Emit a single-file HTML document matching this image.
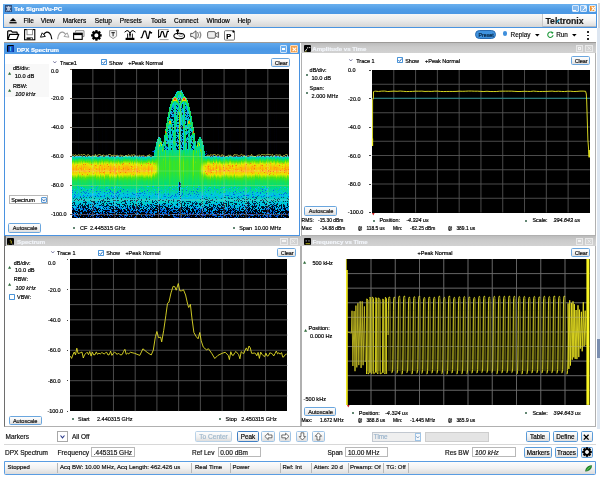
<!DOCTYPE html>
<html><head><meta charset="utf-8"><title>Tek SignalVu-PC</title>
<style>
html,body{margin:0;padding:0;background:#fff;}
body{width:600px;height:480px;position:relative;overflow:hidden;font-family:"Liberation Sans", sans-serif;}
.t{position:absolute;white-space:pre;-webkit-text-stroke:0.18px currentColor;}
.r{position:absolute;box-sizing:border-box;}
svg{position:absolute;overflow:visible;}
.dpx i{position:absolute;top:0;width:1.05px;height:100%;}
.btn{position:absolute;box-sizing:border-box;border:0.9px solid #6aa6de;border-radius:1.6px;background:linear-gradient(#fdfdfd,#f2f2f2 55%,#dedede);}
</style></head><body>
<div class="r" style="left:3.40px;top:3.70px;width:593.20px;height:471.00px;background:#fff;"></div>
<div class="r" style="left:3.40px;top:3.70px;width:593.20px;height:10.20px;background:linear-gradient(#6ab0ee,#4f9ce6 55%,#4a97e4);"></div>
<div class="r" style="left:4.60px;top:4.90px;width:7.20px;height:6.80px;background:#2f4f80;"></div>
<svg style="left:4.6px;top:4.9px" width="7.2" height="6.8" viewBox="0 0 7.2 6.8"><path d="M1 2.2H6.2M2.6 2.2V5.2Q2.4 6 1.2 5.8M4.6 2.2V5.2Q4.8 6 6 5.8M3.6 1V6" stroke="#dfe8f5" stroke-width="0.8" fill="none"/></svg>
<span class="t" style="left:14.20px;top:6px;font-size:6.1px;line-height:6.1px;color:#fff;font-weight:bold;">Tek SignalVu-PC</span>
<div class="r" style="left:571.80px;top:4.60px;width:7.00px;height:7.60px;background:#86bbf0;border-radius:1px;border:0.5px solid #d8e8fa;"></div>
<div class="r" style="left:580.30px;top:4.60px;width:7.00px;height:7.60px;background:#86bbf0;border-radius:1px;border:0.5px solid #d8e8fa;"></div>
<div class="r" style="left:589.40px;top:4.60px;width:7.00px;height:7.60px;background:#f5952e;border-radius:1px;border:0.5px solid #d8e8fa;"></div>
<div class="r" style="left:573.40px;top:10.00px;width:3.00px;height:1.00px;background:#fff;"></div>
<svg style="left:581.6px;top:5.8px" width="4.6" height="5" viewBox="0 0 4.6 5"><path d="M0.6 4.4L4 0.8M2 0.8H4V2.8" stroke="#fff" stroke-width="1" fill="none"/></svg>
<svg style="left:590.6px;top:5.8px" width="4.8" height="5.2" viewBox="0 0 4.8 5.2"><path d="M0.6 0.6L4.2 4.6M4.2 0.6L0.6 4.6" stroke="#fff" stroke-width="1.2" fill="none"/></svg>
<div class="r" style="left:3.40px;top:13.90px;width:593.20px;height:13.80px;background:linear-gradient(#f6f6f6,#ececec 45%,#d6d6d6);border-left:1.2px solid #4a94e0;border-right:1.2px solid #4a94e0;border-bottom:1.2px solid #4a94e0;"></div>
<svg style="left:9px;top:17.5px" width="8" height="6" viewBox="0 0 8 6"><path d="M4 0L7.4 3.2H0.6Z" fill="#000"/><rect x="0.4" y="4.1" width="7.2" height="1.3" fill="#000"/></svg>
<span class="t" style="left:23.40px;top:18px;font-size:6.5px;line-height:6.5px;color:#000;">File</span>
<span class="t" style="left:40.80px;top:18px;font-size:6.5px;line-height:6.5px;color:#000;">View</span>
<span class="t" style="left:62.80px;top:18px;font-size:6.5px;line-height:6.5px;color:#000;">Markers</span>
<span class="t" style="left:94.80px;top:18px;font-size:6.5px;line-height:6.5px;color:#000;">Setup</span>
<span class="t" style="left:119.80px;top:18px;font-size:6.5px;line-height:6.5px;color:#000;">Presets</span>
<span class="t" style="left:151.00px;top:18px;font-size:6.5px;line-height:6.5px;color:#000;">Tools</span>
<span class="t" style="left:174.00px;top:18px;font-size:6.5px;line-height:6.5px;color:#000;">Connect</span>
<span class="t" style="left:206.60px;top:18px;font-size:6.5px;line-height:6.5px;color:#000;">Window</span>
<span class="t" style="left:237.40px;top:18px;font-size:6.5px;line-height:6.5px;color:#000;">Help</span>
<div class="r" style="left:541.50px;top:14.20px;width:54.20px;height:12.40px;background:linear-gradient(#fff,#f4f4f4 55%,#dedede);border-left:0.6px solid #c8c8c8;border-bottom:0.6px solid #b0b8c4;"></div>
<span class="t" style="left:545.50px;top:17px;font-size:8.7px;line-height:8.7px;color:#1a1a1a;font-weight:bold;letter-spacing:-0.05px;">Tektronix</span>
<svg style="left:555.6px;top:19.0px" width="4.4" height="5.2" viewBox="0 0 4.4 5.2"><path d="M0.8 3.4L3.4 0.6" stroke="#18a8d8" stroke-width="1.3"/></svg>
<div class="r" style="left:4.40px;top:27.70px;width:591.20px;height:15.00px;background:#fff;"></div>
<div class="r" style="left:4.40px;top:42.00px;width:591.20px;height:1.40px;background:#9c9a98;"></div>
<svg style="left:6.6px;top:29.6px" width="12.4" height="10.4" viewBox="0 0 12.4 10.4"><path d="M0.7 9.4V1.6Q0.7 0.9 1.4 0.9H4.2L5.4 2.2H9.6Q10.2 2.2 10.2 2.9V4.2" fill="none" stroke="#000" stroke-width="1.2"/><path d="M0.8 9.5L2.8 4.3H11.8L9.8 9.5Z" fill="#fff" stroke="#000" stroke-width="1.2" stroke-linejoin="round"/></svg>
<svg style="left:23.8px;top:29.4px" width="11.6" height="11.4" viewBox="0 0 11.6 11.4"><rect x="0.6" y="0.6" width="10.2" height="10.2" fill="#fff" stroke="#000" stroke-width="1.1"/><rect x="3" y="0.6" width="5.4" height="5.2" fill="#fff" stroke="#777" stroke-width="0.8"/><rect x="2.6" y="8.4" width="6.2" height="2.2" fill="#222"/><rect x="6.6" y="8.9" width="1.3" height="1.3" fill="#ddd"/></svg>
<svg style="left:40.4px;top:30.6px" width="12.4" height="9" viewBox="0 0 12.4 9"><path d="M3.4 3.8Q6.6 -0.6 9.6 2.2Q11.4 4.2 11.8 8.2" fill="none" stroke="#000" stroke-width="1.2"/><path d="M0.5 6.2L2.2 1.8L5.4 5.4Z" fill="#fff" stroke="#000" stroke-width="0.9" stroke-linejoin="round"/></svg>
<svg style="left:57.0px;top:30.6px" width="12.4" height="9" viewBox="0 0 12.4 9"><path d="M9 3.8Q5.8 -0.6 2.8 2.2Q1 4.2 0.6 8.2" fill="none" stroke="#9a9a9a" stroke-width="1.2"/><path d="M11.9 6.2L10.2 1.8L7 5.4Z" fill="#fff" stroke="#9a9a9a" stroke-width="0.9" stroke-linejoin="round"/></svg>
<svg style="left:73.4px;top:29.6px" width="12" height="10.2" viewBox="0 0 12 10.2"><path d="M2.6 2.4V0.7H11V6.6H9.6" fill="none" stroke="#8a8a8a" stroke-width="1"/><rect x="0.6" y="3.2" width="8.6" height="6.2" fill="#fff" stroke="#000" stroke-width="1.1"/><rect x="0.6" y="3.2" width="8.6" height="1.9" fill="#000"/></svg>
<svg style="left:91.2px;top:29.6px" width="10.8" height="10.8" viewBox="0 0 10.8 10.8"><g transform="translate(5.4 5.4)"><rect x="-1.15" y="-5.3" width="2.3" height="3" transform="rotate(0)" fill="#000"/><rect x="-1.15" y="-5.3" width="2.3" height="3" transform="rotate(45)" fill="#000"/><rect x="-1.15" y="-5.3" width="2.3" height="3" transform="rotate(90)" fill="#000"/><rect x="-1.15" y="-5.3" width="2.3" height="3" transform="rotate(135)" fill="#000"/><rect x="-1.15" y="-5.3" width="2.3" height="3" transform="rotate(180)" fill="#000"/><rect x="-1.15" y="-5.3" width="2.3" height="3" transform="rotate(225)" fill="#000"/><rect x="-1.15" y="-5.3" width="2.3" height="3" transform="rotate(270)" fill="#000"/><rect x="-1.15" y="-5.3" width="2.3" height="3" transform="rotate(315)" fill="#000"/><circle r="3.1" fill="none" stroke="#000" stroke-width="2.0"/></g></svg>
<svg style="left:109.2px;top:29.8px" width="8.4" height="9.4" viewBox="0 0 8.4 9.4"><path d="M0.6 0.6H7.6V6.2L4.1 8.6L0.6 6.2Z" fill="#f4f4f4" stroke="#8c8c8c" stroke-width="0.9"/><path d="M2.4 2.6H5.8M4.1 2.6V6.2" stroke="#333" stroke-width="1.1" fill="none"/></svg>
<svg style="left:124.4px;top:28.8px" width="12" height="11.6" viewBox="0 0 12 11.6"><path d="M0.6 3.2Q3.2 0.2 5.0 2.4Q6 4 6 6.5M11.4 3.2Q8.8 0.2 7.0 2.4Q6 4 6 6.5" fill="none" stroke="#000" stroke-width="1"/><path d="M3.6 9V4.6M8.4 9V4.6M6 8.6V5" stroke="#000" stroke-width="0.9" fill="none"/><rect x="1.6" y="8.8" width="8.8" height="2.2" fill="#000"/></svg>
<svg style="left:140.0px;top:29.6px" width="12.6" height="10.2" viewBox="0 0 12.6 10.2"><path d="M0.6 7.6H1.8L4 1.2H5.6L7.4 8.4H8.4L9.8 1.4L11 3.2L12 2.4" fill="none" stroke="#000" stroke-width="1.2" stroke-linejoin="round"/></svg>
<svg style="left:156.8px;top:29.2px" width="12.6" height="11.2" viewBox="0 0 12.6 11.2"><path d="M1 0.6H11.6M2.6 10.6H11.6" stroke="#777" stroke-width="0.7"/><path d="M1.6 1V9" stroke="#000" stroke-width="1"/><path d="M1.6 7.6H3.2L4.6 2.6H6L7.6 8H9L10.4 2.4H12" fill="none" stroke="#000" stroke-width="1.2" stroke-linejoin="round"/></svg>
<svg style="left:173.4px;top:29.4px" width="12.4" height="10.4" viewBox="0 0 12.4 10.4"><ellipse cx="6.2" cy="7" rx="5.4" ry="2.8" fill="#fff" stroke="#000" stroke-width="1.1"/><ellipse cx="8" cy="6.6" rx="2" ry="1" fill="none" stroke="#555" stroke-width="0.6"/><path d="M4.6 5.6V2.6" stroke="#000" stroke-width="1.2"/><rect x="3.2" y="0.4" width="2.8" height="2.4" rx="0.8" fill="#000"/></svg>
<svg style="left:190.0px;top:29.8px" width="12.2" height="10" viewBox="0 0 12.2 10"><path d="M0.7 3.4H2.8L6 0.8V9.2L2.8 6.6H0.7Z" fill="#f2f2f2" stroke="#444" stroke-width="0.9" stroke-linejoin="round"/><path d="M7.6 2Q9.4 5 7.6 8" fill="none" stroke="#666" stroke-width="0.9"/><path d="M9.6 1.6Q12 5 9.6 8.4" fill="none" stroke="#888" stroke-width="1.2"/></svg>
<svg style="left:206.8px;top:31px" width="12.6" height="8.2" viewBox="0 0 12.6 8.2"><rect x="0.6" y="0.6" width="7.8" height="6.6" rx="1.4" fill="#eee" stroke="#555" stroke-width="0.9"/><path d="M8.6 3L11.6 1.2V6.6L8.6 4.8Z" fill="#ddd" stroke="#555" stroke-width="0.9" stroke-linejoin="round"/></svg>
<svg style="left:223.8px;top:29.8px" width="11.6" height="10.6" viewBox="0 0 11.6 10.6"><rect x="0.5" y="0.7" width="10" height="9.4" rx="1" fill="#fff" stroke="#555" stroke-width="0.8"/><circle cx="9.4" cy="1.6" r="1.1" fill="#000"/></svg>
<span class="t" style="left:226.20px;top:33px;font-size:7.6px;line-height:7.6px;color:#000;font-weight:bold;">P</span>
<div class="r" style="left:475.2px;top:30.4px;width:20.6px;height:9px;border-radius:4.5px;background:#3f92de;border:0.8px solid #2a6bb0;"></div>
<span class="t" style="left:478.60px;top:33px;font-size:5.2px;line-height:5.2px;color:#06233f;">Preset</span>
<div class="r" style="left:502.9px;top:31.4px;width:4.2px;height:4.2px;border-radius:50%;background:#3f8fdc;"></div>
<span class="t" style="left:510.60px;top:32px;font-size:6.4px;line-height:6.4px;color:#111;">Replay</span>
<svg style="left:534.6px;top:33.6px" width="4.6" height="2.8" viewBox="0 0 4.6 2.8"><path d="M0 0H4.6L2.3 2.6Z" fill="#000"/></svg>
<svg style="left:547.0px;top:30.6px" width="6.8" height="6.8" viewBox="0 0 6.8 6.8"><path d="M5.6 2.1A2.7 2.7 0 1 0 6.1 4.2" fill="none" stroke="#1f9a3c" stroke-width="1.1"/><path d="M4.2 0.4L6.6 1.2L5 3.2Z" fill="#1f9a3c"/></svg>
<span class="t" style="left:556.20px;top:32px;font-size:6.4px;line-height:6.4px;color:#111;">Run</span>
<svg style="left:571.6px;top:33.6px" width="4.6" height="2.8" viewBox="0 0 4.6 2.8"><path d="M0 0H4.6L2.3 2.6Z" fill="#000"/></svg>
<div class="r" style="left:587.30px;top:31.00px;width:1.60px;height:1.60px;background:#000;border-radius:50%;"></div>
<div class="r" style="left:587.30px;top:34.60px;width:1.60px;height:1.60px;background:#000;border-radius:50%;"></div>
<div class="r" style="left:587.30px;top:38.20px;width:1.60px;height:1.60px;background:#000;border-radius:50%;"></div>
<div class="r" style="left:3.70px;top:43.40px;width:296.40px;height:192.50px;background:#fff;border:1.7px solid #4a92e0;"></div>
<div class="r" style="left:3.70px;top:43.40px;width:296.40px;height:10.80px;background:linear-gradient(#60a8ec,#4a97e5 55%,#4f9be6);"></div>
<div class="r" style="left:6.70px;top:45.00px;width:7.40px;height:7.40px;background:#050505;border-radius:1px;"></div>
<div class="r" style="left:7.50px;top:45.80px;width:6.00px;height:6.60px;background:linear-gradient(90deg,#0a2a9a,#1e6ae0 50%,#0a2a9a);"></div>
<div class="r" style="left:9.70px;top:47.00px;width:1.40px;height:4.40px;background:#35c8e8;"></div>
<span class="t" style="left:16.70px;top:47px;font-size:6.1px;line-height:6.1px;color:#fff;font-weight:bold;">DPX Spectrum</span>
<div class="r" style="left:280.10px;top:45.30px;width:7.40px;height:7.40px;background:#6aaef0;border:0.6px solid #cfe3f8;border-radius:1px;"></div>
<div class="r" style="left:281.90px;top:47.50px;width:3.60px;height:2.60px;background:#fff;"></div>
<div class="r" style="left:290.20px;top:45.30px;width:7.90px;height:7.50px;background:#f5a04a;border:0.6px solid #fbd9b8;border-radius:1px;"></div>
<svg style="left:291.90000000000003px;top:46.6px" width="4.8" height="4.8" viewBox="0 0 4.8 4.8"><path d="M0.6 0.6L4.2 4.2M4.2 0.6L0.6 4.2" stroke="#fff" stroke-width="1.1"/></svg>
<div class="r" style="left:5.20px;top:64.40px;width:43.50px;height:33.00px;background:#f8f8f8;"></div>
<svg style="left:52.8px;top:60.6px" width="3.6" height="2.6" viewBox="0 0 3.6 2.6"><path d="M0.3 0.3L1.8 2L3.3 0.3" stroke="#5a5a8a" stroke-width="0.8" fill="none"/></svg>
<span class="t" style="left:60.00px;top:61px;font-size:5.5px;line-height:5.5px;color:#000;">Trace1</span>
<div class="r" style="left:100.60px;top:59.30px;width:6.00px;height:6.00px;background:#fff;border:0.8px solid #4a94d8;border-radius:0.8px;"></div>
<svg style="left:100.6px;top:59.3px" width="6.0" height="6.0" viewBox="0 0 6.0 6.0"><path d="M1.4 3.2L2.6 4.4L4.8 1.6" stroke="#2a6db8" stroke-width="1" fill="none"/></svg>
<span class="t" style="left:109.00px;top:61px;font-size:5.5px;line-height:5.5px;color:#000;">Show</span>
<span class="t" style="left:128.20px;top:61px;font-size:5.5px;line-height:5.5px;color:#000;">+Peak Normal</span>
<div class="btn" style="left:271.1px;top:57.5px;width:18.6px;height:9.2px;"></div>
<span class="t" style="left:274.70px;top:61px;font-size:5.6px;line-height:5.6px;color:#111;letter-spacing:-0.12px;">Clear</span>
<svg style="left:7.800000000000001px;top:71.8px" width="3.2" height="2.8" viewBox="0 0 3.2 2.8"><path d="M1.6 0L3.2 2.8H0Z" fill="#2f6a3a"/></svg>
<span class="t" style="left:13.00px;top:66px;font-size:5.5px;line-height:5.5px;color:#000;">dB/div:</span>
<span class="t" style="left:14.70px;top:74px;font-size:5.7px;line-height:5.7px;color:#000;">10.0 dB</span>
<svg style="left:7.800000000000001px;top:88.8px" width="3.2" height="2.8" viewBox="0 0 3.2 2.8"><path d="M1.6 0L3.2 2.8H0Z" fill="#2f6a3a"/></svg>
<span class="t" style="left:13.00px;top:84px;font-size:5.5px;line-height:5.5px;color:#000;">RBW:</span>
<span class="t" style="left:15.30px;top:92px;font-size:5.5px;line-height:5.5px;color:#000;font-style:italic;">100 kHz</span>
<span class="t" style="left:51.00px;top:69px;font-size:5.5px;line-height:5.5px;color:#000;">0.0</span>
<div class="r" style="left:70.20px;top:69.20px;width:1.40px;height:0.60px;background:#6a5a4a;"></div>
<span class="t" style="left:51.00px;top:96px;font-size:5.5px;line-height:5.5px;color:#000;">-20.0</span>
<div class="r" style="left:70.20px;top:98.20px;width:1.40px;height:0.60px;background:#6a5a4a;"></div>
<span class="t" style="left:51.00px;top:125px;font-size:5.5px;line-height:5.5px;color:#000;">-40.0</span>
<div class="r" style="left:70.20px;top:127.20px;width:1.40px;height:0.60px;background:#6a5a4a;"></div>
<span class="t" style="left:51.00px;top:154px;font-size:5.5px;line-height:5.5px;color:#000;">-60.0</span>
<div class="r" style="left:70.20px;top:156.20px;width:1.40px;height:0.60px;background:#6a5a4a;"></div>
<span class="t" style="left:51.00px;top:183px;font-size:5.5px;line-height:5.5px;color:#000;">-80.0</span>
<div class="r" style="left:70.20px;top:185.20px;width:1.40px;height:0.60px;background:#6a5a4a;"></div>
<span class="t" style="left:51.00px;top:212px;font-size:5.5px;line-height:5.5px;color:#000;">-100.0</span>
<div class="r" style="left:70.20px;top:214.20px;width:1.40px;height:0.60px;background:#6a5a4a;"></div>
<div class="r dpx" style="left:72.2px;top:69.0px;width:216.8px;height:148.9px;background:#000;overflow:hidden;"><i style="left:0px;background:linear-gradient(#000 0.5px,#000 86.5px,#002040 87.5px,#00cfc5 88.5px,#00d69f 89.5px,#06de70 90.5px,#43e418 92.5px,#d3eb02 95.5px,#eae002 96.5px,#fdbc09 100.5px,#d8eb01 105.5px,#46e414 108.5px,#1ae053 111.5px,#00db8a 118.5px,#00c6eb 125.5px,#00b3e8 127.5px,#005877 128.5px,#002d4f 132.5px,#000714 140.5px,#000001 148.5px)"></i><i style="left:1px;background:linear-gradient(#000 0.5px,#000 86.5px,#00385a 87.5px,#00d3b1 88.5px,#00db8a 89.5px,#67e610 92.5px,#d3eb02 94.5px,#ffb80a 97.5px,#ffa20a 100.5px,#ecde03 105.5px,#46e414 109.5px,#27e140 111.5px,#01de76 118.5px,#00c8ea 126.5px,#00b4e8 128.5px,#005979 129.5px,#002c4e 133.5px,#000817 140.5px,#000001 148.5px)"></i><i style="left:2px;background:linear-gradient(#000 0.5px,#000 87.5px,#00cdd2 88.5px,#00dc82 90.5px,#3ae325 92.5px,#e8e402 96.5px,#ffb60a 100.5px,#e9e302 105.5px,#43e418 109.5px,#19e055 112.5px,#00db8a 119.5px,#00c5eb 126.5px,#00b1e8 128.5px,#005575 129.5px,#002b4d 133.5px,#000817 140.5px,#000002 148.5px)"></i><i style="left:3px;background:linear-gradient(#000 0.5px,#000 86.5px,#005071 87.5px,#00d2b7 88.5px,#00d991 89.5px,#58e512 92.5px,#e6e801 95.5px,#ffb40a 99.5px,#fdbd09 102.5px,#e5ea00 105.5px,#53e512 108.5px,#1fe14c 111.5px,#00dc81 118.5px,#00c1ea 126.5px,#00b7e9 127.5px,#005d7c 128.5px,#002749 133.5px,#000715 140.5px,#000001 148.5px)"></i><i style="left:4px;background:linear-gradient(#000 0.5px,#000 86.5px,#000c20 87.5px,#00d2b9 88.5px,#00d992 89.5px,#0edf65 90.5px,#5be511 92.5px,#e9e302 95.5px,#ffb20a 98.5px,#ffa20a 100.5px,#eddb03 105.5px,#d8eb02 106.5px,#4be413 109.5px,#21e14a 112.5px,#02de75 118.5px,#00c0ea 127.5px,#00b6e9 128.5px,#005b7a 129.5px,#002d4f 133.5px,#000613 141.5px,#000002 148.5px)"></i><i style="left:5px;background:linear-gradient(#000 0.5px,#000 86.5px,#001431 87.5px,#00cfc8 88.5px,#00d6a3 89.5px,#03de74 90.5px,#41e41b 92.5px,#e9e302 96.5px,#fcbe09 100.5px,#d7eb02 105.5px,#46e414 108.5px,#1ae053 111.5px,#00da8b 118.5px,#00c6eb 125.5px,#00b3e8 127.5px,#005777 128.5px,#002d4f 132.5px,#000714 140.5px,#000001 148.5px)"></i><i style="left:6px;background:linear-gradient(#000 0.5px,#000209 86.5px,#00ccd4 87.5px,#00dc83 89.5px,#5be511 92.5px,#e4ec00 95.5px,#fac208 99.5px,#d5eb02 104.5px,#45e415 107.5px,#1ae053 110.5px,#00da8d 117.5px,#00c5eb 124.5px,#00b2e8 126.5px,#005676 127.5px,#002d4f 131.5px,#000715 139.5px,#000001 148.5px)"></i><i style="left:7px;background:linear-gradient(#000 0.5px,#000 86.5px,#00bce9 87.5px,#00da8a 89.5px,#63e510 92.5px,#cdeb03 94.5px,#e9e202 95.5px,#ffb60a 98.5px,#ffb80a 102.5px,#e7e701 105.5px,#59e512 108.5px,#21e149 111.5px,#00dd7d 118.5px,#00c3ea 126.5px,#00b9e9 127.5px,#00607e 128.5px,#00284a 133.5px,#000715 140.5px,#000001 148.5px)"></i><i style="left:8px;background:linear-gradient(#000 0.5px,#000 86.5px,#00ccd8 87.5px,#00da8b 89.5px,#5ce511 92.5px,#e6e801 95.5px,#ffb90a 99.5px,#e9e202 104.5px,#d3eb02 105.5px,#44e416 108.5px,#19e055 111.5px,#00db89 118.5px,#00c5eb 125.5px,#00b2e8 127.5px,#005676 128.5px,#002c4e 132.5px,#000613 140.5px,#000001 148.5px)"></i><i style="left:9px;background:linear-gradient(#000 0.5px,#000 86.5px,#00d1be 87.5px,#00d896 88.5px,#09df6c 89.5px,#55e512 91.5px,#eae102 94.5px,#ffb60a 96.5px,#ff9a0a 100.5px,#eae102 105.5px,#44e416 109.5px,#28e13f 111.5px,#02de75 118.5px,#00c8eb 126.5px,#00b4e8 128.5px,#005878 129.5px,#002a4c 133.5px,#000715 140.5px,#000001 148.5px)"></i><i style="left:10px;background:linear-gradient(#000 0.5px,#000 86.5px,#002343 87.5px,#00d0c2 88.5px,#00d79c 89.5px,#46e414 92.5px,#daeb01 95.5px,#ffb90a 100.5px,#dfec01 105.5px,#4ce413 108.5px,#1ce050 111.5px,#00db86 118.5px,#00c8eb 125.5px,#00b5e8 127.5px,#005a79 128.5px,#002f51 132.5px,#000715 140.5px,#000001 148.5px)"></i><i style="left:11px;background:linear-gradient(#000 0.5px,#000 86.5px,#00cfc8 87.5px,#01de77 89.5px,#43e418 91.5px,#e5eb00 94.5px,#ffb50a 97.5px,#ffa40a 100.5px,#e7e701 105.5px,#5be511 108.5px,#23e146 111.5px,#00dd7b 118.5px,#00c4eb 126.5px,#00bae9 127.5px,#00617f 128.5px,#00284a 133.5px,#000715 140.5px,#000001 148.5px)"></i><i style="left:12px;background:linear-gradient(#000 0.5px,#000 86.5px,#00c9e6 87.5px,#00db86 89.5px,#39e326 91.5px,#6ae60f 92.5px,#d5eb02 94.5px,#ffb20a 98.5px,#ffb40a 102.5px,#e8e401 105.5px,#5de511 108.5px,#22e147 111.5px,#00de7b 118.5px,#00c5eb 126.5px,#00b1e8 128.5px,#005475 129.5px,#00294b 133.5px,#000715 140.5px,#000001 148.5px)"></i><i style="left:13px;background:linear-gradient(#000 0.5px,#000001 87.5px,#00cec9 88.5px,#00de77 90.5px,#42e419 92.5px,#ddec01 95.5px,#ffb40a 99.5px,#febb0a 103.5px,#ecdd03 105.5px,#d9eb01 106.5px,#4ae414 109.5px,#1ee14e 112.5px,#00dc84 119.5px,#00c8ea 126.5px,#00b5e8 128.5px,#005a79 129.5px,#002d4f 133.5px,#000613 141.5px,#000002 148.5px)"></i><i style="left:14px;background:linear-gradient(#000 0.5px,#000 86.5px,#00cae3 87.5px,#00db8a 89.5px,#63e510 92.5px,#cdeb03 94.5px,#e9e202 95.5px,#ffb80a 98.5px,#ffba0a 102.5px,#e6e901 105.5px,#55e512 108.5px,#1fe14b 111.5px,#00dd7f 118.5px,#00c2ea 126.5px,#00b8e9 127.5px,#005e7d 128.5px,#002749 133.5px,#000715 140.5px,#000001 148.5px)"></i><i style="left:15px;background:linear-gradient(#000 0.5px,#000 86.5px,#001e3e 87.5px,#00d0c2 88.5px,#00d79d 89.5px,#46e414 92.5px,#d9eb01 95.5px,#ffb80a 100.5px,#e0ec01 105.5px,#4de413 108.5px,#1de04f 111.5px,#00db86 118.5px,#00c8eb 125.5px,#00b5e8 127.5px,#005a7a 128.5px,#002f51 132.5px,#000715 140.5px,#000001 148.5px)"></i><i style="left:16px;background:linear-gradient(#000 0.5px,#000 86.5px,#00cade 87.5px,#00d990 89.5px,#57e512 92.5px,#e5e901 95.5px,#ffb90a 99.5px,#fac208 102.5px,#daec01 105.5px,#47e414 108.5px,#1ae053 111.5px,#00db86 118.5px,#00c7eb 125.5px,#00b4e8 127.5px,#005878 128.5px,#002d4f 132.5px,#000614 140.5px,#000001 148.5px)"></i><i style="left:17px;background:linear-gradient(#000 0.5px,#000 86.5px,#004163 87.5px,#00d0c4 88.5px,#00d79f 89.5px,#43e418 92.5px,#d0eb03 95.5px,#e9e202 96.5px,#fbc108 100.5px,#e7e601 104.5px,#42e41a 108.5px,#16e059 111.5px,#00da8e 118.5px,#00c3ea 125.5px,#00b9e9 126.5px,#00607f 127.5px,#002b4d 132.5px,#000613 140.5px,#000001 148.5px)"></i><i style="left:18px;background:linear-gradient(#000 0.5px,#000 86.5px,#00ccd6 87.5px,#00db88 89.5px,#60e511 92.5px,#e7e601 95.5px,#ffb60a 99.5px,#eae002 104.5px,#d6eb02 105.5px,#45e415 108.5px,#1ae053 111.5px,#00db87 118.5px,#00c6eb 125.5px,#00b3e8 127.5px,#005777 128.5px,#002c4e 132.5px,#000613 140.5px,#000001 148.5px)"></i><i style="left:19px;background:linear-gradient(#000 0.5px,#000 87.5px,#00cbdb 88.5px,#00da8e 90.5px,#4fe413 93.5px,#d9eb01 96.5px,#f8c608 100.5px,#d7eb02 105.5px,#4ae413 108.5px,#0fdf62 112.5px,#00d898 119.5px,#00c5eb 125.5px,#00b2e8 127.5px,#005777 128.5px,#002e50 132.5px,#000715 140.5px,#000002 148.5px)"></i><i style="left:20px;background:linear-gradient(#000 0.5px,#000 86.5px,#001533 87.5px,#00cfc6 88.5px,#00d6a1 89.5px,#04de72 90.5px,#42e419 92.5px,#d2eb02 95.5px,#eae102 96.5px,#febc09 100.5px,#dbec01 105.5px,#49e414 108.5px,#1be051 111.5px,#00db89 118.5px,#00c7eb 125.5px,#00b4e8 127.5px,#005978 128.5px,#002e50 132.5px,#000714 140.5px,#000001 148.5px)"></i><i style="left:21px;background:linear-gradient(#000 0.5px,#000 86.5px,#004c6d 87.5px,#00d0bf 88.5px,#00d89a 89.5px,#48e414 92.5px,#daeb01 95.5px,#fdbc09 100.5px,#d5eb02 105.5px,#45e416 108.5px,#19e055 111.5px,#00db8a 118.5px,#00c5eb 125.5px,#00b2e8 127.5px,#005676 128.5px,#002d4e 132.5px,#000614 140.5px,#000001 148.5px)"></i><i style="left:22px;background:linear-gradient(#000 0.5px,#000 86.5px,#00cdcf 87.5px,#00dd7f 89.5px,#3de321 91.5px,#6de60f 92.5px,#d4eb02 94.5px,#ffb80a 98.5px,#fdbd09 102.5px,#ecdd03 104.5px,#daec01 105.5px,#49e414 108.5px,#1de04f 111.5px,#00dc84 118.5px,#00c8eb 125.5px,#00b5e8 127.5px,#005979 128.5px,#002d4f 132.5px,#000613 140.5px,#000001 148.5px)"></i><i style="left:23px;background:linear-gradient(#000 0.5px,#000003 86.5px,#00ccd5 87.5px,#00db85 89.5px,#5ae511 92.5px,#e4ec00 95.5px,#fbc108 99.5px,#dcec01 104.5px,#4de413 107.5px,#12e05f 111.5px,#00da8b 117.5px,#00c7eb 124.5px,#00b4e8 126.5px,#005979 127.5px,#002748 132.5px,#000511 140.5px,#000001 148.5px)"></i><i style="left:24px;background:linear-gradient(#000 0.5px,#000 86.5px,#00486a 87.5px,#00d4ac 88.5px,#00dc85 89.5px,#3ae325 91.5px,#70e60f 92.5px,#dcec01 94.5px,#ffb30a 97.5px,#ff9d0a 100.5px,#eddb03 105.5px,#4be413 109.5px,#29e23d 111.5px,#03de73 118.5px,#00c0ea 127.5px,#00b6e9 128.5px,#005b7a 129.5px,#002d4f 133.5px,#000817 140.5px,#000001 148.5px)"></i><i style="left:25px;background:linear-gradient(#000 0.5px,#000208 87.5px,#00cece 88.5px,#00dd7c 90.5px,#3de320 92.5px,#e8e501 96.5px,#feba0a 100.5px,#e4ec00 105.5px,#52e512 108.5px,#15e05a 112.5px,#00db86 118.5px,#00c0ea 126.5px,#00b6e9 127.5px,#005c7b 128.5px,#003052 132.5px,#000716 140.5px,#000001 148.5px)"></i><i style="left:26px;background:linear-gradient(#000 0.5px,#000 86.5px,#000511 87.5px,#00cecc 88.5px,#00de79 90.5px,#3fe31e 92.5px,#e8e402 96.5px,#febb0a 100.5px,#e0ec00 105.5px,#4ee413 108.5px,#1de14e 111.5px,#00db88 118.5px,#00c8eb 125.5px,#00b5e8 127.5px,#005a7a 128.5px,#002f51 132.5px,#000715 140.5px,#000001 148.5px)"></i><i style="left:27px;background:linear-gradient(#000 0.5px,#000 86.5px,#00091b 87.5px,#00d2b6 88.5px,#00da8e 89.5px,#10df61 90.5px,#63e510 92.5px,#d0eb03 94.5px,#ffb40a 97.5px,#ff9a0a 100.5px,#ffaf0a 103.5px,#e4ec00 106.5px,#56e512 109.5px,#24e144 112.5px,#05de70 118.5px,#00c3ea 127.5px,#00b9e9 128.5px,#005f7e 129.5px,#002f52 133.5px,#000613 141.5px,#000002 148.5px)"></i><i style="left:28px;background:linear-gradient(#000 0.5px,#000 86.5px,#00c9e6 87.5px,#0adf6a 90.5px,#44e417 92.5px,#e9e302 96.5px,#f8c707 100.5px,#e1ec00 104.5px,#58e512 107.5px,#11df60 111.5px,#00d994 118.5px,#00c8eb 124.5px,#00b5e8 126.5px,#005a7a 127.5px,#00284a 132.5px,#000612 140.5px,#000001 148.5px)"></i><i style="left:29px;background:linear-gradient(#000 0.5px,#000 86.5px,#005e7d 87.5px,#00d3b0 88.5px,#00db89 89.5px,#67e610 92.5px,#d3eb02 94.5px,#ffb20a 98.5px,#ffb30a 102.5px,#e9e202 105.5px,#61e511 108.5px,#24e144 111.5px,#00de79 118.5px,#00c6eb 126.5px,#00b2e8 128.5px,#005676 129.5px,#002a4c 133.5px,#000716 140.5px,#000001 148.5px)"></i><i style="left:30px;background:linear-gradient(#000 0.5px,#000105 86.5px,#00d0c2 87.5px,#00d79b 88.5px,#06df6f 89.5px,#4ce413 91.5px,#e6e901 94.5px,#ffb60a 97.5px,#ffaa0a 100.5px,#eeda04 104.5px,#ddec01 105.5px,#4ee413 108.5px,#20e14a 111.5px,#02de76 117.5px,#00c1ea 126.5px,#00b7e9 127.5px,#005c7b 128.5px,#002e50 132.5px,#000613 140.5px,#000001 148.5px)"></i><i style="left:31px;background:linear-gradient(#000 0.5px,#000 86.5px,#000a1b 87.5px,#00ceca 88.5px,#01de77 90.5px,#40e31d 92.5px,#e9e302 96.5px,#fdbc09 100.5px,#ddec01 105.5px,#4be413 108.5px,#1ce050 111.5px,#00db89 118.5px,#00c7eb 125.5px,#00b4e8 127.5px,#005979 128.5px,#002f51 132.5px,#000715 140.5px,#000001 148.5px)"></i><i style="left:32px;background:linear-gradient(#000 0.5px,#000 86.5px,#00040e 87.5px,#00d3b0 88.5px,#00db88 89.5px,#36e32b 91.5px,#70e60f 92.5px,#dfec01 94.5px,#ffa90a 97.5px,#ff8d0a 100.5px,#ffa00a 103.5px,#eae002 106.5px,#46e414 110.5px,#2be23a 112.5px,#00dc84 120.5px,#00c0ea 128.5px,#00b5e8 129.5px,#005a79 130.5px,#002a4c 134.5px,#000715 141.5px,#000002 148.5px)"></i><i style="left:33px;background:linear-gradient(#000 0.5px,#000104 86.5px,#00cece 87.5px,#00dd7c 89.5px,#3ee31f 91.5px,#e9e302 95.5px,#ffb70a 99.5px,#e6e801 104.5px,#5ae511 107.5px,#17e057 111.5px,#00dc83 117.5px,#00c2ea 125.5px,#00b8e9 126.5px,#005f7d 127.5px,#00294b 132.5px,#000612 140.5px,#000001 148.5px)"></i><i style="left:34px;background:linear-gradient(#000 0.5px,#000104 86.5px,#00cecc 87.5px,#00de7a 89.5px,#3fe31d 91.5px,#d1eb02 94.5px,#f5cd06 96.5px,#ffb40a 99.5px,#e7e601 104.5px,#5ee511 107.5px,#18e055 111.5px,#00dc81 117.5px,#00c3ea 125.5px,#00bae9 126.5px,#00607f 127.5px,#002a4c 132.5px,#000612 140.5px,#000001 148.5px)"></i><i style="left:35px;background:linear-gradient(#000 0.5px,#000002 86.5px,#00cecd 87.5px,#00dd7c 89.5px,#3fe31f 91.5px,#d1eb02 94.5px,#f5cd06 96.5px,#ffb40a 99.5px,#e8e401 104.5px,#42e41a 108.5px,#19e055 111.5px,#00dc80 117.5px,#00c4ea 125.5px,#00b1e8 127.5px,#005575 128.5px,#002a4c 132.5px,#000612 140.5px,#000001 148.5px)"></i><i style="left:36px;background:linear-gradient(#000 0.5px,#000001 86.5px,#00ccd7 87.5px,#00db87 89.5px,#59e512 92.5px,#e4ec00 95.5px,#fbc009 99.5px,#e1ec00 104.5px,#52e513 107.5px,#13e05d 111.5px,#00d994 118.5px,#00c8eb 124.5px,#00b5e8 126.5px,#005a7a 127.5px,#002749 132.5px,#000511 140.5px,#000001 148.5px)"></i><i style="left:37px;background:linear-gradient(#000 0.5px,#000 87.5px,#00cdd0 88.5px,#00dc80 90.5px,#3de321 92.5px,#6de60f 93.5px,#d5eb02 95.5px,#ffb60a 99.5px,#febb0a 103.5px,#e0ec01 106.5px,#4ee413 109.5px,#1ee14d 112.5px,#00dc82 119.5px,#00c0ea 127.5px,#00b6e9 128.5px,#005b7b 129.5px,#002e50 133.5px,#000614 141.5px,#000002 148.5px)"></i><i style="left:38px;background:linear-gradient(#000 0.5px,#000 86.5px,#000817 87.5px,#00d3b3 88.5px,#00da8c 89.5px,#34e22e 91.5px,#68e610 92.5px,#d6eb02 94.5px,#ffb00a 97.5px,#ff960a 100.5px,#ffaa0a 103.5px,#e6e801 106.5px,#5ce511 109.5px,#27e141 112.5px,#08df6d 118.5px,#00c6eb 127.5px,#00b1e8 129.5px,#005575 130.5px,#003153 133.5px,#000714 141.5px,#000002 148.5px)"></i><i style="left:39px;background:linear-gradient(#000 0.5px,#000 86.5px,#00cdd0 87.5px,#00dc81 89.5px,#3de321 91.5px,#6ee60f 92.5px,#d7eb02 94.5px,#ffb50a 98.5px,#ffb90a 102.5px,#e4ec00 105.5px,#51e513 108.5px,#1fe14c 111.5px,#00dc80 118.5px,#00c1ea 126.5px,#00b7e9 127.5px,#005d7c 128.5px,#002648 133.5px,#000714 140.5px,#000001 148.5px)"></i><i style="left:40px;background:linear-gradient(#000 0.5px,#000 87.5px,#00cecc 88.5px,#00dd7b 90.5px,#40e31d 92.5px,#dcec01 95.5px,#ffb20a 99.5px,#ffb80a 103.5px,#e4ec00 106.5px,#51e513 109.5px,#20e14b 112.5px,#00dc80 119.5px,#00c1ea 127.5px,#00b7e9 128.5px,#005d7c 129.5px,#002f51 133.5px,#000714 141.5px,#000002 148.5px)"></i><i style="left:41px;background:linear-gradient(#000 0.5px,#000 86.5px,#004768 87.5px,#00d3b2 88.5px,#00da8b 89.5px,#65e610 92.5px,#d0eb03 94.5px,#eae002 95.5px,#ffb30a 98.5px,#ffb20a 102.5px,#eae102 105.5px,#63e510 108.5px,#25e143 111.5px,#00de79 118.5px,#00c6eb 126.5px,#00b2e8 128.5px,#005776 129.5px,#002a4c 133.5px,#000716 140.5px,#000001 148.5px)"></i><i style="left:42px;background:linear-gradient(#000 0.5px,#000001 87.5px,#00cfc5 88.5px,#00d79e 89.5px,#04de73 90.5px,#47e414 92.5px,#e5ea00 95.5px,#ffb60a 98.5px,#ffa50a 100.5px,#ffb50a 103.5px,#e4ec00 106.5px,#52e512 109.5px,#21e149 112.5px,#00dd7f 119.5px,#00c2ea 127.5px,#00b8e9 128.5px,#005d7c 129.5px,#002f51 133.5px,#000614 141.5px,#000002 148.5px)"></i><i style="left:43px;background:linear-gradient(#000 0.5px,#000 87.5px,#00cfc5 88.5px,#00d79e 89.5px,#03de74 90.5px,#46e414 92.5px,#e6e801 95.5px,#ffb20a 98.5px,#ffa00a 100.5px,#ffaf0a 103.5px,#e7e501 106.5px,#5de511 109.5px,#24e144 112.5px,#00de79 119.5px,#00c5eb 127.5px,#00b1e8 129.5px,#005575 130.5px,#003254 133.5px,#000715 141.5px,#000002 148.5px)"></i><i style="left:44px;background:linear-gradient(#000 0.5px,#000 86.5px,#000e25 87.5px,#00d1b9 88.5px,#00d992 89.5px,#0edf65 90.5px,#5ae511 92.5px,#e8e402 95.5px,#ffb40a 98.5px,#ffa30a 100.5px,#ecdd03 105.5px,#d4eb02 106.5px,#49e414 109.5px,#20e14b 112.5px,#01de76 118.5px,#00bfea 127.5px,#00b5e8 128.5px,#005a79 129.5px,#002d4e 133.5px,#000817 140.5px,#000002 148.5px)"></i><i style="left:45px;background:linear-gradient(#000 0.5px,#000 86.5px,#00cae0 87.5px,#00d994 89.5px,#46e414 92.5px,#d1eb02 95.5px,#f6c907 99.5px,#e9e302 103.5px,#ade907 105.5px,#49e414 107.5px,#0edf64 111.5px,#00d89a 118.5px,#00c4ea 124.5px,#00b1e8 126.5px,#005676 127.5px,#002e50 131.5px,#000715 139.5px,#000001 148.5px)"></i><i style="left:46px;background:linear-gradient(#000 0.5px,#000 86.5px,#00cfc8 87.5px,#01de76 89.5px,#44e417 91.5px,#e4eb00 94.5px,#ffb60a 97.5px,#ffa40a 99.5px,#ffb30a 102.5px,#e6e901 105.5px,#57e512 108.5px,#22e147 111.5px,#00dd7d 118.5px,#00c3ea 126.5px,#00b9e9 127.5px,#005f7e 128.5px,#002749 133.5px,#000714 140.5px,#000001 148.5px)"></i><i style="left:47px;background:linear-gradient(#000 0.5px,#000 87.5px,#00cecd 88.5px,#00dd7d 90.5px,#3fe31d 92.5px,#deec01 95.5px,#ffb00a 99.5px,#ffb50a 103.5px,#e6e901 106.5px,#57e512 109.5px,#21e149 112.5px,#00dd7d 119.5px,#00c3ea 127.5px,#00b9e9 128.5px,#005f7e 129.5px,#003153 133.5px,#000714 141.5px,#000002 148.5px)"></i><i style="left:48px;background:linear-gradient(#000 0.5px,#000001 87.5px,#00cdd3 88.5px,#00dc83 90.5px,#39e326 92.5px,#61e511 93.5px,#e7e701 96.5px,#febb0a 100.5px,#e6e901 105.5px,#5be511 108.5px,#16e059 112.5px,#00dc85 118.5px,#00c2ea 126.5px,#00b8e9 127.5px,#005e7d 128.5px,#00294b 133.5px,#000816 140.5px,#000002 148.5px)"></i><i style="left:49px;background:linear-gradient(#000 0.5px,#000 86.5px,#003e60 87.5px,#00d2b8 88.5px,#00d991 89.5px,#58e512 92.5px,#e7e701 95.5px,#ffb30a 99.5px,#febb0a 102.5px,#e6e801 105.5px,#57e512 108.5px,#21e149 111.5px,#00dd7f 118.5px,#00c3ea 126.5px,#00b9e9 127.5px,#005f7e 128.5px,#00284a 133.5px,#000715 140.5px,#000001 148.5px)"></i><i style="left:50px;background:linear-gradient(#000 0.5px,#000 87.5px,#00cdd1 88.5px,#00dc81 90.5px,#3ce323 92.5px,#d1eb02 95.5px,#f5cd06 97.5px,#ffb10a 100.5px,#ebdf03 105.5px,#d8eb02 106.5px,#47e414 109.5px,#1ce051 112.5px,#00db86 119.5px,#00c8eb 126.5px,#00b4e8 128.5px,#005978 129.5px,#002d4f 133.5px,#000613 141.5px,#000002 148.5px)"></i><i style="left:51px;background:linear-gradient(#000 0.5px,#000 86.5px,#005c7b 87.5px,#00d4aa 88.5px,#00dc82 89.5px,#3ce322 91.5px,#74e60e 92.5px,#e0ec00 94.5px,#ffb20a 97.5px,#ff9c0a 100.5px,#edda03 105.5px,#4be413 109.5px,#29e23d 111.5px,#04de73 118.5px,#00c0ea 127.5px,#00b6e9 128.5px,#005b7b 129.5px,#002d4f 133.5px,#000817 140.5px,#000001 148.5px)"></i><i style="left:52px;background:linear-gradient(#000 0.5px,#000 86.5px,#00cece 87.5px,#00dd7e 89.5px,#3ee31f 91.5px,#d8eb02 94.5px,#ffb50a 98.5px,#febb0a 102.5px,#e0ec01 105.5px,#4ee413 108.5px,#1ee14d 111.5px,#00dc82 118.5px,#00c0ea 126.5px,#00b6e9 127.5px,#005b7b 128.5px,#002e50 132.5px,#000614 140.5px,#000001 148.5px)"></i><i style="left:53px;background:linear-gradient(#000 0.5px,#000 86.5px,#00cfc6 87.5px,#00d79f 88.5px,#03de74 89.5px,#46e415 91.5px,#e5eb00 94.5px,#ffb70a 97.5px,#ffa50a 99.5px,#ffb50a 102.5px,#e4ec00 105.5px,#53e512 108.5px,#21e149 111.5px,#00dd7f 118.5px,#00c2ea 126.5px,#00b8e9 127.5px,#005e7d 128.5px,#002748 133.5px,#000614 140.5px,#000001 148.5px)"></i><i style="left:54px;background:linear-gradient(#000 0.5px,#000 86.5px,#00bfea 87.5px,#00db86 89.5px,#39e326 91.5px,#6be60f 92.5px,#d7eb02 94.5px,#ffb00a 98.5px,#ffb20a 102.5px,#e9e202 105.5px,#61e511 108.5px,#24e144 111.5px,#00de79 118.5px,#00c6eb 126.5px,#00b2e8 128.5px,#005676 129.5px,#002a4c 133.5px,#000716 140.5px,#000001 148.5px)"></i><i style="left:55px;background:linear-gradient(#000 0.5px,#000 86.5px,#004b6c 87.5px,#00d4ad 88.5px,#00db85 89.5px,#39e326 91.5px,#6ee60f 92.5px,#dbec01 94.5px,#ffb40a 97.5px,#ff9f0a 100.5px,#eddc03 105.5px,#49e414 109.5px,#29e13e 111.5px,#03de74 118.5px,#00c0ea 127.5px,#00b5e8 128.5px,#005a7a 129.5px,#002c4e 133.5px,#000817 140.5px,#000001 148.5px)"></i><i style="left:56px;background:linear-gradient(#000 0.5px,#000 86.5px,#00cdd0 87.5px,#00dc81 89.5px,#3ce322 91.5px,#6de60f 92.5px,#d6eb02 94.5px,#ffb50a 98.5px,#ffb90a 102.5px,#e4eb00 105.5px,#52e512 108.5px,#1fe14c 111.5px,#00dc80 118.5px,#00c1ea 126.5px,#00b7e9 127.5px,#005d7c 128.5px,#002748 133.5px,#000714 140.5px,#000001 148.5px)"></i><i style="left:57px;background:linear-gradient(#000 0.5px,#000 86.5px,#00607e 87.5px,#00d2b5 88.5px,#00da8e 89.5px,#5de511 92.5px,#e8e501 95.5px,#ffb10a 99.5px,#febb0a 102.5px,#e6e901 105.5px,#55e512 108.5px,#20e14b 111.5px,#00dd7f 118.5px,#00c2ea 126.5px,#00b8e9 127.5px,#005e7d 128.5px,#002849 133.5px,#000715 140.5px,#000001 148.5px)"></i><i style="left:58px;background:linear-gradient(#000 0.5px,#000104 86.5px,#00cfc8 87.5px,#02de75 89.5px,#43e418 91.5px,#dcec01 94.5px,#ffb70a 98.5px,#fcbe09 102.5px,#eae102 104.5px,#45e416 108.5px,#1be051 111.5px,#00dd7c 117.5px,#00c6eb 125.5px,#00b3e8 127.5px,#005777 128.5px,#002c4d 132.5px,#000612 140.5px,#000001 148.5px)"></i><i style="left:59px;background:linear-gradient(#000 0.5px,#000001 87.5px,#00cfc7 88.5px,#02de74 90.5px,#45e416 92.5px,#e3ec00 95.5px,#ffb10a 99.5px,#ffb80a 103.5px,#deec01 106.5px,#4ee413 109.5px,#1fe14b 112.5px,#01de77 118.5px,#00c0ea 127.5px,#00b6e9 128.5px,#005c7b 129.5px,#002e50 133.5px,#000613 141.5px,#000002 148.5px)"></i><i style="left:60px;background:linear-gradient(#000 0.5px,#000 86.5px,#00cfc7 87.5px,#02de75 89.5px,#45e416 91.5px,#e5eb00 94.5px,#ffb60a 97.5px,#ffa40a 99.5px,#ffb40a 102.5px,#e5ea00 105.5px,#56e512 108.5px,#22e148 111.5px,#00dd7d 118.5px,#00c3ea 126.5px,#00b9e9 127.5px,#005f7e 128.5px,#002748 133.5px,#000714 140.5px,#000001 148.5px)"></i><i style="left:61px;background:linear-gradient(#000 0.5px,#000 87.5px,#00ccd7 88.5px,#00db89 90.5px,#59e512 93.5px,#e5eb00 96.5px,#fcbe09 100.5px,#e5ea00 105.5px,#5ae511 108.5px,#15e05b 112.5px,#00d990 119.5px,#00c1ea 126.5px,#00b7e9 127.5px,#005d7c 128.5px,#00294a 133.5px,#000816 140.5px,#000002 148.5px)"></i><i style="left:62px;background:linear-gradient(#000 0.5px,#000 86.5px,#00cdcf 87.5px,#00dc80 89.5px,#3ee320 91.5px,#74e60e 92.5px,#dfec01 94.5px,#ffb60a 97.5px,#ffa30a 100.5px,#e9e202 105.5px,#60e511 108.5px,#24e145 111.5px,#00de78 118.5px,#00c6eb 126.5px,#00b2e8 128.5px,#005676 129.5px,#002a4b 133.5px,#000715 140.5px,#000001 148.5px)"></i><i style="left:63px;background:linear-gradient(#000 0.5px,#000 86.5px,#00ccd4 87.5px,#00dc85 89.5px,#5fe511 92.5px,#e6e801 95.5px,#febb0a 99.5px,#e6e801 104.5px,#5ce511 107.5px,#16e059 111.5px,#00dc84 117.5px,#00c2ea 125.5px,#00b8e9 126.5px,#005e7d 127.5px,#00294b 132.5px,#000612 140.5px,#000001 148.5px)"></i><i style="left:64px;background:linear-gradient(#000 0.5px,#000 86.5px,#000612 87.5px,#00d0bf 88.5px,#00d899 89.5px,#09df6c 90.5px,#50e513 92.5px,#e6e901 95.5px,#ffb90a 98.5px,#ffa70a 100.5px,#ebde03 105.5px,#d2eb02 106.5px,#46e414 109.5px,#1ee14d 112.5px,#00de79 118.5px,#00c8eb 126.5px,#00b4e8 128.5px,#005978 129.5px,#002c4e 133.5px,#000817 140.5px,#000002 148.5px)"></i><i style="left:65px;background:linear-gradient(#000 0.5px,#000 86.5px,#00cdd3 87.5px,#00dc84 89.5px,#3be324 91.5px,#6ee60f 92.5px,#d9eb01 94.5px,#ffb10a 98.5px,#ffb40a 102.5px,#e8e401 105.5px,#5de511 108.5px,#22e147 111.5px,#00de7a 118.5px,#00c5eb 126.5px,#00b1e8 128.5px,#005475 129.5px,#00294a 133.5px,#000715 140.5px,#000001 148.5px)"></i><i style="left:66px;background:linear-gradient(#000 0.5px,#000 86.5px,#00030b 87.5px,#00cfc9 88.5px,#01de76 90.5px,#42e419 92.5px,#d5eb02 95.5px,#ffb40a 100.5px,#e7e701 105.5px,#5ae512 108.5px,#18e056 112.5px,#00dc82 118.5px,#00c3ea 126.5px,#00b9e9 127.5px,#005f7e 128.5px,#00294b 133.5px,#000816 140.5px,#000001 148.5px)"></i><i style="left:67px;background:linear-gradient(#000 0.5px,#000 86.5px,#00b2e8 87.5px,#00d896 89.5px,#4de413 92.5px,#dfec01 95.5px,#febb0a 100.5px,#d6eb02 105.5px,#45e415 108.5px,#19e054 111.5px,#00db89 118.5px,#00c6eb 125.5px,#00b2e8 127.5px,#005777 128.5px,#002d4f 132.5px,#000614 140.5px,#000001 148.5px)"></i><i style="left:68px;background:linear-gradient(#000 0.5px,#000 87.5px,#00ccd7 88.5px,#00db89 90.5px,#59e512 93.5px,#e4eb00 96.5px,#fcbf09 100.5px,#e4ec00 105.5px,#56e512 108.5px,#14e05c 112.5px,#00db88 118.5px,#00c0ea 126.5px,#00b6e9 127.5px,#005c7b 128.5px,#003153 132.5px,#000816 140.5px,#000002 148.5px)"></i><i style="left:69px;background:linear-gradient(#000 0.5px,#000 86.5px,#00ccd6 87.5px,#00db88 89.5px,#5fe511 92.5px,#e7e701 95.5px,#ffb80a 99.5px,#e9e302 104.5px,#d0eb03 105.5px,#44e418 108.5px,#19e055 111.5px,#00db8a 118.5px,#00c5eb 125.5px,#00b2e8 127.5px,#005676 128.5px,#002b4d 132.5px,#000613 140.5px,#000001 148.5px)"></i><i style="left:70px;background:linear-gradient(#000 0.5px,#000001 87.5px,#00cbda 88.5px,#00da8b 90.5px,#51e513 93.5px,#dbec01 96.5px,#f8c608 100.5px,#e9e202 104.5px,#d5eb02 105.5px,#47e414 108.5px,#0fdf63 112.5px,#00da8f 118.5px,#00c5eb 125.5px,#00b2e8 127.5px,#005676 128.5px,#002e50 132.5px,#000715 140.5px,#000001 148.5px)"></i><i style="left:71px;background:linear-gradient(#000 0.5px,#000001 87.5px,#00cecc 88.5px,#00dd7b 90.5px,#3fe31d 92.5px,#d5eb02 95.5px,#f6cb07 97.5px,#ffb10a 100.5px,#e9e202 105.5px,#44e417 109.5px,#1ae052 112.5px,#00dd7e 118.5px,#00c6eb 126.5px,#00b2e8 128.5px,#005676 129.5px,#002b4d 133.5px,#000817 140.5px,#000002 148.5px)"></i><i style="left:72px;background:linear-gradient(#000 0.5px,#000 87.5px,#00cece 88.5px,#00dd7d 90.5px,#3ee31f 92.5px,#d4eb02 95.5px,#f5cb06 97.5px,#ffb10a 100.5px,#eae002 105.5px,#d3eb02 106.5px,#45e415 109.5px,#1be051 112.5px,#00db87 119.5px,#00c7eb 126.5px,#00b3e8 128.5px,#005877 129.5px,#002c4e 133.5px,#000613 141.5px,#000002 148.5px)"></i><i style="left:73px;background:linear-gradient(#000 0.5px,#000001 87.5px,#00cecc 88.5px,#00de7a 90.5px,#40e31d 92.5px,#d5eb02 95.5px,#ffb10a 100.5px,#eae102 105.5px,#44e417 109.5px,#1be052 112.5px,#00dd7d 118.5px,#00c6eb 126.5px,#00b2e8 128.5px,#005777 129.5px,#002c4d 133.5px,#000817 140.5px,#000002 148.5px)"></i><i style="left:74px;background:linear-gradient(#000 0.5px,#000001 87.5px,#00ccd5 88.5px,#00db86 90.5px,#5ce511 93.5px,#e5ea00 96.5px,#fcbe09 100.5px,#e4ec00 105.5px,#56e512 108.5px,#14e05c 112.5px,#00db87 118.5px,#00c0ea 126.5px,#00b6e9 127.5px,#005c7b 128.5px,#003153 132.5px,#000716 140.5px,#000002 148.5px)"></i><i style="left:75px;background:linear-gradient(#000 0.5px,#000 86.5px,#005b7a 87.5px,#00d1be 88.5px,#00d898 89.5px,#4ae414 92.5px,#dbec01 95.5px,#fdbc09 100.5px,#e9e202 104.5px,#d4eb02 105.5px,#44e417 108.5px,#18e055 111.5px,#00db8a 118.5px,#00c5eb 125.5px,#00b2e8 127.5px,#005676 128.5px,#002c4e 132.5px,#000613 140.5px,#000001 148.5px)"></i><i style="left:76px;background:linear-gradient(#000 0.5px,#000 86.5px,#002c4e 87.5px,#00d4ae 88.5px,#00db86 89.5px,#38e328 91.5px,#6ee60f 92.5px,#dbec01 94.5px,#ffb20a 97.5px,#ff9b0a 100.5px,#efd804 105.5px,#dbec01 106.5px,#50e513 109.5px,#2be23a 111.5px,#00dd7f 119.5px,#00c2ea 127.5px,#00b8e9 128.5px,#005d7c 129.5px,#002e50 133.5px,#000613 141.5px,#000001 148.5px)"></i><i style="left:77px;background:linear-gradient(#000 0.5px,#000 86.5px,#00cdcf 87.5px,#00dd80 89.5px,#3de321 91.5px,#6de60f 92.5px,#d5eb02 94.5px,#ffb70a 98.5px,#febc0a 102.5px,#dfec01 105.5px,#4de413 108.5px,#1ee14e 111.5px,#00dc83 118.5px,#00c0ea 126.5px,#00b6e9 127.5px,#005b7a 128.5px,#002e50 132.5px,#000614 140.5px,#000001 148.5px)"></i><i style="left:78px;background:linear-gradient(#000 0.5px,#000 87.5px,#00ccd8 88.5px,#00da8b 90.5px,#5ae511 93.5px,#e5e901 96.5px,#febb0a 100.5px,#e8e501 105.5px,#42e41a 109.5px,#17e057 112.5px,#00da8c 119.5px,#00c4ea 126.5px,#00bae9 127.5px,#00617f 128.5px,#002b4d 133.5px,#000818 140.5px,#000002 148.5px)"></i><i style="left:79px;background:linear-gradient(#000 0.5px,#000 87.5px,#00cfc5 88.5px,#02de75 90.5px,#44e416 92.5px,#e5ea00 95.5px,#ffb50a 98.5px,#ffa40a 101.5px,#e7e601 106.5px,#5de511 109.5px,#25e144 112.5px,#00de78 119.5px,#00c6eb 127.5px,#00b2e8 129.5px,#005676 130.5px,#003255 133.5px,#000715 141.5px,#000002 148.5px)"></i><i style="left:80px;background:linear-gradient(#000 0.5px,#000 85.5px,#00040d 86.5px,#00d1bb 87.5px,#00d896 88.5px,#46e414 91.5px,#d9eb01 94.5px,#ffb40a 99.5px,#e8e501 104.5px,#45e416 108.5px,#1ee14d 111.5px,#00de78 117.5px,#00c1ea 126.5px,#00b7e9 127.5px,#005c7b 128.5px,#002e50 132.5px,#000613 140.5px,#000001 148.5px)"></i><i style="left:81px;background:linear-gradient(#000 0.5px,#000106 86.5px,#00cfc8 87.5px,#00dc83 89.5px,#45e415 92.5px,#deec01 96.5px,#eddb03 99.5px,#d6eb02 103.5px,#42e41a 107.5px,#10df61 111.5px,#00da8b 117.5px,#00c1ea 125.5px,#00b8e9 126.5px,#005e7d 127.5px,#00284a 132.5px,#000511 140.5px,#000001 148.5px)"></i><i style="left:82px;background:linear-gradient(#000 0.5px,#000 80.5px,#000107 82.5px,#00b2e8 83.5px,#00de78 84.5px,#00d895 88.5px,#0bdf68 90.5px,#3fe31d 92.5px,#d0eb03 96.5px,#f1d405 100.5px,#e2ec00 104.5px,#50e413 108.5px,#1be051 112.5px,#00de79 118.5px,#00c3ea 127.5px,#00b8e9 128.5px,#005d7c 129.5px,#002d4f 133.5px,#000817 140.5px,#000001 148.5px)"></i><i style="left:83px;background:linear-gradient(#000 0.5px,#000 76.5px,#00395b 77.5px,#00da8f 78.5px,#06df6f 79.5px,#00d895 80.5px,#00db86 88.5px,#49e414 92.5px,#bfea05 96.5px,#ddec01 99.5px,#c7eb04 102.5px,#54e512 106.5px,#1de04f 110.5px,#00dd7f 117.5px,#00c3ea 126.5px,#00b9e9 127.5px,#005e7d 128.5px,#002446 133.5px,#000612 140.5px,#000001 148.5px)"></i><i style="left:84px;background:linear-gradient(#000 0.5px,#000 72.5px,#00c8eb 73.5px,#07df6f 74.5px,#00d895 76.5px,#00d895 86.5px,#05de71 88.5px,#53e512 92.5px,#b7ea06 96.5px,#d0eb03 99.5px,#bbea05 102.5px,#57e512 106.5px,#24e145 110.5px,#03de73 117.5px,#00c3ea 127.5px,#00b8e9 128.5px,#005c7b 129.5px,#002a4b 133.5px,#000613 140.5px,#000001 148.5px)"></i><i style="left:85px;background:linear-gradient(#000 0.5px,#000 69.5px,#00c8e8 70.5px,#07df6e 71.5px,#00d993 72.5px,#00d895 80.5px,#11df60 81.5px,#28e13f 90.5px,#4fe413 92.5px,#8fe80b 99.5px,#7ee70d 102.5px,#46e414 105.5px,#14e05c 111.5px,#00dd7d 117.5px,#00bfea 127.5px,#00b4e8 128.5px,#005777 129.5px,#002748 133.5px,#000612 140.5px,#000001 148.5px)"></i><i style="left:86px;background:linear-gradient(#000 0.5px,#000 67.5px,#004163 68.5px,#00db89 69.5px,#04de72 70.5px,#00d895 71.5px,#00da8d 80.5px,#32e231 81.5px,#62e510 82.5px,#51e513 83.5px,#1ee14d 84.5px,#1be051 85.5px,#26e142 89.5px,#4be413 92.5px,#8ae70b 97.5px,#94e80a 100.5px,#7de70d 103.5px,#41e41c 107.5px,#26e141 111.5px,#09df6b 118.5px,#00c8ea 128.5px,#00bce9 129.5px,#00607e 130.5px,#00294a 134.5px,#000716 140.5px,#000001 148.5px)"></i><i style="left:87px;background:linear-gradient(#000 0.5px,#000 67.5px,#00bfea 68.5px,#04de72 69.5px,#00d895 71.5px,#00d895 74.5px,#5be511 75.5px,#d1eb02 76.5px,#81e70c 77.5px,#00dc85 78.5px,#00d895 86.5px,#2de238 92.5px,#42e41a 100.5px,#01de77 115.5px,#00c1ea 127.5px,#00b5e8 128.5px,#005777 129.5px,#002748 133.5px,#000511 140.5px,#000001 148.5px)"></i><i style="left:88px;background:linear-gradient(#000 0.5px,#000 68.5px,#00617f 69.5px,#00de78 70.5px,#00d895 72.5px,#61e511 73.5px,#a3e908 74.5px,#00d895 75.5px,#00d895 80.5px,#10df61 81.5px,#3be324 100.5px,#00dd7b 117.5px,#00c7eb 127.5px,#00bbe9 128.5px,#005f7d 129.5px,#00294b 133.5px,#000612 140.5px,#000001 148.5px)"></i><i style="left:89px;background:linear-gradient(#000 0.5px,#000001 71.5px,#00d895 72.5px,#33e22f 74.5px,#cbeb03 75.5px,#a2e908 76.5px,#07df6f 77.5px,#00d895 78.5px,#00d895 82.5px,#31e232 92.5px,#36e32b 100.5px,#01de76 117.5px,#00c0ea 128.5px,#00b3e8 129.5px,#005373 130.5px,#002c4d 133.5px,#000612 140.5px,#000001 148.5px)"></i><i style="left:90px;background:linear-gradient(#000 0.5px,#000 74.5px,#002f51 75.5px,#00d895 76.5px,#09df6c 77.5px,#00d895 78.5px,#1ae053 79.5px,#5ae512 80.5px,#70e60f 81.5px,#34e22d 82.5px,#00dd7f 83.5px,#32e231 92.5px,#34e22e 100.5px,#02de74 117.5px,#00c1ea 128.5px,#00b4e8 129.5px,#005475 130.5px,#002c4e 133.5px,#000612 140.5px,#000001 148.5px)"></i><i style="left:91px;background:linear-gradient(#000 0.5px,#000 72.5px,#00cbdd 73.5px,#00cbdd 74.5px,#10df61 77.5px,#23e146 79.5px,#08df6d 83.5px,#2ce23a 88.5px,#5ce511 90.5px,#40e31d 92.5px,#42e419 100.5px,#0fdf63 117.5px,#00bfea 129.5px,#00b2e8 130.5px,#005172 131.5px,#00294b 134.5px,#000715 140.5px,#000001 148.5px)"></i><i style="left:92px;background:linear-gradient(#000 0.5px,#000 65.5px,#00d79b 66.5px,#00d4ac 67.5px,#12e05e 69.5px,#23e146 71.5px,#0cdf67 73.5px,#00c1ea 76.5px,#003e60 77.5px,#000e25 79.5px,#000e25 80.5px,#00d5a7 81.5px,#26e141 92.5px,#29e13e 100.5px,#00dd7d 116.5px,#00c3ea 127.5px,#00b8e9 128.5px,#005a79 129.5px,#002748 133.5px,#000510 140.5px,#000001 148.5px)"></i><i style="left:93px;background:linear-gradient(#000 0.5px,#000 59.5px,#00d79f 60.5px,#3ae325 61.5px,#f8610a 62.5px,#f75c0a 63.5px,#41e41b 64.5px,#17e057 65.5px,#01de76 67.5px,#00cbdd 69.5px,#00cbdb 70.5px,#08df6d 72.5px,#23e146 74.5px,#09df6b 76.5px,#00ccd7 78.5px,#004f70 79.5px,#001f40 80.5px,#34e22e 81.5px,#59e512 91.5px,#3ee320 105.5px,#00dd7d 114.5px,#00c9e8 125.5px,#00b6e9 127.5px,#005a79 128.5px,#035 131.5px,#000613 139.5px,#000001 148.5px)"></i><i style="left:94px;background:linear-gradient(#000 0.5px,#000 53.5px,#00dc84 54.5px,#12e05e 55.5px,#22e148 57.5px,#12e05e 60.5px,#00d79f 62.5px,#2ee236 63.5px,#3de320 64.5px,#20e14a 65.5px,#0fdf63 67.5px,#00cadf 69.5px,#003d5f 70.5px,#00122e 71.5px,#000e25 72.5px,#000e25 80.5px,#00d79e 81.5px,#2de237 92.5px,#30e234 100.5px,#00de7a 117.5px,#00bdea 128.5px,#00b1e8 129.5px,#005171 130.5px,#002a4c 133.5px,#000611 140.5px,#000001 148.5px)"></i><i style="left:95px;background:linear-gradient(#000 0.5px,#000 47.5px,#00cbdd 48.5px,#10df62 49.5px,#22e148 51.5px,#16e058 54.5px,#00d6a1 57.5px,#11df60 58.5px,#23e146 59.5px,#19e055 60.5px,#00db8a 61.5px,#00cae0 62.5px,#003052 63.5px,#002242 64.5px,#00c0ea 65.5px,#14e05b 67.5px,#23e146 68.5px,#14e05b 69.5px,#00c0ea 71.5px,#002242 72.5px,#000e25 73.5px,#000e25 80.5px,#00d6a2 81.5px,#2ae23c 92.5px,#2de238 100.5px,#01de77 116.5px,#00c7eb 127.5px,#00bbe9 128.5px,#005e7d 129.5px,#00294a 133.5px,#000511 140.5px,#000001 148.5px)"></i><i style="left:96px;background:linear-gradient(#000 0.5px,#000 42.5px,#00da8d 43.5px,#12e05e 44.5px,#22e148 45.5px,#17e057 48.5px,#0bdf68 49.5px,#00cdd3 51.5px,#004d6e 52.5px,#00d5a9 53.5px,#1ce050 54.5px,#2fe235 55.5px,#12e05e 56.5px,#00d0c3 57.5px,#002f51 58.5px,#000e25 59.5px,#000e25 69.5px,#001d3d 70.5px,#005474 71.5px,#00ceca 72.5px,#14e05c 74.5px,#1fe14c 76.5px,#0adf69 77.5px,#00c9e5 79.5px,#003a5d 80.5px,#00d6a4 81.5px,#29e13e 92.5px,#2be23a 100.5px,#00de79 116.5px,#00c5eb 127.5px,#00bae9 128.5px,#005c7b 129.5px,#002849 133.5px,#000511 140.5px,#000001 148.5px)"></i><i style="left:97px;background:linear-gradient(#000 0.5px,#000 37.5px,#00d0c1 38.5px,#1be051 40.5px,#23e146 41.5px,#0adf69 44.5px,#00cbdd 46.5px,#003f61 47.5px,#00132e 48.5px,#000e25 49.5px,#003456 50.5px,#21e149 51.5px,#f6cb07 52.5px,#ffa00a 53.5px,#a8e908 54.5px,#00d1bc 55.5px,#00cfc4 80.5px,#01de76 81.5px,#32e230 87.5px,#5ae511 93.5px,#57e512 101.5px,#19e054 117.5px,#00de78 121.5px,#00bbe9 130.5px,#005c7c 131.5px,#003c5e 133.5px,#000817 140.5px,#000001 148.5px)"></i><i style="left:98px;background:linear-gradient(#000 0.5px,#000 34.5px,#00d898 35.5px,#14e05c 36.5px,#24e145 37.5px,#13e05d 40.5px,#00cfc4 42.5px,#005374 43.5px,#001938 44.5px,#000e25 49.5px,#003456 50.5px,#21e149 51.5px,#f6cb07 52.5px,#ffa00a 53.5px,#a8e908 54.5px,#00d1bc 55.5px,#00cfc4 80.5px,#00db8a 81.5px,#24e145 87.5px,#3fe31d 93.5px,#3fe31d 100.5px,#0cdf67 117.5px,#00bdea 129.5px,#00607e 130.5px,#035 133.5px,#000714 140.5px,#000001 148.5px)"></i><i style="left:99px;background:linear-gradient(#000 0.5px,#000 31.5px,#00d6a3 32.5px,#18e056 33.5px,#2de238 34.5px,#05de70 37.5px,#00b6e9 39.5px,#002041 40.5px,#000e25 41.5px,#000e25 51.5px,#046 52.5px,#00d5a9 53.5px,#1ce050 54.5px,#2fe235 55.5px,#12e05e 56.5px,#00d0c3 57.5px,#002f51 58.5px,#000e25 59.5px,#000e25 80.5px,#00d898 81.5px,#32e231 92.5px,#34e22d 100.5px,#03de74 117.5px,#00c1ea 128.5px,#00b4e8 129.5px,#005575 130.5px,#002d4e 133.5px,#000612 140.5px,#000001 148.5px)"></i><i style="left:100px;background:linear-gradient(#000 0.5px,#000 28.5px,#00cbdd 29.5px,#04de72 30.5px,#42e41a 31.5px,#65e610 32.5px,#0adf6a 34.5px,#00b8e9 36.5px,#001f3f 37.5px,#000e25 38.5px,#000e25 54.5px,#002040 55.5px,#00bbe9 56.5px,#11df60 58.5px,#23e146 59.5px,#19e055 60.5px,#00db8a 61.5px,#00cae0 62.5px,#003052 63.5px,#000e25 64.5px,#000e25 72.5px,#003759 74.5px,#00b6e9 75.5px,#02de75 78.5px,#23e146 81.5px,#00dd7c 84.5px,#2be23b 92.5px,#2be23a 101.5px,#01de77 116.5px,#00c7eb 127.5px,#00bbe9 128.5px,#005e7d 129.5px,#00294a 133.5px,#000511 140.5px,#000001 148.5px)"></i><i style="left:101px;background:linear-gradient(#000 0.5px,#000 27.5px,#00da8b 28.5px,#96e80a 29.5px,#f8c508 30.5px,#f0d405 31.5px,#4ae414 32.5px,#00db86 33.5px,#00cbdb 34.5px,#003052 35.5px,#000e25 36.5px,#00112c 60.5px,#003a5c 61.5px,#00cae3 62.5px,#0ddf65 64.5px,#21e149 66.5px,#00d898 68.5px,#00d896 69.5px,#19e054 71.5px,#21e148 73.5px,#04de72 75.5px,#00b2e8 78.5px,#003153 79.5px,#001431 80.5px,#00d991 81.5px,#37e329 92.5px,#3ae326 100.5px,#07df6e 117.5px,#00c6eb 128.5px,#00b8e9 129.5px,#005a79 130.5px,#002546 134.5px,#000613 140.5px,#000001 148.5px)"></i><i style="left:102px;background:linear-gradient(#000 0.5px,#000 26.5px,#00cbdc 27.5px,#ade907 28.5px,#f6580a 29.5px,#f2440a 30.5px,#e9e302 31.5px,#00d79e 32.5px,#00d79e 61.5px,#11df5f 63.5px,#23e146 65.5px,#00d896 68.5px,#00d79e 71.5px,#08df6d 72.5px,#23e146 74.5px,#09df6b 76.5px,#00d79b 77.5px,#00d79e 80.5px,#37e329 92.5px,#3ae326 100.5px,#07df6d 117.5px,#00c6eb 128.5px,#00b8e9 129.5px,#005a7a 130.5px,#002546 134.5px,#000613 140.5px,#000001 148.5px)"></i><i style="left:103px;background:linear-gradient(#000 0.5px,#000 24.5px,#00cbdd 25.5px,#00cbdd 26.5px,#00db85 27.5px,#ade907 28.5px,#f6580a 29.5px,#f2440a 30.5px,#e9e302 31.5px,#00d79e 32.5px,#00d79e 36.5px,#16e059 38.5px,#14e05c 39.5px,#00d79e 41.5px,#00d79e 54.5px,#23e146 58.5px,#07df6e 60.5px,#00d79d 61.5px,#00d79e 81.5px,#2ce239 92.5px,#2ee236 100.5px,#02de75 116.5px,#00bce9 128.5px,#00607e 129.5px,#003457 132.5px,#000511 140.5px,#000001 148.5px)"></i><i style="left:104px;background:linear-gradient(#000 0.5px,#000 22.5px,#00cbdd 23.5px,#00cdd2 24.5px,#05de71 25.5px,#17e058 26.5px,#00da8b 27.5px,#00da8b 28.5px,#96e80a 29.5px,#f8c508 30.5px,#f0d405 31.5px,#4ae414 32.5px,#00dd7d 33.5px,#00cfc7 34.5px,#00486a 35.5px,#00122d 36.5px,#000e25 37.5px,#000e25 45.5px,#001e3e 46.5px,#005071 47.5px,#00cdd3 48.5px,#0ddf66 50.5px,#22e147 52.5px,#17e057 53.5px,#00beea 56.5px,#003153 57.5px,#00112a 58.5px,#000e25 59.5px,#000e25 80.5px,#00d898 81.5px,#32e230 92.5px,#35e32d 100.5px,#03de73 117.5px,#00c2ea 128.5px,#00b5e8 129.5px,#005575 130.5px,#002d4f 133.5px,#000612 140.5px,#000001 148.5px)"></i><i style="left:105px;background:linear-gradient(#000 0.5px,#000 21.5px,#00cbdd 22.5px,#17e058 24.5px,#00de78 25.5px,#15e05a 27.5px,#00da8e 28.5px,#00c0ea 29.5px,#04de72 30.5px,#42e41a 31.5px,#65e610 32.5px,#32e230 33.5px,#00d899 34.5px,#004668 35.5px,#000e25 36.5px,#000e25 40.5px,#001c3c 41.5px,#005172 42.5px,#00cecc 43.5px,#13e05c 45.5px,#1fe14c 47.5px,#0bdf69 48.5px,#00c9e5 50.5px,#003b5d 51.5px,#00122e 52.5px,#000e25 53.5px,#000e25 80.5px,#00d991 81.5px,#00dc84 82.5px,#37e329 92.5px,#38e328 101.5px,#07df6d 117.5px,#00c6eb 128.5px,#00b8e9 129.5px,#005a7a 130.5px,#002546 134.5px,#000613 140.5px,#000001 148.5px)"></i><i style="left:106px;background:linear-gradient(#000 0.5px,#000 21.5px,#00cbdd 22.5px,#07df6e 23.5px,#15e05a 24.5px,#00de77 25.5px,#00bae9 26.5px,#000e25 27.5px,#001430 30.5px,#005d7c 31.5px,#00d6a3 32.5px,#18e056 33.5px,#2de238 34.5px,#1ee14d 35.5px,#00beea 37.5px,#00b6e9 38.5px,#06de70 40.5px,#22e147 42.5px,#11df60 43.5px,#00cae2 45.5px,#003759 46.5px,#001430 47.5px,#001430 80.5px,#00d896 81.5px,#33e22e 92.5px,#34e22d 101.5px,#14e05b 112.5px,#00cece 113.5px,#00c6eb 115.5px,#00b5e8 117.5px,#00607f 118.5px,#00617f 121.5px,#00b4e8 122.5px,#00b5e8 127.5px,#00607f 128.5px,#001029 137.5px,#000001 148.5px)"></i><i style="left:107px;background:linear-gradient(#000 0.5px,#000 21.5px,#00de78 22.5px,#16e059 24.5px,#00db86 25.5px,#004365 26.5px,#000e25 27.5px,#000e25 32.5px,#002648 33.5px,#00c4ea 34.5px,#14e05c 36.5px,#24e145 37.5px,#10df61 39.5px,#00bfea 41.5px,#002445 42.5px,#73e60e 43.5px,#73e60e 84.5px,#9ae809 91.5px,#71e60f 105.5px,#24e145 112.5px,#00122c 113.5px,#000817 114.5px,#000209 120.5px,#003658 127.5px,#046 131.5px,#000818 139.5px,#000001 148.5px)"></i><i style="left:108px;background:linear-gradient(#000 0.5px,#000 21.5px,#00d1be 22.5px,#14e05b 23.5px,#13e05c 24.5px,#04de73 25.5px,#00bfea 26.5px,#000e25 27.5px,#000e25 30.5px,#003052 31.5px,#00ccd7 32.5px,#00de7a 33.5px,#23e146 34.5px,#27e140 35.5px,#0bdf68 36.5px,#00d1bc 37.5px,#00d0c1 38.5px,#00de7a 39.5px,#23e146 41.5px,#14e05b 42.5px,#00cbda 44.5px,#004e6f 45.5px,#004e6f 80.5px,#00d2b4 81.5px,#1ce050 92.5px,#1de04f 101.5px,#00de7a 112.5px,#005878 113.5px,#00284a 117.5px,#004364 128.5px,#000614 139.5px,#000001 148.5px)"></i><i style="left:109px;background:linear-gradient(#000 0.5px,#000 20.5px,#00cbdd 21.5px,#00cbdd 22.5px,#17e057 24.5px,#04de73 25.5px,#17e057 26.5px,#00dd7f 27.5px,#00c9e6 28.5px,#003f61 29.5px,#00d4aa 30.5px,#25e143 31.5px,#48e414 32.5px,#3ae325 33.5px,#04de72 34.5px,#00c5eb 35.5px,#001735 36.5px,#000e25 37.5px,#001837 40.5px,#004b6c 41.5px,#00cdd1 42.5px,#12e05e 44.5px,#22e148 45.5px,#0adf69 47.5px,#00c8e9 49.5px,#003759 50.5px,#00112a 51.5px,#000e25 80.5px,#00db85 81.5px,#43e418 93.5px,#42e41a 101.5px,#20e14a 112.5px,#01de76 117.5px,#00c9e8 128.5px,#00b1e8 130.5px,#005272 131.5px,#003557 133.5px,#000715 140.5px,#000001 148.5px)"></i><i style="left:110px;background:linear-gradient(#000 0.5px,#000 22.5px,#00cbdd 23.5px,#13e05d 25.5px,#0ddf65 26.5px,#00d1bb 27.5px,#00d0c0 28.5px,#43e418 29.5px,#e6e801 30.5px,#eae002 31.5px,#64e610 32.5px,#00d6a1 33.5px,#035 34.5px,#000e25 35.5px,#000e25 44.5px,#002040 45.5px,#005575 46.5px,#00cece 47.5px,#10df62 49.5px,#22e148 51.5px,#14e05c 52.5px,#00b2e8 55.5px,#002749 56.5px,#000e25 57.5px,#000e25 80.5px,#00d993 81.5px,#36e32c 92.5px,#38e328 100.5px,#06df70 117.5px,#00c4eb 128.5px,#00b7e9 129.5px,#005878 130.5px,#002546 134.5px,#000613 140.5px,#000001 148.5px)"></i><i style="left:111px;background:linear-gradient(#000 0.5px,#000 24.5px,#00cbdd 25.5px,#00d1b9 26.5px,#0bdf68 27.5px,#8ae70b 28.5px,#fb760a 29.5px,#f5520a 30.5px,#efd804 31.5px,#00dc83 32.5px,#00c5eb 33.5px,#10df62 36.5px,#17e057 37.5px,#0bdf69 38.5px,#00cbde 40.5px,#00c5eb 41.5px,#00c5eb 52.5px,#12e05e 55.5px,#22e148 57.5px,#00dd7b 59.5px,#00c5eb 61.5px,#00c5eb 80.5px,#0adf6a 81.5px,#3ce322 87.5px,#73e60e 93.5px,#73e60e 100.5px,#4be413 106.5px,#23e146 117.5px,#02de75 122.5px,#00c3ea 130.5px,#00b5e8 131.5px,#005474 132.5px,#00294b 135.5px,#000613 141.5px,#000001 148.5px)"></i><i style="left:112px;background:linear-gradient(#000 0.5px,#000 26.5px,#00cbdd 27.5px,#bdea05 28.5px,#f3450a 29.5px,#f13d0a 30.5px,#daeb01 31.5px,#10df61 32.5px,#10df61 61.5px,#22e147 63.5px,#10df61 66.5px,#10df61 74.5px,#23e146 76.5px,#10df61 78.5px,#10df61 85.5px,#2ce239 93.5px,#2ce239 100.5px,#00de78 116.5px,#00c6eb 127.5px,#00bae9 128.5px,#005d7c 129.5px,#00284a 133.5px,#000511 140.5px,#000001 148.5px)"></i><i style="left:113px;background:linear-gradient(#000 0.5px,#000 27.5px,#14e05b 28.5px,#e6e801 29.5px,#ffa30a 30.5px,#f4ce06 31.5px,#38e328 32.5px,#00d79c 33.5px,#00bce9 34.5px,#001d3d 35.5px,#000e25 36.5px,#000e25 61.5px,#002749 62.5px,#00b6e9 63.5px,#00de7a 65.5px,#19e054 66.5px,#1ce050 72.5px,#00da8b 74.5px,#00c1ea 76.5px,#003e60 77.5px,#000e25 79.5px,#000e25 80.5px,#00d79b 81.5px,#2fe234 92.5px,#32e231 100.5px,#01de77 117.5px,#00bfea 128.5px,#00b2e8 129.5px,#005373 130.5px,#002b4d 133.5px,#000612 140.5px,#000001 148.5px)"></i><i style="left:114px;background:linear-gradient(#000 0.5px,#000 28.5px,#00d0c1 29.5px,#28e13f 30.5px,#78e70e 31.5px,#76e60e 32.5px,#25e143 33.5px,#00de79 34.5px,#00d0c3 35.5px,#00496a 36.5px,#00112b 37.5px,#000e25 38.5px,#000e25 55.5px,#002344 56.5px,#00bdea 57.5px,#0fdf63 59.5px,#22e147 60.5px,#1ce050 61.5px,#00dd7d 62.5px,#00cecb 63.5px,#004365 64.5px,#00112b 65.5px,#000e25 66.5px,#00122d 71.5px,#005576 73.5px,#00cbde 74.5px,#10df61 77.5px,#23e146 79.5px,#00de7a 83.5px,#35e32c 92.5px,#36e32b 101.5px,#05de70 117.5px,#00c4ea 128.5px,#00b7e9 129.5px,#005878 130.5px,#002445 134.5px,#000613 140.5px,#000001 148.5px)"></i><i style="left:115px;background:linear-gradient(#000 0.5px,#000 30.5px,#00ccd7 31.5px,#04de72 32.5px,#2ae23b 33.5px,#2ee237 34.5px,#0ddf66 36.5px,#00c8eb 38.5px,#002d4e 39.5px,#000e25 40.5px,#000e25 51.5px,#001a38 52.5px,#00c2ea 53.5px,#00db87 54.5px,#21e149 55.5px,#24e144 56.5px,#00de79 57.5px,#00cae2 58.5px,#002142 59.5px,#000e25 60.5px,#000e25 80.5px,#00da8e 81.5px,#3ae325 92.5px,#3ce322 100.5px,#0adf6a 117.5px,#00c8eb 128.5px,#00bbe9 129.5px,#005d7c 130.5px,#002648 134.5px,#000614 140.5px,#000001 148.5px)"></i><i style="left:116px;background:linear-gradient(#000 0.5px,#000 33.5px,#00d2b9 34.5px,#08df6d 35.5px,#22e147 36.5px,#16e059 39.5px,#03de74 40.5px,#00b7e9 42.5px,#002344 43.5px,#000e25 44.5px,#000e25 49.5px,#001f3f 50.5px,#00da8f 51.5px,#9de809 52.5px,#f1d405 53.5px,#a6e908 54.5px,#00db86 55.5px,#005a7a 56.5px,#005a7a 80.5px,#00d79a 81.5px,#30e233 92.5px,#33e230 100.5px,#01de76 117.5px,#00c0ea 128.5px,#00b3e8 129.5px,#005374 130.5px,#002c4e 133.5px,#000612 140.5px,#000001 148.5px)"></i><i style="left:117px;background:linear-gradient(#000 0.5px,#000 37.5px,#00db89 38.5px,#17e057 39.5px,#23e146 40.5px,#10df61 43.5px,#00cec9 45.5px,#005172 46.5px,#001a39 47.5px,#000e25 49.5px,#003d5f 50.5px,#41e41a 51.5px,#ff8d0a 52.5px,#fb760a 53.5px,#8ce80b 54.5px,#00db8a 55.5px,#00db8a 80.5px,#10df61 81.5px,#2de238 100.5px,#01de77 116.5px,#00c7eb 127.5px,#00bbe9 128.5px,#005e7d 129.5px,#00294a 133.5px,#000511 140.5px,#000001 148.5px)"></i><i style="left:118px;background:linear-gradient(#000 0.5px,#000 41.5px,#00d992 42.5px,#22e148 44.5px,#15e059 47.5px,#04de72 48.5px,#00c8ea 50.5px,#003759 51.5px,#00cbdd 52.5px,#10df62 53.5px,#3ae325 54.5px,#2fe235 55.5px,#00da8e 56.5px,#005273 57.5px,#000e25 58.5px,#000f26 71.5px,#002e50 72.5px,#00bce9 73.5px,#00de79 75.5px,#23e146 77.5px,#08df6d 79.5px,#00d6a2 80.5px,#33e22f 92.5px,#34e22d 101.5px,#04de72 117.5px,#00c2ea 128.5px,#00b5e8 129.5px,#005676 130.5px,#002d4f 133.5px,#000612 140.5px,#000001 148.5px)"></i><i style="left:119px;background:linear-gradient(#000 0.5px,#000 46.5px,#00cbdd 47.5px,#12e05f 48.5px,#21e149 49.5px,#16e059 53.5px,#00d79e 55.5px,#00d5a7 56.5px,#10df61 57.5px,#23e146 58.5px,#17e057 59.5px,#00c6eb 61.5px,#002546 62.5px,#000e25 63.5px,#002344 65.5px,#00bdea 66.5px,#10df62 68.5px,#22e147 69.5px,#1be052 70.5px,#00dc80 71.5px,#00cdd1 72.5px,#003e60 73.5px,#000f26 74.5px,#000e25 75.5px,#000e25 80.5px,#00d899 81.5px,#31e231 92.5px,#34e22e 100.5px,#02de75 117.5px,#00c1ea 128.5px,#00b4e8 129.5px,#005475 130.5px,#002c4e 133.5px,#000612 140.5px,#000001 148.5px)"></i><i style="left:120px;background:linear-gradient(#000 0.5px,#000 52.5px,#00de79 53.5px,#22e147 55.5px,#17e057 58.5px,#00dd7f 60.5px,#00d3b3 61.5px,#2ae23d 64.5px,#21e148 65.5px,#00de7a 66.5px,#00d1be 67.5px,#005b7a 68.5px,#001e3e 69.5px,#000e25 70.5px,#000e25 80.5px,#00dd7f 81.5px,#45e415 92.5px,#47e414 101.5px,#13e05c 117.5px,#00c4ea 129.5px,#00b6e9 130.5px,#005676 131.5px,#002c4e 134.5px,#000716 140.5px,#000001 148.5px)"></i><i style="left:121px;background:linear-gradient(#000 0.5px,#000 57.5px,#00d0c3 58.5px,#00da8d 59.5px,#3ae325 61.5px,#f8610a 62.5px,#f75c0a 63.5px,#41e41b 64.5px,#10df62 65.5px,#00dd7f 66.5px,#00c7eb 68.5px,#02de75 70.5px,#19e054 71.5px,#1ee14d 73.5px,#0bdf69 74.5px,#00ccd7 76.5px,#004e6f 77.5px,#001e3d 78.5px,#000e25 79.5px,#000e25 80.5px,#4de413 81.5px,#8de80b 91.5px,#65e610 105.5px,#48e414 107.5px,#00de7a 116.5px,#00bdea 127.5px,#00b2e8 128.5px,#005373 129.5px,#002445 133.5px,#00050f 140.5px,#000001 148.5px)"></i><i style="left:122px;background:linear-gradient(#000 0.5px,#000 63.5px,#3de320 64.5px,#0edf64 65.5px,#00d993 66.5px,#1be052 68.5px,#20e14a 70.5px,#01de77 72.5px,#00cbda 74.5px,#005172 75.5px,#002a4c 76.5px,#005c7b 77.5px,#00cdd2 78.5px,#00d79c 79.5px,#22e147 82.5px,#05de70 85.5px,#2be23b 92.5px,#2de237 100.5px,#01de76 116.5px,#00c7eb 127.5px,#00bbe9 128.5px,#005f7d 129.5px,#00294b 133.5px,#000511 140.5px,#000001 148.5px)"></i><i style="left:123px;background:linear-gradient(#000 0.5px,#000 71.5px,#00cbdd 72.5px,#0adf6a 75.5px,#22e147 77.5px,#00db86 81.5px,#3be324 91.5px,#5fe511 93.5px,#43e419 94.5px,#43e419 100.5px,#0fdf63 117.5px,#00c0ea 129.5px,#00b2e8 130.5px,#005172 131.5px,#00294b 134.5px,#000715 140.5px,#000001 148.5px)"></i><i style="left:124px;background:linear-gradient(#000 0.5px,#000 75.5px,#00375a 76.5px,#00d991 77.5px,#07df6f 78.5px,#00d895 79.5px,#00da8d 80.5px,#32e231 81.5px,#62e510 82.5px,#51e513 83.5px,#1ee14d 84.5px,#16e059 85.5px,#3be324 93.5px,#3be324 100.5px,#08df6c 117.5px,#00c7eb 128.5px,#00b9e9 129.5px,#005b7a 130.5px,#002647 134.5px,#000613 140.5px,#000001 148.5px)"></i><i style="left:125px;background:linear-gradient(#000 0.5px,#000 71.5px,#00496b 72.5px,#00dc84 73.5px,#02de75 74.5px,#5be511 75.5px,#d1eb02 76.5px,#81e70c 77.5px,#00dc85 78.5px,#00d993 81.5px,#3ce323 92.5px,#40e31c 100.5px,#0bdf69 117.5px,#00c8ea 128.5px,#00bbe9 129.5px,#005e7d 130.5px,#002748 134.5px,#000714 140.5px,#000001 148.5px)"></i><i style="left:126px;background:linear-gradient(#000 0.5px,#000 69.5px,#00d895 70.5px,#0adf69 71.5px,#00d895 72.5px,#61e511 73.5px,#a3e908 74.5px,#00d895 75.5px,#00d895 80.5px,#24e145 81.5px,#3ce322 90.5px,#37e32a 100.5px,#00dd7e 117.5px,#00c5eb 127.5px,#00bae9 128.5px,#005d7c 129.5px,#00284a 133.5px,#000511 140.5px,#000001 148.5px)"></i><i style="left:127px;background:linear-gradient(#000 0.5px,#000 67.5px,#005e7d 68.5px,#00de79 69.5px,#00d895 73.5px,#33e22f 74.5px,#cbeb03 75.5px,#a2e908 76.5px,#07df6f 77.5px,#00d895 78.5px,#00d895 86.5px,#17e057 88.5px,#39e326 92.5px,#49e414 102.5px,#05de70 117.5px,#00c2ea 128.5px,#00b5e8 129.5px,#005676 130.5px,#002e50 133.5px,#000613 140.5px,#000001 148.5px)"></i><i style="left:128px;background:linear-gradient(#000 0.5px,#000 67.5px,#005e7d 68.5px,#00de79 69.5px,#00d895 71.5px,#00d895 78.5px,#1ae053 79.5px,#5ae512 80.5px,#70e60f 81.5px,#34e22d 82.5px,#00d993 83.5px,#00d895 84.5px,#00d895 87.5px,#08df6d 88.5px,#46e414 95.5px,#69e610 100.5px,#4ae413 104.5px,#01de76 117.5px,#00c8eb 127.5px,#00bde9 128.5px,#00617f 129.5px,#002c4e 133.5px,#000613 140.5px,#000001 148.5px)"></i><i style="left:129px;background:linear-gradient(#000 0.5px,#000 69.5px,#00d895 70.5px,#0adf69 71.5px,#00d895 72.5px,#00d895 80.5px,#39e327 81.5px,#61e511 93.5px,#a4e908 97.5px,#b5ea06 100.5px,#9ee809 103.5px,#4ee413 107.5px,#29e23e 111.5px,#03de74 119.5px,#00c8eb 128.5px,#00bce9 129.5px,#005f7e 130.5px,#00294b 134.5px,#000511 141.5px,#000001 148.5px)"></i><i style="left:130px;background:linear-gradient(#000 0.5px,#000 71.5px,#00496b 72.5px,#00dc84 73.5px,#02de75 74.5px,#00d895 75.5px,#00d895 87.5px,#00dc81 88.5px,#55e512 93.5px,#ade907 97.5px,#c0ea05 100.5px,#a2e908 103.5px,#59e512 106.5px,#1ae053 111.5px,#00dd80 118.5px,#00c2ea 127.5px,#00b7e9 128.5px,#005a7a 129.5px,#002a4b 133.5px,#000613 140.5px,#000001 148.5px)"></i><i style="left:131px;background:linear-gradient(#000 0.5px,#000 75.5px,#00375a 76.5px,#00d991 77.5px,#07df6f 78.5px,#00d895 79.5px,#00db89 88.5px,#44e417 92.5px,#dbec01 97.5px,#e4eb00 103.5px,#55e512 108.5px,#23e146 112.5px,#01de77 119.5px,#00c3ea 128.5px,#00b7e9 129.5px,#005b7a 130.5px,#00294b 134.5px,#000613 141.5px,#000002 148.5px)"></i><i style="left:132px;background:linear-gradient(#000 0.5px,#000207 81.5px,#00d895 82.5px,#0adf6a 83.5px,#00d895 84.5px,#00d895 88.5px,#00dd7d 89.5px,#41e41a 92.5px,#c2ea04 96.5px,#deec01 98.5px,#d4eb02 102.5px,#3ee31f 107.5px,#11df60 111.5px,#00d991 118.5px,#00c6eb 125.5px,#00b2e8 127.5px,#005676 128.5px,#002a4c 132.5px,#000511 140.5px,#000001 148.5px)"></i><i style="left:133px;background:linear-gradient(#000 0.5px,#000003 86.5px,#00cbdc 87.5px,#00db89 89.5px,#44e417 92.5px,#dcec01 96.5px,#efd704 100.5px,#e5ea00 103.5px,#54e512 107.5px,#16e059 111.5px,#00db8a 118.5px,#00c8ea 125.5px,#00b5e8 127.5px,#005a79 128.5px,#002d4f 132.5px,#000613 140.5px,#000001 148.5px)"></i><i style="left:134px;background:linear-gradient(#000 0.5px,#000 86.5px,#001634 87.5px,#00d0c1 88.5px,#00d79e 89.5px,#04de73 90.5px,#3ee320 92.5px,#63e510 93.5px,#e1ec00 96.5px,#f6ca07 100.5px,#e5eb00 104.5px,#42e419 108.5px,#19e054 111.5px,#00da8b 118.5px,#00c8eb 125.5px,#00b4e8 127.5px,#005979 128.5px,#002e50 132.5px,#000714 140.5px,#000001 148.5px)"></i><i style="left:135px;background:linear-gradient(#000 0.5px,#000 86.5px,#00cec9 87.5px,#00dd7b 89.5px,#40e31d 91.5px,#ddec01 94.5px,#ffb10a 98.5px,#ffb50a 102.5px,#e7e701 105.5px,#5be511 108.5px,#23e146 111.5px,#00de79 118.5px,#00c6eb 126.5px,#00b2e8 128.5px,#005575 129.5px,#00294b 133.5px,#000715 140.5px,#000001 148.5px)"></i><i style="left:136px;background:linear-gradient(#000 0.5px,#000 86.5px,#00d0c1 87.5px,#00d89a 88.5px,#06df6f 89.5px,#4ee413 91.5px,#e8e501 94.5px,#ffaf0a 97.5px,#ff9d0a 99.5px,#ffad0a 102.5px,#e7e501 105.5px,#5ee511 108.5px,#25e143 111.5px,#00de79 118.5px,#00c6eb 126.5px,#00b1e8 128.5px,#005575 129.5px,#00294a 133.5px,#000715 140.5px,#000001 148.5px)"></i><i style="left:137px;background:linear-gradient(#000 0.5px,#000 86.5px,#00cae3 87.5px,#00db86 89.5px,#39e326 91.5px,#6ae60f 92.5px,#d5eb02 94.5px,#ffb30a 98.5px,#ffb50a 102.5px,#e8e501 105.5px,#5ce511 108.5px,#22e147 111.5px,#00dd7b 118.5px,#00c4eb 126.5px,#00bae9 127.5px,#00617f 128.5px,#00294a 133.5px,#000715 140.5px,#000001 148.5px)"></i><i style="left:138px;background:linear-gradient(#000 0.5px,#000 87.5px,#00cfc5 88.5px,#00d79d 89.5px,#03de74 90.5px,#48e414 92.5px,#e8e501 95.5px,#ffac0a 98.5px,#ff9b0a 101.5px,#ebde03 106.5px,#46e414 110.5px,#28e13f 112.5px,#03de74 119.5px,#00bfea 128.5px,#00b5e8 129.5px,#005979 130.5px,#002b4d 134.5px,#000716 141.5px,#000002 148.5px)"></i><i style="left:139px;background:linear-gradient(#000 0.5px,#000 86.5px,#00b8e9 87.5px,#00d993 89.5px,#53e512 92.5px,#e4eb00 95.5px,#ffb70a 100.5px,#dcec01 105.5px,#49e414 108.5px,#1be052 111.5px,#00db86 118.5px,#00c8eb 125.5px,#00b4e8 127.5px,#005979 128.5px,#002e50 132.5px,#000714 140.5px,#000001 148.5px)"></i><i style="left:140px;background:linear-gradient(#000 0.5px,#000 87.5px,#00cdd1 88.5px,#00dc81 90.5px,#3ce323 92.5px,#d0eb03 95.5px,#eae102 96.5px,#ffb20a 100.5px,#eae002 105.5px,#d5eb02 106.5px,#46e415 109.5px,#1be051 112.5px,#00db87 119.5px,#00c7eb 126.5px,#00b3e8 128.5px,#005878 129.5px,#002c4e 133.5px,#000613 141.5px,#000002 148.5px)"></i><i style="left:141px;background:linear-gradient(#000 0.5px,#000103 86.5px,#00d1ba 87.5px,#00d992 88.5px,#0cdf67 89.5px,#5ce511 91.5px,#cceb03 93.5px,#ffb40a 96.5px,#ff9b0a 100.5px,#ffa80a 102.5px,#e8e402 105.5px,#62e510 108.5px,#27e140 111.5px,#01de77 118.5px,#00c7eb 126.5px,#00b3e8 128.5px,#005777 129.5px,#00294b 133.5px,#000715 140.5px,#000001 148.5px)"></i><i style="left:142px;background:linear-gradient(#000 0.5px,#000 86.5px,#00c8ea 87.5px,#09df6c 90.5px,#43e418 92.5px,#e8e402 96.5px,#f8c707 100.5px,#e2ec00 104.5px,#59e512 107.5px,#11df60 111.5px,#00d994 118.5px,#00c8eb 124.5px,#00b5e8 126.5px,#005b7a 127.5px,#00284a 132.5px,#000612 140.5px,#000001 148.5px)"></i><i style="left:143px;background:linear-gradient(#000 0.5px,#000 86.5px,#00284a 87.5px,#00d1bc 88.5px,#00d895 89.5px,#52e513 92.5px,#e5ea00 95.5px,#ffb50a 99.5px,#f9c508 103.5px,#e6e801 105.5px,#56e512 108.5px,#20e14a 111.5px,#00dc80 118.5px,#00c2ea 126.5px,#00b8e9 127.5px,#005e7d 128.5px,#00284a 133.5px,#000715 140.5px,#000001 148.5px)"></i><i style="left:144px;background:linear-gradient(#000 0.5px,#000 86.5px,#00d2b5 87.5px,#00da8c 88.5px,#0fdf62 89.5px,#68e610 91.5px,#e0ec00 93.5px,#ffa50a 96.5px,#fe850a 100.5px,#f3d005 105.5px,#e4ec00 106.5px,#5ee511 109.5px,#33e230 111.5px,#01de77 119.5px,#00c7eb 127.5px,#00b2e8 129.5px,#005576 130.5px,#003052 133.5px,#000818 140.5px,#000001 148.5px)"></i><i style="left:145px;background:linear-gradient(#000 0.5px,#000 86.5px,#000716 87.5px,#00cfc8 88.5px,#02de75 90.5px,#42e41a 92.5px,#d3eb02 95.5px,#ffb70a 100.5px,#e5eb00 105.5px,#52e512 108.5px,#1fe14c 111.5px,#00dd7d 117.5px,#00c0ea 126.5px,#00b7e9 127.5px,#005c7c 128.5px,#002849 133.5px,#000716 140.5px,#000001 148.5px)"></i><i style="left:146px;background:linear-gradient(#000 0.5px,#000208 87.5px,#00cecb 88.5px,#00de78 90.5px,#40e41c 92.5px,#d2eb02 95.5px,#f5cc06 97.5px,#ffb50a 100.5px,#e6e801 105.5px,#59e512 108.5px,#17e057 112.5px,#00dc82 118.5px,#00c2ea 126.5px,#00b8e9 127.5px,#005f7e 128.5px,#00294b 133.5px,#000816 140.5px,#000002 148.5px)"></i><i style="left:147px;background:linear-gradient(#000 0.5px,#000 86.5px,#005c7b 87.5px,#00d5a9 88.5px,#00dc81 89.5px,#3de321 91.5px,#76e60e 92.5px,#e3ec00 94.5px,#ffb00a 97.5px,#ff9a0a 100.5px,#eed904 105.5px,#d7eb02 106.5px,#4ee413 109.5px,#2ae23c 111.5px,#05de71 118.5px,#00c1ea 127.5px,#00b7e9 128.5px,#005c7b 129.5px,#002d4f 133.5px,#000817 140.5px,#000001 148.5px)"></i><i style="left:148px;background:linear-gradient(#000 0.5px,#000 87.5px,#00d0c2 88.5px,#00d79b 89.5px,#06de70 90.5px,#4ce413 92.5px,#e7e601 95.5px,#ffb00a 98.5px,#ff9e0a 100.5px,#ffae0a 103.5px,#e7e601 106.5px,#5de511 109.5px,#25e143 112.5px,#00de79 119.5px,#00c5eb 127.5px,#00b1e8 129.5px,#005575 130.5px,#003254 133.5px,#000715 141.5px,#000002 148.5px)"></i><i style="left:149px;background:linear-gradient(#000 0.5px,#000 87.5px,#00cbda 88.5px,#00da8d 90.5px,#58e512 93.5px,#e5ea00 96.5px,#febb0a 100.5px,#e8e402 105.5px,#43e419 109.5px,#17e057 112.5px,#00da8b 119.5px,#00c4ea 126.5px,#00b1e8 128.5px,#005575 129.5px,#002b4d 133.5px,#000818 140.5px,#000002 148.5px)"></i><i style="left:150px;background:linear-gradient(#000 0.5px,#000 87.5px,#00cadf 88.5px,#00d993 90.5px,#49e414 93.5px,#d5eb02 96.5px,#f8c707 100.5px,#daeb01 105.5px,#4ee413 108.5px,#10df62 112.5px,#00d897 119.5px,#00c6eb 125.5px,#00b3e8 127.5px,#005878 128.5px,#002f51 132.5px,#000716 140.5px,#000002 148.5px)"></i><i style="left:151px;background:linear-gradient(#000 0.5px,#000 86.5px,#001028 87.5px,#00d1bc 88.5px,#00d895 89.5px,#0cdf67 90.5px,#55e512 92.5px,#e7e701 95.5px,#ffb80a 98.5px,#ffa80a 100.5px,#eae102 105.5px,#64e610 108.5px,#26e142 111.5px,#00de7a 118.5px,#00c7eb 126.5px,#00b3e8 128.5px,#005777 129.5px,#002b4d 133.5px,#000817 140.5px,#000001 148.5px)"></i><i style="left:152px;background:linear-gradient(#000 0.5px,#000 86.5px,#000511 87.5px,#00ccd5 88.5px,#00dc84 90.5px,#56e512 93.5px,#ddec01 96.5px,#f7c807 100.5px,#e6e801 104.5px,#40e41c 108.5px,#15e059 111.5px,#00c1ea 125.5px,#00b8e9 126.5px,#005e7d 127.5px,#002b4d 132.5px,#000614 140.5px,#000001 148.5px)"></i><i style="left:153px;background:linear-gradient(#000 0.5px,#000 86.5px,#005474 87.5px,#00d3b4 88.5px,#00da8d 89.5px,#5fe511 92.5px,#e8e402 95.5px,#ffb70a 98.5px,#ffb80a 102.5px,#e7e601 105.5px,#5ae511 108.5px,#22e148 111.5px,#00dd7d 118.5px,#00c4ea 126.5px,#00bae9 127.5px,#00607f 128.5px,#00294a 133.5px,#000715 140.5px,#000001 148.5px)"></i><i style="left:154px;background:linear-gradient(#000 0.5px,#000103 86.5px,#00cdcf 87.5px,#00dd7e 89.5px,#3ce322 91.5px,#e8e401 95.5px,#ffb90a 99.5px,#e6e901 104.5px,#59e512 107.5px,#16e058 111.5px,#00dc84 117.5px,#00c1ea 125.5px,#00b8e9 126.5px,#005e7d 127.5px,#00294a 132.5px,#000611 140.5px,#000001 148.5px)"></i><i style="left:155px;background:linear-gradient(#000 0.5px,#000 86.5px,#000818 87.5px,#00cfc6 88.5px,#00d6a0 89.5px,#04de72 90.5px,#44e417 92.5px,#d8eb01 95.5px,#ffb40a 100.5px,#e6e901 105.5px,#56e512 108.5px,#21e149 111.5px,#00de7a 117.5px,#00c2ea 126.5px,#00b8e9 127.5px,#005e7d 128.5px,#00284a 133.5px,#000716 140.5px,#000001 148.5px)"></i><i style="left:156px;background:linear-gradient(#000 0.5px,#000 87.5px,#00ccd8 88.5px,#00da8a 90.5px,#5ae511 93.5px,#e5e901 96.5px,#febb0a 100.5px,#e8e501 105.5px,#42e41a 109.5px,#17e057 112.5px,#00da8c 119.5px,#00c4ea 126.5px,#00bae9 127.5px,#00617f 128.5px,#002b4c 133.5px,#000817 140.5px,#000002 148.5px)"></i><i style="left:157px;background:linear-gradient(#000 0.5px,#000 86.5px,#003b5d 87.5px,#00d4ae 88.5px,#00db87 89.5px,#38e328 91.5px,#6ce60f 92.5px,#d9eb01 94.5px,#ffb50a 97.5px,#ff9e0a 100.5px,#eddb03 105.5px,#4be413 109.5px,#29e23d 111.5px,#03de74 118.5px,#00c0ea 127.5px,#00b6e9 128.5px,#005b7a 129.5px,#002d4f 133.5px,#000817 140.5px,#000001 148.5px)"></i><i style="left:158px;background:linear-gradient(#000 0.5px,#000105 86.5px,#00d0c3 87.5px,#00d79d 88.5px,#05de70 89.5px,#49e414 91.5px,#e5eb00 94.5px,#ffb90a 97.5px,#ffa70a 99.5px,#eddc03 104.5px,#d9eb01 105.5px,#4be413 108.5px,#1fe14c 111.5px,#00de77 117.5px,#00bfea 126.5px,#00b5e8 127.5px,#005a7a 128.5px,#002d4f 132.5px,#000613 140.5px,#000001 148.5px)"></i><i style="left:159px;background:linear-gradient(#000 0.5px,#000 86.5px,#00112c 87.5px,#00cfc7 88.5px,#00d6a1 89.5px,#04de72 90.5px,#42e419 92.5px,#d2eb02 95.5px,#eae102 96.5px,#febb0a 100.5px,#deec01 105.5px,#4be413 108.5px,#1ce050 111.5px,#00db88 118.5px,#00c8eb 125.5px,#00b4e8 127.5px,#005979 128.5px,#002f51 132.5px,#000715 140.5px,#000001 148.5px)"></i><i style="left:160px;background:linear-gradient(#000 0.5px,#000001 87.5px,#00cecd 88.5px,#00dd7c 90.5px,#3fe31e 92.5px,#d4eb02 95.5px,#f6cb06 97.5px,#ffb10a 100.5px,#eae102 105.5px,#d2eb02 106.5px,#45e416 109.5px,#1be052 112.5px,#00db88 119.5px,#00c6eb 126.5px,#00b3e8 128.5px,#005777 129.5px,#002c4e 133.5px,#000818 140.5px,#000002 148.5px)"></i><i style="left:161px;background:linear-gradient(#000 0.5px,#000 86.5px,#001029 87.5px,#00d1bd 88.5px,#00d896 89.5px,#0bdf68 90.5px,#53e512 92.5px,#e6e801 95.5px,#ffb10a 99.5px,#fcbe09 103.5px,#e9e202 105.5px,#62e510 108.5px,#25e143 111.5px,#00dd7b 118.5px,#00c6eb 126.5px,#00b2e8 128.5px,#005676 129.5px,#002b4c 133.5px,#000817 140.5px,#000001 148.5px)"></i><i style="left:162px;background:linear-gradient(#000 0.5px,#000 86.5px,#004668 87.5px,#00cecc 88.5px,#01de77 90.5px,#3be323 92.5px,#e2ec00 96.5px,#f4ce06 100.5px,#d8eb02 104.5px,#53e512 107.5px,#0edf64 111.5px,#00d899 118.5px,#00c5eb 124.5px,#00b2e8 126.5px,#005777 127.5px,#002748 132.5px,#000612 140.5px,#000001 148.5px)"></i><i style="left:163px;background:linear-gradient(#000 0.5px,#000 87.5px,#00cdd2 88.5px,#00dc83 90.5px,#3be324 92.5px,#6ae60f 93.5px,#d2eb02 95.5px,#ffb80a 99.5px,#fdbc09 103.5px,#e0ec01 106.5px,#4de413 109.5px,#1de14e 112.5px,#00dc83 119.5px,#00c0ea 127.5px,#00b6e9 128.5px,#005b7a 129.5px,#002e50 133.5px,#000614 141.5px,#000002 148.5px)"></i><i style="left:164px;background:linear-gradient(#000 0.5px,#000 86.5px,#001028 87.5px,#00d1bc 88.5px,#00d895 89.5px,#0cdf67 90.5px,#54e512 92.5px,#e6e801 95.5px,#ffb80a 98.5px,#ffa90a 100.5px,#eae102 105.5px,#64e610 108.5px,#26e142 111.5px,#00de7a 118.5px,#00c6eb 126.5px,#00b3e8 128.5px,#005777 129.5px,#002b4d 133.5px,#000817 140.5px,#000001 148.5px)"></i><i style="left:165px;background:linear-gradient(#000 0.5px,#000 87.5px,#00ccd9 88.5px,#00da8b 90.5px,#5ae511 93.5px,#e5e901 96.5px,#febb0a 100.5px,#e8e501 105.5px,#42e41a 109.5px,#17e057 112.5px,#00da8c 119.5px,#00c4ea 126.5px,#00bae9 127.5px,#00617f 128.5px,#002b4c 133.5px,#000817 140.5px,#000002 148.5px)"></i><i style="left:166px;background:linear-gradient(#000 0.5px,#000 87.5px,#00cdd1 88.5px,#00dc81 90.5px,#3be323 92.5px,#ceeb03 95.5px,#e9e202 96.5px,#ffb40a 100.5px,#e9e202 105.5px,#d1eb02 106.5px,#44e417 109.5px,#1ae053 112.5px,#00db89 119.5px,#00c6eb 126.5px,#00b2e8 128.5px,#005676 129.5px,#002c4e 133.5px,#000818 140.5px,#000002 148.5px)"></i><i style="left:167px;background:linear-gradient(#000 0.5px,#000003 87.5px,#00cec9 88.5px,#01de77 90.5px,#42e41a 92.5px,#daeb01 95.5px,#ffb70a 99.5px,#fcbe09 103.5px,#eae002 105.5px,#d1eb02 106.5px,#45e416 109.5px,#1ce051 112.5px,#00dd7c 118.5px,#00c7eb 126.5px,#00b3e8 128.5px,#005777 129.5px,#002c4e 133.5px,#000818 140.5px,#000002 148.5px)"></i><i style="left:168px;background:linear-gradient(#000 0.5px,#000 87.5px,#00ccd4 88.5px,#00db86 90.5px,#38e327 92.5px,#62e510 93.5px,#e7e501 96.5px,#ffb70a 100.5px,#e9e302 105.5px,#d0eb03 106.5px,#43e418 109.5px,#19e054 112.5px,#00db8a 119.5px,#00c5eb 126.5px,#00b2e8 128.5px,#005676 129.5px,#002b4d 133.5px,#000818 140.5px,#000002 148.5px)"></i><i style="left:169px;background:linear-gradient(#000 0.5px,#000 86.5px,#00cbdb 87.5px,#00dd7d 89.5px,#40e41c 91.5px,#e5ea00 94.5px,#ffaf0a 97.5px,#ff9b0a 100.5px,#eddb03 105.5px,#4ae413 109.5px,#29e13e 111.5px,#04de72 118.5px,#00c0ea 127.5px,#00b6e9 128.5px,#005b7a 129.5px,#002c4e 133.5px,#000817 140.5px,#000001 148.5px)"></i><i style="left:170px;background:linear-gradient(#000 0.5px,#000209 87.5px,#00cfc5 88.5px,#00d79e 89.5px,#05de71 90.5px,#46e414 92.5px,#e1ec00 95.5px,#ffb40a 99.5px,#fdbd09 103.5px,#eae002 105.5px,#45e416 109.5px,#1ce050 112.5px,#00dd7b 118.5px,#00c7eb 126.5px,#00b3e8 128.5px,#005777 129.5px,#002c4e 133.5px,#000817 140.5px,#000002 148.5px)"></i><i style="left:171px;background:linear-gradient(#000 0.5px,#000 86.5px,#00375a 87.5px,#00d1bc 88.5px,#00d895 89.5px,#51e513 92.5px,#e4eb00 95.5px,#ffb80a 99.5px,#fcbf09 102.5px,#e4eb00 105.5px,#51e513 108.5px,#1ee14d 111.5px,#00dc83 118.5px,#00c0ea 126.5px,#00b7e9 127.5px,#005c7b 128.5px,#003052 132.5px,#000715 140.5px,#000001 148.5px)"></i><i style="left:172px;background:linear-gradient(#000 0.5px,#000104 86.5px,#00cecc 87.5px,#00de7a 89.5px,#40e31d 91.5px,#d2eb02 94.5px,#f5cc06 96.5px,#ffb40a 99.5px,#e7e501 104.5px,#5ee511 107.5px,#18e055 111.5px,#00dc81 117.5px,#00c4ea 125.5px,#00bae9 126.5px,#00617f 127.5px,#002a4c 132.5px,#000612 140.5px,#000001 148.5px)"></i><i style="left:173px;background:linear-gradient(#000 0.5px,#000002 86.5px,#00d0c1 87.5px,#00d899 88.5px,#07df6e 89.5px,#4fe413 91.5px,#e7e601 94.5px,#ffb10a 97.5px,#ff9f0a 99.5px,#ffb00a 102.5px,#e5e901 105.5px,#58e512 108.5px,#23e145 111.5px,#00dd7c 118.5px,#00c4ea 126.5px,#00bae9 127.5px,#00607e 128.5px,#002749 133.5px,#000714 140.5px,#000001 148.5px)"></i><i style="left:174px;background:linear-gradient(#000 0.5px,#000 86.5px,#00cdd0 87.5px,#00dd80 89.5px,#3ce322 91.5px,#d0eb03 94.5px,#eae102 95.5px,#ffb30a 99.5px,#eae102 104.5px,#d2eb02 105.5px,#45e416 108.5px,#1ae052 111.5px,#00db88 118.5px,#00c6eb 125.5px,#00b2e8 127.5px,#005777 128.5px,#002c4e 132.5px,#000613 140.5px,#000001 148.5px)"></i><i style="left:175px;background:linear-gradient(#000 0.5px,#000104 87.5px,#00cfc6 88.5px,#00d6a0 89.5px,#03de74 90.5px,#45e416 92.5px,#e0ec01 95.5px,#ffb40a 99.5px,#fdbc09 103.5px,#ebdf03 105.5px,#d4eb02 106.5px,#46e414 109.5px,#1de04f 112.5px,#00de7a 118.5px,#00c8eb 126.5px,#00b4e8 128.5px,#005878 129.5px,#002c4e 133.5px,#000818 140.5px,#000002 148.5px)"></i><i style="left:176px;background:linear-gradient(#000 0.5px,#000003 87.5px,#00cecb 88.5px,#00de78 90.5px,#41e41b 92.5px,#d7eb02 95.5px,#ffb10a 100.5px,#e9e202 105.5px,#44e417 109.5px,#1ae052 112.5px,#00dd7e 118.5px,#00c5eb 126.5px,#00b2e8 128.5px,#005676 129.5px,#002b4d 133.5px,#000817 140.5px,#000002 148.5px)"></i><i style="left:177px;background:linear-gradient(#000 0.5px,#000104 87.5px,#00cdd0 88.5px,#00dd7e 90.5px,#3ce322 92.5px,#e8e501 96.5px,#ffba0a 100.5px,#e5ea00 105.5px,#57e512 108.5px,#16e059 112.5px,#00dc85 118.5px,#00c1ea 126.5px,#00b7e9 127.5px,#005d7c 128.5px,#00284a 133.5px,#000716 140.5px,#000002 148.5px)"></i><i style="left:178px;background:linear-gradient(#000 0.5px,#000 86.5px,#003c5e 87.5px,#00d1bb 88.5px,#00d895 89.5px,#51e513 92.5px,#e4eb00 95.5px,#ffb80a 99.5px,#fcbf09 102.5px,#e4ec00 105.5px,#50e513 108.5px,#1ee14d 111.5px,#00dc83 118.5px,#00c0ea 126.5px,#00b6e9 127.5px,#005c7b 128.5px,#002f52 132.5px,#000715 140.5px,#000001 148.5px)"></i><i style="left:179px;background:linear-gradient(#000 0.5px,#000 86.5px,#000f27 87.5px,#00d2b8 88.5px,#00d991 89.5px,#0fdf63 90.5px,#5de511 92.5px,#e9e202 95.5px,#ffb20a 98.5px,#ffa10a 100.5px,#eddb03 105.5px,#d7eb02 106.5px,#4be413 109.5px,#21e149 112.5px,#02de75 118.5px,#00c0ea 127.5px,#00b6e9 128.5px,#005b7a 129.5px,#002d4f 133.5px,#000818 140.5px,#000002 148.5px)"></i><i style="left:180px;background:linear-gradient(#000 0.5px,#000 86.5px,#00cece 87.5px,#00dd7e 89.5px,#3ee31f 91.5px,#d8eb02 94.5px,#ffb60a 98.5px,#febb0a 102.5px,#dfec01 105.5px,#4de413 108.5px,#1ee14d 111.5px,#00dc82 118.5px,#00c0ea 126.5px,#00b6e9 127.5px,#005b7a 128.5px,#002e50 132.5px,#000614 140.5px,#000001 148.5px)"></i><i style="left:181px;background:linear-gradient(#000 0.5px,#000 86.5px,#001e3e 87.5px,#00d1ba 88.5px,#00d994 89.5px,#56e512 92.5px,#e6e801 95.5px,#ffb10a 99.5px,#fbc009 103.5px,#e8e402 105.5px,#5ee511 108.5px,#23e145 111.5px,#00dd7c 118.5px,#00c5eb 126.5px,#00b1e8 128.5px,#005575 129.5px,#002a4b 133.5px,#000716 140.5px,#000001 148.5px)"></i><i style="left:182px;background:linear-gradient(#000 0.5px,#000 86.5px,#00cecd 87.5px,#00dd7e 89.5px,#3fe31e 91.5px,#76e60e 92.5px,#e1ec00 94.5px,#ffb50a 97.5px,#ffa30a 100.5px,#e9e202 105.5px,#61e511 108.5px,#24e144 111.5px,#00de78 118.5px,#00c6eb 126.5px,#00b2e8 128.5px,#005676 129.5px,#002a4b 133.5px,#000715 140.5px,#000001 148.5px)"></i><i style="left:183px;background:linear-gradient(#000 0.5px,#000001 86.5px,#00cbda 87.5px,#00da8b 89.5px,#52e513 92.5px,#dcec01 95.5px,#f9c408 99.5px,#d8eb01 104.5px,#4be413 107.5px,#10df61 111.5px,#00d898 118.5px,#00c6eb 124.5px,#00b3e8 126.5px,#005877 127.5px,#002647 132.5px,#000511 140.5px,#000001 148.5px)"></i><i style="left:184px;background:linear-gradient(#000 0.5px,#000 86.5px,#002f51 87.5px,#00d0c2 88.5px,#00d79d 89.5px,#45e416 92.5px,#d6eb02 95.5px,#fdbc09 100.5px,#d7eb02 105.5px,#46e415 108.5px,#1ae053 111.5px,#00db8a 118.5px,#00c6eb 125.5px,#00b3e8 127.5px,#005777 128.5px,#002d4f 132.5px,#000714 140.5px,#000001 148.5px)"></i><i style="left:185px;background:linear-gradient(#000 0.5px,#000 86.5px,#00cae0 87.5px,#00d895 89.5px,#4ce413 92.5px,#dbec01 95.5px,#fbc108 100.5px,#e6e801 104.5px,#3fe31d 108.5px,#14e05b 111.5px,#00da8f 118.5px,#00c1ea 125.5px,#00b8e9 126.5px,#005e7d 127.5px,#002a4b 132.5px,#000612 140.5px,#000001 148.5px)"></i><i style="left:186px;background:linear-gradient(#000 0.5px,#000001 87.5px,#00cdd0 88.5px,#00dd7f 90.5px,#3ce322 92.5px,#e9e302 96.5px,#ffb60a 100.5px,#e7e601 105.5px,#41e41b 109.5px,#18e056 112.5px,#00dc81 118.5px,#00c3ea 126.5px,#00bae9 127.5px,#00607f 128.5px,#002a4c 133.5px,#000817 140.5px,#000002 148.5px)"></i><i style="left:187px;background:linear-gradient(#000 0.5px,#000 86.5px,#00cdd3 87.5px,#00dc83 89.5px,#3ae326 91.5px,#63e510 92.5px,#e7e601 95.5px,#ffb90a 99.5px,#e7e601 104.5px,#41e41b 108.5px,#17e057 111.5px,#00da8d 118.5px,#00c3ea 125.5px,#00bae9 126.5px,#00607f 127.5px,#002a4c 132.5px,#000612 140.5px,#000001 148.5px)"></i><i style="left:188px;background:linear-gradient(#000 0.5px,#000 85.5px,#00030c 86.5px,#00d1bc 87.5px,#00d994 88.5px,#0bdf68 89.5px,#59e512 91.5px,#e9e302 94.5px,#ffb00a 97.5px,#ff9e0a 99.5px,#ffb10a 102.5px,#e2ec00 105.5px,#53e512 108.5px,#23e147 111.5px,#04de73 117.5px,#00c2ea 126.5px,#00b8e9 127.5px,#005e7d 128.5px,#002648 133.5px,#000613 140.5px,#000001 148.5px)"></i><i style="left:189px;background:linear-gradient(#000 0.5px,#000 87.5px,#00cdd1 88.5px,#00dc81 90.5px,#3be323 92.5px,#ceeb03 95.5px,#e9e202 96.5px,#ffb30a 100.5px,#eae102 105.5px,#d2eb02 106.5px,#45e416 109.5px,#1ae052 112.5px,#00db88 119.5px,#00c6eb 126.5px,#00b3e8 128.5px,#005777 129.5px,#002c4e 133.5px,#000818 140.5px,#000002 148.5px)"></i><i style="left:190px;background:linear-gradient(#000 0.5px,#000 86.5px,#046 87.5px,#00d3af 88.5px,#00db88 89.5px,#69e610 92.5px,#d5eb02 94.5px,#ffb80a 97.5px,#ffa20a 100.5px,#ebde03 105.5px,#46e414 109.5px,#27e140 111.5px,#01de76 118.5px,#00c8eb 126.5px,#00b4e8 128.5px,#005978 129.5px,#002c4d 133.5px,#000817 140.5px,#000001 148.5px)"></i><i style="left:191px;background:linear-gradient(#000 0.5px,#000 86.5px,#002a4c 87.5px,#00d1bd 88.5px,#00d896 89.5px,#50e413 92.5px,#e4ec00 95.5px,#ffb70a 99.5px,#fcbe09 102.5px,#e5ea00 105.5px,#54e512 108.5px,#1fe14b 111.5px,#00dc82 118.5px,#00c1ea 126.5px,#00b7e9 127.5px,#005d7c 128.5px,#002849 133.5px,#000715 140.5px,#000001 148.5px)"></i><i style="left:192px;background:linear-gradient(#000 0.5px,#000 86.5px,#002142 87.5px,#00d0c1 88.5px,#00d79b 89.5px,#47e414 92.5px,#dbec01 95.5px,#ffb80a 100.5px,#e0ec00 105.5px,#4de413 108.5px,#1de04f 111.5px,#00db86 118.5px,#00c8ea 125.5px,#00b5e8 127.5px,#005a7a 128.5px,#002f51 132.5px,#000715 140.5px,#000001 148.5px)"></i><i style="left:193px;background:linear-gradient(#000 0.5px,#000001 87.5px,#00cec9 88.5px,#00de77 90.5px,#42e41a 92.5px,#dcec01 95.5px,#ffb50a 99.5px,#fdbc09 103.5px,#ecde03 105.5px,#d7eb02 106.5px,#48e414 109.5px,#1de04e 112.5px,#00dc85 119.5px,#00c8eb 126.5px,#00b4e8 128.5px,#005979 129.5px,#002d4f 133.5px,#000613 141.5px,#000002 148.5px)"></i><i style="left:194px;background:linear-gradient(#000 0.5px,#000002 86.5px,#00d0c4 87.5px,#00d79d 88.5px,#05de71 89.5px,#49e414 91.5px,#e5ea00 94.5px,#ffb60a 97.5px,#ffa40a 99.5px,#ffb50a 102.5px,#e2ec00 105.5px,#51e513 108.5px,#21e149 111.5px,#02de75 117.5px,#00c1ea 126.5px,#00b7e9 127.5px,#005d7c 128.5px,#002647 133.5px,#000614 140.5px,#000001 148.5px)"></i><i style="left:195px;background:linear-gradient(#000 0.5px,#000 86.5px,#002444 87.5px,#00d1bb 88.5px,#00d895 89.5px,#53e512 92.5px,#e5e901 95.5px,#ffb40a 99.5px,#fac308 103.5px,#e7e701 105.5px,#5ae512 108.5px,#22e148 111.5px,#00dd7f 118.5px,#00c3ea 126.5px,#00b9e9 127.5px,#00607e 128.5px,#00294a 133.5px,#000716 140.5px,#000001 148.5px)"></i><i style="left:196px;background:linear-gradient(#000 0.5px,#000 86.5px,#00cdd3 87.5px,#00db85 89.5px,#3ae325 91.5px,#6ae60f 92.5px,#d5eb02 94.5px,#ffb40a 98.5px,#ffb70a 102.5px,#e6e801 105.5px,#57e512 108.5px,#20e14a 111.5px,#00dd7d 118.5px,#00c3ea 126.5px,#00b9e9 127.5px,#005f7e 128.5px,#002849 133.5px,#000715 140.5px,#000001 148.5px)"></i><i style="left:197px;background:linear-gradient(#000 0.5px,#000 86.5px,#00112a 87.5px,#00d1bd 88.5px,#00d896 89.5px,#0bdf68 90.5px,#52e512 92.5px,#e6e901 95.5px,#ffb20a 99.5px,#fcbf09 103.5px,#e9e302 105.5px,#61e511 108.5px,#25e144 111.5px,#00dd7c 118.5px,#00c5eb 126.5px,#00b2e8 128.5px,#005676 129.5px,#002a4c 133.5px,#000816 140.5px,#000001 148.5px)"></i><i style="left:198px;background:linear-gradient(#000 0.5px,#000106 86.5px,#00d0c2 87.5px,#00d79b 88.5px,#06df6f 89.5px,#4ce413 91.5px,#e5e900 94.5px,#ffb70a 97.5px,#ffa60a 99.5px,#eddb03 104.5px,#dbec01 105.5px,#4de413 108.5px,#20e14b 111.5px,#01de76 117.5px,#00c0ea 126.5px,#00b6e9 127.5px,#005b7a 128.5px,#002e50 132.5px,#000613 140.5px,#000001 148.5px)"></i><i style="left:199px;background:linear-gradient(#000 0.5px,#000 86.5px,#00cecb 87.5px,#00de79 89.5px,#41e41b 91.5px,#dcec01 94.5px,#ffb50a 98.5px,#febb0a 102.5px,#dbec01 105.5px,#4be413 108.5px,#1ee14d 111.5px,#00de79 117.5px,#00bfea 126.5px,#00b5e8 127.5px,#005a7a 128.5px,#002e50 132.5px,#000613 140.5px,#000001 148.5px)"></i><i style="left:200px;background:linear-gradient(#000 0.5px,#000 86.5px,#00284a 87.5px,#00d0c2 88.5px,#00d79d 89.5px,#45e415 92.5px,#d7eb02 95.5px,#febb0a 100.5px,#dbec01 105.5px,#48e414 108.5px,#1be052 111.5px,#00db88 118.5px,#00c7eb 125.5px,#00b4e8 127.5px,#005878 128.5px,#002e50 132.5px,#000714 140.5px,#000001 148.5px)"></i><i style="left:201px;background:linear-gradient(#000 0.5px,#000 86.5px,#00cecd 87.5px,#00dd7d 89.5px,#3fe31e 91.5px,#dbec01 94.5px,#ffb20a 98.5px,#ffb70a 102.5px,#e5ea00 105.5px,#54e512 108.5px,#20e14a 111.5px,#00dd7f 118.5px,#00c2ea 126.5px,#00b8e9 127.5px,#005e7d 128.5px,#002748 133.5px,#000714 140.5px,#000001 148.5px)"></i><i style="left:202px;background:linear-gradient(#000 0.5px,#000105 86.5px,#00d0c0 87.5px,#00d899 88.5px,#08df6d 89.5px,#50e513 91.5px,#e7e601 94.5px,#ffb30a 97.5px,#ffa10a 99.5px,#ffb30a 102.5px,#e3ec00 105.5px,#53e512 108.5px,#22e148 111.5px,#03de73 117.5px,#00c2ea 126.5px,#00b8e9 127.5px,#005e7d 128.5px,#002648 133.5px,#000614 140.5px,#000001 148.5px)"></i><i style="left:203px;background:linear-gradient(#000 0.5px,#000 86.5px,#000511 87.5px,#00cecb 88.5px,#00de78 90.5px,#40e41c 92.5px,#e9e202 96.5px,#ffb90a 100.5px,#e4ec00 105.5px,#50e513 108.5px,#1ee14d 111.5px,#01de76 116.5px,#00c0ea 126.5px,#00b6e9 127.5px,#005c7b 128.5px,#003052 132.5px,#000715 140.5px,#000001 148.5px)"></i><i style="left:204px;background:linear-gradient(#000 0.5px,#000107 87.5px,#00d1be 88.5px,#00d897 89.5px,#09df6b 90.5px,#54e512 92.5px,#e8e501 95.5px,#ffb10a 98.5px,#ff9f0a 100.5px,#ffb20a 103.5px,#e4ec00 106.5px,#54e512 109.5px,#23e147 112.5px,#04de73 118.5px,#00c3ea 127.5px,#00b8e9 128.5px,#005e7d 129.5px,#002f51 133.5px,#000614 141.5px,#000002 148.5px)"></i><i style="left:205px;background:linear-gradient(#000 0.5px,#000 86.5px,#00cfc8 87.5px,#02de76 89.5px,#44e417 91.5px,#e2ec00 94.5px,#ffb00a 98.5px,#ffb70a 102.5px,#e1ec00 105.5px,#50e513 108.5px,#20e14b 111.5px,#00dc81 118.5px,#00c1ea 126.5px,#00b7e9 127.5px,#005c7c 128.5px,#002f51 132.5px,#000614 140.5px,#000001 148.5px)"></i><i style="left:206px;background:linear-gradient(#000 0.5px,#000 86.5px,#002142 87.5px,#00d1bc 88.5px,#00d896 89.5px,#52e513 92.5px,#e5ea00 95.5px,#ffb50a 99.5px,#f9c308 103.5px,#e7e701 105.5px,#59e512 108.5px,#21e148 111.5px,#00dd7f 118.5px,#00c3ea 126.5px,#00b9e9 127.5px,#005f7e 128.5px,#00294a 133.5px,#000716 140.5px,#000001 148.5px)"></i><i style="left:207px;background:linear-gradient(#000 0.5px,#000001 87.5px,#00cdcf 88.5px,#00dd7e 90.5px,#3de321 92.5px,#cfeb03 95.5px,#e9e202 96.5px,#ffb50a 100.5px,#e8e402 105.5px,#42e419 109.5px,#19e055 112.5px,#00dc80 118.5px,#00c4ea 126.5px,#00b1e8 128.5px,#005575 129.5px,#002b4c 133.5px,#000817 140.5px,#000002 148.5px)"></i><i style="left:208px;background:linear-gradient(#000 0.5px,#000 86.5px,#004163 87.5px,#00d0c1 88.5px,#00d79b 89.5px,#46e414 92.5px,#d7eb02 95.5px,#fdbd09 100.5px,#e9e202 104.5px,#d4eb02 105.5px,#44e416 108.5px,#18e055 111.5px,#00da8b 118.5px,#00c5eb 125.5px,#00b2e8 127.5px,#005676 128.5px,#002c4e 132.5px,#000614 140.5px,#000001 148.5px)"></i><i style="left:209px;background:linear-gradient(#000 0.5px,#000 86.5px,#00bfea 87.5px,#0ddf65 90.5px,#4de413 92.5px,#deec01 95.5px,#fdbd09 100.5px,#e9e302 104.5px,#d2eb02 105.5px,#44e418 108.5px,#17e056 111.5px,#00da8b 118.5px,#00c5eb 125.5px,#00b1e8 127.5px,#005676 128.5px,#002c4e 132.5px,#000613 140.5px,#000001 148.5px)"></i><i style="left:210px;background:linear-gradient(#000 0.5px,#000 87.5px,#00ccd4 88.5px,#00dc84 90.5px,#39e327 92.5px,#63e510 93.5px,#e8e501 96.5px,#ffb70a 100.5px,#e9e302 105.5px,#43e418 109.5px,#19e055 112.5px,#00da8a 119.5px,#00c5eb 126.5px,#00b1e8 128.5px,#005575 129.5px,#002b4d 133.5px,#000818 140.5px,#000002 148.5px)"></i><i style="left:211px;background:linear-gradient(#000 0.5px,#000 86.5px,#00030b 87.5px,#00ccd4 88.5px,#00dc83 90.5px,#5ae511 93.5px,#e3ec00 96.5px,#fac308 100.5px,#e9e302 104.5px,#d3eb02 105.5px,#44e416 108.5px,#19e054 111.5px,#01de77 115.5px,#00c4ea 125.5px,#00b1e8 127.5px,#005676 128.5px,#002d4f 132.5px,#000714 140.5px,#000001 148.5px)"></i><i style="left:212px;background:linear-gradient(#000 0.5px,#000 86.5px,#00040e 87.5px,#00cfc6 88.5px,#00d69f 89.5px,#04de72 90.5px,#45e415 92.5px,#dcec01 95.5px,#ffb80a 99.5px,#fbc108 103.5px,#e8e501 105.5px,#5ee511 108.5px,#1ae053 112.5px,#00dd7f 118.5px,#00c4ea 126.5px,#00b1e8 128.5px,#005475 129.5px,#002a4c 133.5px,#000817 140.5px,#000002 148.5px)"></i><i style="left:213px;background:linear-gradient(#000 0.5px,#000001 86.5px,#00d1bc 87.5px,#00d994 88.5px,#0bdf69 89.5px,#5ae511 91.5px,#cceb03 93.5px,#ffb30a 96.5px,#ff980a 100.5px,#ebe002 105.5px,#46e415 109.5px,#29e23d 111.5px,#03de73 118.5px,#00bfea 127.5px,#00b5e8 128.5px,#005979 129.5px,#002b4c 133.5px,#000715 140.5px,#000001 148.5px)"></i><i style="left:214px;background:linear-gradient(#000 0.5px,#000 87.5px,#00cfc8 88.5px,#01de77 90.5px,#44e417 92.5px,#e5ea00 95.5px,#ffb30a 98.5px,#ffa20a 101.5px,#e8e402 106.5px,#5fe511 109.5px,#24e144 112.5px,#00de79 119.5px,#00c6eb 127.5px,#00b2e8 129.5px,#005575 130.5px,#003254 133.5px,#000715 141.5px,#000002 148.5px)"></i><i style="left:215px;background:linear-gradient(#000 0.5px,#000 85.5px,#00030c 86.5px,#00cfc9 87.5px,#01de76 89.5px,#42e41a 91.5px,#d5eb02 94.5px,#ffb40a 99.5px,#e6e801 104.5px,#58e512 107.5px,#18e056 111.5px,#00dc82 117.5px,#00c2ea 125.5px,#00b9e9 126.5px,#005f7e 127.5px,#00294b 132.5px,#000511 140.5px,#000001 148.5px)"></i><i style="left:216px;background:linear-gradient(#000 0.5px,#000 86.5px,#005e7d 87.5px,#00d3af 88.5px,#00db88 89.5px,#69e610 92.5px,#d4eb02 94.5px,#ffb10a 98.5px,#ffb20a 102.5px,#eae102 105.5px,#62e510 108.5px,#25e144 111.5px,#00de78 118.5px,#00c6eb 126.5px,#00b2e8 128.5px,#005676 129.5px,#002a4c 133.5px,#000716 140.5px,#000001 148.5px)"></i><svg style="left:0;top:0" width="216.8" height="148.9" stroke-width="1" fill="none" shape-rendering="crispEdges"><path d="M107 26.5h1M107 27.5h1M108 27.5h1M107 28.5h1M107 29.5h1M107 30.5h1M106 31.5h1M104 35.5h1M105 35.5h1M109 36.5h1M114 36.5h1M110 39.5h1M115 39.5h1M115 40.5h1M101 41.5h1M105 42.5h1M98 43.5h1M116 44.5h1M108 45.5h1M115 45.5h1M108 46.5h1M110 46.5h1M117 46.5h1M97 47.5h1M108 47.5h1M114 47.5h1M117 47.5h1M97 48.5h1M106 48.5h1M108 48.5h1M108 49.5h1M114 49.5h1M115 49.5h1M97 50.5h1M98 50.5h1M100 50.5h1M106 50.5h1M108 50.5h1M109 50.5h1M116 50.5h1M117 50.5h1M100 51.5h1M105 51.5h1M108 51.5h1M118 51.5h1M99 52.5h1M108 52.5h1M115 52.5h1M101 53.5h1M108 53.5h1M105 54.5h1M108 54.5h1M108 55.5h1M105 56.5h1M108 56.5h1M110 56.5h1M114 56.5h1M116 56.5h1M116 57.5h1M118 57.5h1M96 58.5h1M106 58.5h1M108 58.5h1M116 58.5h1M108 59.5h1M113 59.5h1M116 59.5h1M99 60.5h1M106 60.5h1M113 60.5h1M101 61.5h1M108 61.5h1M116 61.5h1M108 62.5h1M113 62.5h1M116 62.5h1M100 63.5h1M108 63.5h1M116 63.5h1M106 64.5h1M108 64.5h1M114 64.5h1M115 64.5h1M100 65.5h1M108 65.5h1M114 65.5h1M116 65.5h1M105 66.5h1M108 66.5h1M109 66.5h1M116 66.5h1M105 67.5h1M106 67.5h1M108 67.5h1M116 67.5h1M118 67.5h1M86 68.5h1M106 68.5h1M108 68.5h1M120 68.5h1M127 68.5h1M128 68.5h1M88 69.5h1M108 69.5h1M115 69.5h1M116 69.5h1M100 70.5h1M108 70.5h1M116 70.5h1M118 70.5h1M96 71.5h1M99 71.5h1M108 71.5h1M114 71.5h1M116 71.5h1M118 71.5h1M116 72.5h1M125 72.5h1M130 72.5h1M95 73.5h1M99 73.5h1M108 73.5h1M110 73.5h1M116 73.5h1M119 73.5h1M100 74.5h1M108 74.5h1M110 74.5h1M116 74.5h1M99 75.5h1M108 75.5h1M116 75.5h1M122 75.5h1M105 76.5h1M108 76.5h1M116 76.5h1M119 76.5h1M131 76.5h1M99 77.5h1M108 77.5h1M113 77.5h1M116 77.5h1M121 77.5h1M122 77.5h1M108 78.5h1M109 78.5h1M113 78.5h1M116 78.5h1M106 79.5h1M108 79.5h1M116 79.5h1M101 80.5h1M108 80.5h1M116 80.5h1M1 87.5h1M3 87.5h1M17 87.5h1M21 87.5h1M24 87.5h1M29 87.5h1M41 87.5h1M49 87.5h1M51 87.5h1M55 87.5h1M57 87.5h1M75 87.5h1M76 87.5h1M134 87.5h1M143 87.5h1M147 87.5h1M178 87.5h1M190 87.5h1M191 87.5h1M208 87.5h1M108 113.5h1M108 116.5h1M106 118.5h1M106 119.5h1M108 119.5h1M106 120.5h1M106 121.5h1M108 121.5h1M108 122.5h1M108 123.5h1M108 124.5h1M108 125.5h1M6 127.5h1M17 127.5h1M33 127.5h1M34 127.5h1M36 127.5h1M45 127.5h1M63 127.5h1M81 127.5h1M142 127.5h1M152 127.5h1M154 127.5h1M162 127.5h1M172 127.5h1M183 127.5h1M187 127.5h1M215 127.5h1M0 128.5h1M3 128.5h1M5 128.5h1M7 128.5h1M10 128.5h1M15 128.5h1M16 128.5h1M18 128.5h1M20 128.5h1M21 128.5h1M22 128.5h1M23 128.5h1M25 128.5h1M26 128.5h1M28 128.5h1M30 128.5h1M31 128.5h1M33 128.5h1M34 128.5h1M36 128.5h1M39 128.5h1M46 128.5h1M48 128.5h1M49 128.5h1M52 128.5h1M57 128.5h1M58 128.5h1M60 128.5h1M61 128.5h1M63 128.5h1M66 128.5h1M68 128.5h1M69 128.5h1M70 128.5h1M74 128.5h1M75 128.5h1M78 128.5h1M80 128.5h1M81 128.5h1M83 128.5h1M93 128.5h1M106 128.5h1M107 128.5h1M108 128.5h1M132 128.5h1M133 128.5h1M137 128.5h1M139 128.5h1M142 128.5h1M145 128.5h1M146 128.5h1M150 128.5h1M154 128.5h1M155 128.5h1M158 128.5h1M159 128.5h1M171 128.5h1M172 128.5h1M173 128.5h1M177 128.5h1M178 128.5h1M185 128.5h1M186 128.5h1M187 128.5h1M188 128.5h1M191 128.5h1M192 128.5h1M195 128.5h1M198 128.5h1M199 128.5h1M200 128.5h1M201 128.5h1M202 128.5h1M203 128.5h1M205 128.5h1M206 128.5h1M208 128.5h1M215 128.5h1M0 129.5h1M2 129.5h1M3 129.5h1M5 129.5h1M6 129.5h1M7 129.5h1M8 129.5h1M10 129.5h1M11 129.5h1M12 129.5h1M13 129.5h1M14 129.5h1M15 129.5h1M17 129.5h1M18 129.5h1M19 129.5h1M20 129.5h1M21 129.5h1M23 129.5h1M24 129.5h1M25 129.5h1M26 129.5h1M27 129.5h1M28 129.5h1M29 129.5h1M30 129.5h1M31 129.5h1M37 129.5h1M39 129.5h1M42 129.5h1M44 129.5h1M46 129.5h1M47 129.5h1M48 129.5h1M50 129.5h1M51 129.5h1M52 129.5h1M53 129.5h1M54 129.5h1M55 129.5h1M56 129.5h1M57 129.5h1M59 129.5h1M61 129.5h1M63 129.5h1M64 129.5h1M66 129.5h1M67 129.5h1M69 129.5h1M70 129.5h1M71 129.5h1M72 129.5h1M73 129.5h1M75 129.5h1M76 129.5h1M77 129.5h1M78 129.5h1M80 129.5h1M81 129.5h1M82 129.5h1M83 129.5h1M84 129.5h1M85 129.5h1M87 129.5h1M88 129.5h1M92 129.5h1M95 129.5h1M96 129.5h1M100 129.5h1M103 129.5h1M106 129.5h1M107 129.5h1M112 129.5h1M117 129.5h1M121 129.5h1M122 129.5h1M126 129.5h1M128 129.5h1M134 129.5h1M135 129.5h1M136 129.5h1M139 129.5h1M140 129.5h1M141 129.5h1M142 129.5h1M143 129.5h1M145 129.5h1M146 129.5h1M147 129.5h1M150 129.5h1M151 129.5h1M153 129.5h1M154 129.5h1M155 129.5h1M158 129.5h1M161 129.5h1M162 129.5h1M163 129.5h1M164 129.5h1M165 129.5h1M167 129.5h1M168 129.5h1M169 129.5h1M172 129.5h1M173 129.5h1M174 129.5h1M175 129.5h1M177 129.5h1M178 129.5h1M179 129.5h1M180 129.5h1M181 129.5h1M182 129.5h1M183 129.5h1M185 129.5h1M186 129.5h1M187 129.5h1M188 129.5h1M189 129.5h1M190 129.5h1M191 129.5h1M193 129.5h1M194 129.5h1M195 129.5h1M196 129.5h1M197 129.5h1M198 129.5h1M199 129.5h1M200 129.5h1M201 129.5h1M204 129.5h1M205 129.5h1M207 129.5h1M208 129.5h1M209 129.5h1M210 129.5h1M211 129.5h1M212 129.5h1M213 129.5h1M216 129.5h1M0 130.5h1M1 130.5h1M2 130.5h1M4 130.5h1M8 130.5h1M10 130.5h1M11 130.5h1M14 130.5h1M15 130.5h1M16 130.5h1M18 130.5h1M19 130.5h1M20 130.5h1M21 130.5h1M22 130.5h1M24 130.5h1M25 130.5h1M26 130.5h1M29 130.5h1M30 130.5h1M32 130.5h1M33 130.5h1M34 130.5h1M38 130.5h1M39 130.5h1M40 130.5h1M41 130.5h1M42 130.5h1M43 130.5h1M46 130.5h1M47 130.5h1M48 130.5h1M50 130.5h1M51 130.5h1M52 130.5h1M53 130.5h1M54 130.5h1M55 130.5h1M56 130.5h1M57 130.5h1M58 130.5h1M59 130.5h1M60 130.5h1M61 130.5h1M62 130.5h1M63 130.5h1M64 130.5h1M65 130.5h1M67 130.5h1M68 130.5h1M71 130.5h1M72 130.5h1M73 130.5h1M75 130.5h1M76 130.5h1M78 130.5h1M79 130.5h1M80 130.5h1M81 130.5h1M82 130.5h1M83 130.5h1M85 130.5h1M86 130.5h1M87 130.5h1M89 130.5h1M90 130.5h1M92 130.5h1M93 130.5h1M95 130.5h1M96 130.5h1M98 130.5h1M99 130.5h1M102 130.5h1M103 130.5h1M104 130.5h1M105 130.5h1M106 130.5h1M110 130.5h1M112 130.5h1M113 130.5h1M114 130.5h1M115 130.5h1M116 130.5h1M117 130.5h1M118 130.5h1M119 130.5h1M121 130.5h1M122 130.5h1M124 130.5h1M125 130.5h1M126 130.5h1M127 130.5h1M129 130.5h1M130 130.5h1M131 130.5h1M132 130.5h1M136 130.5h1M137 130.5h1M138 130.5h1M139 130.5h1M141 130.5h1M143 130.5h1M145 130.5h1M146 130.5h1M147 130.5h1M148 130.5h1M149 130.5h1M150 130.5h1M151 130.5h1M152 130.5h1M153 130.5h1M154 130.5h1M156 130.5h1M157 130.5h1M158 130.5h1M159 130.5h1M160 130.5h1M161 130.5h1M163 130.5h1M164 130.5h1M166 130.5h1M169 130.5h1M170 130.5h1M173 130.5h1M176 130.5h1M177 130.5h1M179 130.5h1M180 130.5h1M181 130.5h1M185 130.5h1M186 130.5h1M187 130.5h1M188 130.5h1M189 130.5h1M192 130.5h1M194 130.5h1M195 130.5h1M196 130.5h1M197 130.5h1M198 130.5h1M199 130.5h1M200 130.5h1M201 130.5h1M202 130.5h1M204 130.5h1M206 130.5h1M209 130.5h1M210 130.5h1M211 130.5h1M212 130.5h1M214 130.5h1M215 130.5h1M0 131.5h1M1 131.5h1M3 131.5h1M4 131.5h1M5 131.5h1M7 131.5h1M8 131.5h1M9 131.5h1M14 131.5h1M15 131.5h1M16 131.5h1M17 131.5h1M19 131.5h1M20 131.5h1M21 131.5h1M22 131.5h1M23 131.5h1M24 131.5h1M25 131.5h1M26 131.5h1M28 131.5h1M32 131.5h1M34 131.5h1M35 131.5h1M36 131.5h1M37 131.5h1M38 131.5h1M39 131.5h1M40 131.5h1M44 131.5h1M47 131.5h1M48 131.5h1M49 131.5h1M50 131.5h1M51 131.5h1M54 131.5h1M66 131.5h1M70 131.5h1M71 131.5h1M72 131.5h1M73 131.5h1M75 131.5h1M76 131.5h1M78 131.5h1M79 131.5h1M81 131.5h1M84 131.5h1M85 131.5h1M88 131.5h1M89 131.5h1M92 131.5h1M93 131.5h1M94 131.5h1M95 131.5h1M98 131.5h1M100 131.5h1M102 131.5h1M104 131.5h1M109 131.5h1M110 131.5h1M112 131.5h1M113 131.5h1M114 131.5h1M116 131.5h1M117 131.5h1M118 131.5h1M119 131.5h1M120 131.5h1M121 131.5h1M122 131.5h1M123 131.5h1M124 131.5h1M125 131.5h1M126 131.5h1M127 131.5h1M128 131.5h1M129 131.5h1M130 131.5h1M131 131.5h1M132 131.5h1M134 131.5h1M135 131.5h1M137 131.5h1M141 131.5h1M142 131.5h1M143 131.5h1M144 131.5h1M145 131.5h1M147 131.5h1M148 131.5h1M149 131.5h1M150 131.5h1M151 131.5h1M152 131.5h1M155 131.5h1M156 131.5h1M157 131.5h1M158 131.5h1M160 131.5h1M161 131.5h1M163 131.5h1M165 131.5h1M167 131.5h1M170 131.5h1M172 131.5h1M173 131.5h1M174 131.5h1M175 131.5h1M176 131.5h1M178 131.5h1M181 131.5h1M182 131.5h1M184 131.5h1M185 131.5h1M187 131.5h1M190 131.5h1M192 131.5h1M193 131.5h1M195 131.5h1M196 131.5h1M197 131.5h1M200 131.5h1M202 131.5h1M204 131.5h1M207 131.5h1M208 131.5h1M210 131.5h1M211 131.5h1M214 131.5h1M215 131.5h1M216 131.5h1M1 132.5h1M4 132.5h1M5 132.5h1M7 132.5h1M9 132.5h1M11 132.5h1M12 132.5h1M14 132.5h1M16 132.5h1M18 132.5h1M23 132.5h1M31 132.5h1M34 132.5h1M38 132.5h1M41 132.5h1M44 132.5h1M46 132.5h1M47 132.5h1M48 132.5h1M49 132.5h1M55 132.5h1M59 132.5h1M60 132.5h1M61 132.5h1M63 132.5h1M66 132.5h1M67 132.5h1M69 132.5h1M70 132.5h1M71 132.5h1M72 132.5h1M76 132.5h1M78 132.5h1M79 132.5h1M86 132.5h1M88 132.5h1M89 132.5h1M90 132.5h1M91 132.5h1M92 132.5h1M94 132.5h1M95 132.5h1M98 132.5h1M99 132.5h1M100 132.5h1M102 132.5h1M103 132.5h1M104 132.5h1M107 132.5h1M109 132.5h1M112 132.5h1M113 132.5h1M120 132.5h1M124 132.5h1M126 132.5h1M127 132.5h1M128 132.5h1M129 132.5h1M131 132.5h1M132 132.5h1M136 132.5h1M138 132.5h1M140 132.5h1M141 132.5h1M144 132.5h1M145 132.5h1M147 132.5h1M148 132.5h1M149 132.5h1M150 132.5h1M152 132.5h1M153 132.5h1M157 132.5h1M158 132.5h1M159 132.5h1M160 132.5h1M161 132.5h1M163 132.5h1M164 132.5h1M165 132.5h1M167 132.5h1M168 132.5h1M171 132.5h1M173 132.5h1M177 132.5h1M178 132.5h1M179 132.5h1M181 132.5h1M185 132.5h1M190 132.5h1M192 132.5h1M194 132.5h1M196 132.5h1M199 132.5h1M201 132.5h1M202 132.5h1M204 132.5h1M205 132.5h1M207 132.5h1M208 132.5h1M210 132.5h1M212 132.5h1M214 132.5h1M216 132.5h1M0 133.5h1M3 133.5h1M6 133.5h1M8 133.5h1M17 133.5h1M19 133.5h1M24 133.5h1M29 133.5h1M31 133.5h1M33 133.5h1M34 133.5h1M35 133.5h1M39 133.5h1M43 133.5h1M44 133.5h1M45 133.5h1M46 133.5h1M47 133.5h1M48 133.5h1M51 133.5h1M58 133.5h1M59 133.5h1M62 133.5h1M63 133.5h1M66 133.5h1M67 133.5h1M68 133.5h1M71 133.5h1M74 133.5h1M75 133.5h1M76 133.5h1M77 133.5h1M78 133.5h1M79 133.5h1M83 133.5h1M84 133.5h1M86 133.5h1M88 133.5h1M89 133.5h1M91 133.5h1M93 133.5h1M94 133.5h1M95 133.5h1M97 133.5h1M98 133.5h1M99 133.5h1M100 133.5h1M101 133.5h1M102 133.5h1M104 133.5h1M106 133.5h1M108 133.5h1M109 133.5h1M113 133.5h1M114 133.5h1M116 133.5h1M117 133.5h1M119 133.5h1M126 133.5h1M127 133.5h1M128 133.5h1M130 133.5h1M131 133.5h1M132 133.5h1M135 133.5h1M140 133.5h1M142 133.5h1M143 133.5h1M145 133.5h1M146 133.5h1M150 133.5h1M153 133.5h1M154 133.5h1M155 133.5h1M157 133.5h1M161 133.5h1M164 133.5h1M165 133.5h1M167 133.5h1M170 133.5h1M172 133.5h1M174 133.5h1M185 133.5h1M186 133.5h1M188 133.5h1M194 133.5h1M195 133.5h1M196 133.5h1M203 133.5h1M204 133.5h1M210 133.5h1M211 133.5h1M216 133.5h1M3 134.5h1M4 134.5h1M5 134.5h1M7 134.5h1M9 134.5h1M11 134.5h1M14 134.5h1M15 134.5h1M29 134.5h1M32 134.5h1M33 134.5h1M40 134.5h1M42 134.5h1M45 134.5h1M47 134.5h1M49 134.5h1M51 134.5h1M56 134.5h1M59 134.5h1M60 134.5h1M62 134.5h1M63 134.5h1M64 134.5h1M70 134.5h1M71 134.5h1M72 134.5h1M73 134.5h1M74 134.5h1M77 134.5h1M78 134.5h1M79 134.5h1M86 134.5h1M87 134.5h1M88 134.5h1M90 134.5h1M94 134.5h1M95 134.5h1M98 134.5h1M100 134.5h1M103 134.5h1M104 134.5h1M117 134.5h1M126 134.5h1M129 134.5h1M131 134.5h1M136 134.5h1M138 134.5h1M140 134.5h1M141 134.5h1M143 134.5h1M157 134.5h1M159 134.5h1M160 134.5h1M161 134.5h1M165 134.5h1M167 134.5h1M168 134.5h1M171 134.5h1M172 134.5h1M179 134.5h1M180 134.5h1M186 134.5h1M188 134.5h1M189 134.5h1M193 134.5h1M195 134.5h1M197 134.5h1M200 134.5h1M204 134.5h1M207 134.5h1M209 134.5h1M210 134.5h1M211 134.5h1M212 134.5h1M214 134.5h1M0 135.5h1M6 135.5h1M11 135.5h1M19 135.5h1M24 135.5h1M25 135.5h1M26 135.5h1M28 135.5h1M30 135.5h1M33 135.5h1M36 135.5h1M42 135.5h1M44 135.5h1M55 135.5h1M56 135.5h1M57 135.5h1M58 135.5h1M60 135.5h1M65 135.5h1M66 135.5h1M72 135.5h1M84 135.5h1M88 135.5h1M99 135.5h1M101 135.5h1M108 135.5h1M110 135.5h1M111 135.5h1M113 135.5h1M116 135.5h1M121 135.5h1M125 135.5h1M131 135.5h1M132 135.5h1M136 135.5h1M138 135.5h1M143 135.5h1M148 135.5h1M152 135.5h1M153 135.5h1M155 135.5h1M157 135.5h1M158 135.5h1M159 135.5h1M161 135.5h1M165 135.5h1M166 135.5h1M174 135.5h1M175 135.5h1M184 135.5h1M185 135.5h1M186 135.5h1M191 135.5h1M196 135.5h1M206 135.5h1M207 135.5h1M17 136.5h1M20 136.5h1M24 136.5h1M39 136.5h1M42 136.5h1M51 136.5h1M56 136.5h1M65 136.5h1M71 136.5h1M101 136.5h1M108 136.5h1M110 136.5h1M117 136.5h1M122 136.5h1M124 136.5h1M127 136.5h1M131 136.5h1M136 136.5h1M144 136.5h1M155 136.5h1M179 136.5h1M186 136.5h1M190 136.5h1M192 136.5h1M194 136.5h1M195 136.5h1M210 136.5h1M213 136.5h1M56 137.5h1M91 137.5h1M95 137.5h1M101 137.5h1M103 137.5h1M105 137.5h1M112 137.5h1M127 137.5h1M129 137.5h1M131 137.5h1M146 137.5h1M153 137.5h1M159 137.5h1M164 137.5h1M169 137.5h1M188 137.5h1M198 137.5h1M24 138.5h1M37 138.5h1M47 138.5h1M70 138.5h1M98 138.5h1M99 138.5h1M128 138.5h1M138 138.5h1M153 138.5h1M161 138.5h1M163 138.5h1M165 138.5h1M166 138.5h1M179 138.5h1M207 138.5h1" stroke="#00cfc4"/><path d="M106 27.5h1M106 28.5h1M109 29.5h1M106 30.5h1M110 34.5h1M101 35.5h1M113 35.5h1M104 38.5h1M104 39.5h1M105 39.5h1M99 40.5h1M105 40.5h1M110 41.5h1M115 41.5h1M101 42.5h1M107 42.5h1M113 43.5h1M116 43.5h1M99 45.5h1M100 45.5h1M113 46.5h1M100 47.5h1M104 47.5h1M116 48.5h1M99 50.5h1M113 50.5h1M99 51.5h1M109 51.5h1M115 51.5h1M101 52.5h1M109 52.5h1M105 53.5h1M113 53.5h1M106 54.5h1M109 54.5h1M113 54.5h1M100 55.5h1M109 55.5h1M106 56.5h1M104 57.5h1M113 57.5h1M101 58.5h1M115 59.5h1M105 60.5h1M108 60.5h1M118 60.5h1M104 61.5h1M105 61.5h1M109 61.5h1M118 61.5h1M96 63.5h1M105 63.5h1M95 64.5h1M110 64.5h1M106 66.5h1M110 67.5h1M104 68.5h1M115 68.5h1M118 68.5h1M106 69.5h1M94 70.5h1M100 71.5h1M105 71.5h1M100 72.5h1M106 72.5h1M109 72.5h1M115 72.5h1M118 72.5h1M100 73.5h1M95 74.5h1M104 74.5h1M90 75.5h1M104 75.5h1M106 76.5h1M122 76.5h1M105 77.5h1M99 78.5h1M110 78.5h1M120 78.5h1M121 78.5h1M101 79.5h1M113 79.5h1M93 80.5h1M96 80.5h1M113 80.5h1M115 80.5h1M0 87.5h1M4 87.5h1M44 87.5h1M151 87.5h1M157 87.5h1M164 87.5h1M171 87.5h1M195 87.5h1M206 87.5h1M108 118.5h1M108 120.5h1M107 122.5h1M107 124.5h1M107 126.5h1M108 126.5h1M107 127.5h1M6 128.5h1M16 129.5h1M34 129.5h1M68 129.5h1M93 129.5h1M133 129.5h1M152 129.5h1M203 129.5h1M6 130.5h1M13 130.5h1M17 130.5h1M23 130.5h1M28 130.5h1M36 130.5h1M44 130.5h1M45 130.5h1M70 130.5h1M84 130.5h1M100 130.5h1M107 130.5h1M108 130.5h1M142 130.5h1M155 130.5h1M162 130.5h1M168 130.5h1M171 130.5h1M184 130.5h1M191 130.5h1M208 130.5h1M213 130.5h1M10 131.5h1M13 131.5h1M27 131.5h1M33 131.5h1M56 131.5h1M57 131.5h1M61 131.5h1M63 131.5h1M67 131.5h1M68 131.5h1M74 131.5h1M77 131.5h1M82 131.5h1M103 131.5h1M108 131.5h1M115 131.5h1M133 131.5h1M146 131.5h1M154 131.5h1M159 131.5h1M171 131.5h1M177 131.5h1M179 131.5h1M183 131.5h1M186 131.5h1M198 131.5h1M203 131.5h1M206 131.5h1M209 131.5h1M212 131.5h1M213 131.5h1M0 132.5h1M2 132.5h1M3 132.5h1M6 132.5h1M8 132.5h1M10 132.5h1M15 132.5h1M17 132.5h1M24 132.5h1M27 132.5h1M29 132.5h1M39 132.5h1M40 132.5h1M42 132.5h1M43 132.5h1M54 132.5h1M56 132.5h1M62 132.5h1M65 132.5h1M74 132.5h1M77 132.5h1M81 132.5h1M83 132.5h1M85 132.5h1M87 132.5h1M97 132.5h1M106 132.5h1M119 132.5h1M121 132.5h1M122 132.5h1M125 132.5h1M133 132.5h1M139 132.5h1M143 132.5h1M146 132.5h1M151 132.5h1M169 132.5h1M175 132.5h1M184 132.5h1M186 132.5h1M187 132.5h1M189 132.5h1M193 132.5h1M197 132.5h1M209 132.5h1M4 133.5h1M5 133.5h1M7 133.5h1M9 133.5h1M10 133.5h1M15 133.5h1M18 133.5h1M20 133.5h1M23 133.5h1M27 133.5h1M36 133.5h1M38 133.5h1M40 133.5h1M42 133.5h1M50 133.5h1M52 133.5h1M54 133.5h1M55 133.5h1M57 133.5h1M65 133.5h1M70 133.5h1M72 133.5h1M82 133.5h1M87 133.5h1M90 133.5h1M92 133.5h1M103 133.5h1M105 133.5h1M111 133.5h1M115 133.5h1M121 133.5h1M123 133.5h1M139 133.5h1M141 133.5h1M147 133.5h1M163 133.5h1M166 133.5h1M168 133.5h1M171 133.5h1M173 133.5h1M178 133.5h1M179 133.5h1M181 133.5h1M183 133.5h1M189 133.5h1M193 133.5h1M200 133.5h1M202 133.5h1M206 133.5h1M207 133.5h1M208 133.5h1M212 133.5h1M213 133.5h1M214 133.5h1M215 133.5h1M1 134.5h1M12 134.5h1M21 134.5h1M27 134.5h1M28 134.5h1M48 134.5h1M50 134.5h1M55 134.5h1M65 134.5h1M67 134.5h1M76 134.5h1M81 134.5h1M82 134.5h1M89 134.5h1M97 134.5h1M101 134.5h1M102 134.5h1M106 134.5h1M107 134.5h1M110 134.5h1M111 134.5h1M114 134.5h1M118 134.5h1M119 134.5h1M132 134.5h1M137 134.5h1M139 134.5h1M146 134.5h1M148 134.5h1M150 134.5h1M155 134.5h1M178 134.5h1M184 134.5h1M190 134.5h1M191 134.5h1M196 134.5h1M198 134.5h1M201 134.5h1M208 134.5h1M213 134.5h1M216 134.5h1M1 135.5h1M3 135.5h1M5 135.5h1M9 135.5h1M12 135.5h1M15 135.5h1M37 135.5h1M43 135.5h1M49 135.5h1M53 135.5h1M59 135.5h1M62 135.5h1M71 135.5h1M73 135.5h1M76 135.5h1M82 135.5h1M83 135.5h1M91 135.5h1M97 135.5h1M102 135.5h1M115 135.5h1M118 135.5h1M122 135.5h1M126 135.5h1M144 135.5h1M145 135.5h1M162 135.5h1M168 135.5h1M169 135.5h1M172 135.5h1M173 135.5h1M188 135.5h1M197 135.5h1M203 135.5h1M208 135.5h1M210 135.5h1M213 135.5h1M214 135.5h1M4 136.5h1M11 136.5h1M22 136.5h1M33 136.5h1M37 136.5h1M38 136.5h1M43 136.5h1M44 136.5h1M46 136.5h1M48 136.5h1M49 136.5h1M50 136.5h1M62 136.5h1M70 136.5h1M73 136.5h1M74 136.5h1M78 136.5h1M102 136.5h1M103 136.5h1M104 136.5h1M106 136.5h1M107 136.5h1M113 136.5h1M114 136.5h1M116 136.5h1M129 136.5h1M130 136.5h1M133 136.5h1M134 136.5h1M135 136.5h1M140 136.5h1M149 136.5h1M163 136.5h1M164 136.5h1M166 136.5h1M167 136.5h1M168 136.5h1M174 136.5h1M178 136.5h1M181 136.5h1M189 136.5h1M191 136.5h1M205 136.5h1M206 136.5h1M216 136.5h1M1 137.5h1M2 137.5h1M5 137.5h1M14 137.5h1M17 137.5h1M19 137.5h1M25 137.5h1M26 137.5h1M28 137.5h1M46 137.5h1M50 137.5h1M52 137.5h1M63 137.5h1M66 137.5h1M72 137.5h1M75 137.5h1M81 137.5h1M82 137.5h1M104 137.5h1M108 137.5h1M111 137.5h1M114 137.5h1M116 137.5h1M118 137.5h1M142 137.5h1M148 137.5h1M171 137.5h1M185 137.5h1M206 137.5h1M210 137.5h1M214 137.5h1M2 138.5h1M3 138.5h1M7 138.5h1M14 138.5h1M25 138.5h1M29 138.5h1M30 138.5h1M32 138.5h1M42 138.5h1M46 138.5h1M52 138.5h1M54 138.5h1M56 138.5h1M73 138.5h1M82 138.5h1M92 138.5h1M97 138.5h1M106 138.5h1M107 138.5h1M117 138.5h1M119 138.5h1M124 138.5h1M125 138.5h1M126 138.5h1M129 138.5h1M137 138.5h1M143 138.5h1M154 138.5h1M169 138.5h1M172 138.5h1M178 138.5h1M185 138.5h1M187 138.5h1M188 138.5h1M193 138.5h1M196 138.5h1M203 138.5h1M205 138.5h1M208 138.5h1M216 138.5h1M7 139.5h1M17 139.5h1M29 139.5h1M31 139.5h1M33 139.5h1M50 139.5h1M51 139.5h1M52 139.5h1M68 139.5h1M70 139.5h1M72 139.5h1M76 139.5h1M77 139.5h1M101 139.5h1M119 139.5h1M133 139.5h1M136 139.5h1M154 139.5h1M158 139.5h1M164 139.5h1M168 139.5h1M172 139.5h1M183 139.5h1M184 139.5h1M189 139.5h1M204 139.5h1M18 140.5h1M27 140.5h1M50 140.5h1M54 140.5h1M60 140.5h1M75 140.5h1M84 140.5h1M105 140.5h1M111 140.5h1M118 140.5h1M134 140.5h1M155 140.5h1M168 140.5h1M172 140.5h1M186 140.5h1M188 140.5h1M204 140.5h1M214 140.5h1M42 141.5h1M64 141.5h1M86 141.5h1M134 141.5h1M141 141.5h1M169 141.5h1M188 141.5h1M209 141.5h1M164 142.5h1M186 142.5h1M204 142.5h1" stroke="#00c8eb"/><path d="M108 28.5h1M107 32.5h1M101 36.5h1M100 37.5h1M101 37.5h1M104 37.5h1M113 37.5h1M114 37.5h1M109 38.5h1M113 38.5h1M101 39.5h1M100 40.5h1M109 40.5h1M110 40.5h1M104 41.5h1M113 41.5h1M99 42.5h1M110 42.5h1M115 42.5h1M114 43.5h1M115 43.5h1M98 44.5h1M99 44.5h1M114 44.5h1M115 44.5h1M113 45.5h1M100 46.5h1M104 46.5h1M116 46.5h1M101 47.5h1M115 47.5h1M113 48.5h1M114 48.5h1M113 49.5h1M116 49.5h1M114 50.5h1M113 52.5h1M106 53.5h1M109 53.5h1M101 55.5h1M113 56.5h1M106 57.5h1M113 58.5h1M96 59.5h1M118 59.5h1M96 61.5h1M99 61.5h1M106 61.5h1M104 62.5h1M115 62.5h1M119 62.5h1M118 63.5h1M100 64.5h1M105 64.5h1M106 65.5h1M110 65.5h1M96 66.5h1M99 66.5h1M104 66.5h1M99 67.5h1M99 68.5h1M110 70.5h1M114 70.5h1M115 70.5h1M94 71.5h1M95 72.5h1M99 72.5h1M104 72.5h1M94 73.5h1M106 73.5h1M120 73.5h1M94 74.5h1M106 75.5h1M104 76.5h1M109 76.5h1M94 78.5h1M95 78.5h1M106 78.5h1M94 79.5h1M95 79.5h1M94 80.5h1M109 80.5h1M119 80.5h1M120 80.5h1M20 87.5h1M64 87.5h1M179 87.5h1M181 87.5h1M25 132.5h1M45 132.5h1M57 132.5h1M155 132.5h1M162 132.5h1M188 132.5h1M198 132.5h1M16 133.5h1M25 133.5h1M26 133.5h1M30 133.5h1M37 133.5h1M56 133.5h1M61 133.5h1M64 133.5h1M73 133.5h1M125 133.5h1M133 133.5h1M152 133.5h1M162 133.5h1M177 133.5h1M182 133.5h1M199 133.5h1M205 133.5h1M209 133.5h1M6 134.5h1M10 134.5h1M16 134.5h1M17 134.5h1M18 134.5h1M19 134.5h1M20 134.5h1M24 134.5h1M26 134.5h1M35 134.5h1M43 134.5h1M46 134.5h1M52 134.5h1M57 134.5h1M75 134.5h1M80 134.5h1M85 134.5h1M96 134.5h1M122 134.5h1M142 134.5h1M144 134.5h1M145 134.5h1M147 134.5h1M158 134.5h1M166 134.5h1M169 134.5h1M170 134.5h1M187 134.5h1M199 134.5h1M203 134.5h1M206 134.5h1M4 135.5h1M14 135.5h1M17 135.5h1M21 135.5h1M23 135.5h1M27 135.5h1M32 135.5h1M34 135.5h1M38 135.5h1M40 135.5h1M41 135.5h1M48 135.5h1M67 135.5h1M74 135.5h1M77 135.5h1M80 135.5h1M85 135.5h1M86 135.5h1M89 135.5h1M94 135.5h1M95 135.5h1M96 135.5h1M98 135.5h1M103 135.5h1M106 135.5h1M107 135.5h1M114 135.5h1M117 135.5h1M130 135.5h1M133 135.5h1M134 135.5h1M135 135.5h1M140 135.5h1M171 135.5h1M177 135.5h1M179 135.5h1M180 135.5h1M183 135.5h1M189 135.5h1M190 135.5h1M192 135.5h1M195 135.5h1M200 135.5h1M202 135.5h1M212 135.5h1M216 135.5h1M2 136.5h1M8 136.5h1M13 136.5h1M18 136.5h1M19 136.5h1M23 136.5h1M32 136.5h1M40 136.5h1M54 136.5h1M59 136.5h1M63 136.5h1M81 136.5h1M86 136.5h1M88 136.5h1M90 136.5h1M92 136.5h1M93 136.5h1M94 136.5h1M95 136.5h1M97 136.5h1M123 136.5h1M125 136.5h1M126 136.5h1M138 136.5h1M139 136.5h1M146 136.5h1M153 136.5h1M158 136.5h1M159 136.5h1M160 136.5h1M161 136.5h1M165 136.5h1M173 136.5h1M188 136.5h1M198 136.5h1M199 136.5h1M214 136.5h1M0 137.5h1M3 137.5h1M7 137.5h1M9 137.5h1M18 137.5h1M22 137.5h1M23 137.5h1M31 137.5h1M36 137.5h1M41 137.5h1M44 137.5h1M54 137.5h1M59 137.5h1M68 137.5h1M70 137.5h1M79 137.5h1M94 137.5h1M97 137.5h1M99 137.5h1M106 137.5h1M110 137.5h1M120 137.5h1M126 137.5h1M132 137.5h1M136 137.5h1M140 137.5h1M144 137.5h1M147 137.5h1M151 137.5h1M157 137.5h1M163 137.5h1M165 137.5h1M166 137.5h1M170 137.5h1M177 137.5h1M186 137.5h1M192 137.5h1M197 137.5h1M208 137.5h1M213 137.5h1M215 137.5h1M1 138.5h1M9 138.5h1M17 138.5h1M19 138.5h1M35 138.5h1M49 138.5h1M59 138.5h1M74 138.5h1M76 138.5h1M77 138.5h1M80 138.5h1M85 138.5h1M89 138.5h1M91 138.5h1M104 138.5h1M113 138.5h1M118 138.5h1M120 138.5h1M127 138.5h1M131 138.5h1M147 138.5h1M148 138.5h1M156 138.5h1M160 138.5h1M164 138.5h1M182 138.5h1M184 138.5h1M201 138.5h1M211 138.5h1M2 139.5h1M18 139.5h1M19 139.5h1M20 139.5h1M25 139.5h1M30 139.5h1M35 139.5h1M40 139.5h1M42 139.5h1M43 139.5h1M59 139.5h1M60 139.5h1M69 139.5h1M73 139.5h1M75 139.5h1M81 139.5h1M91 139.5h1M93 139.5h1M98 139.5h1M106 139.5h1M112 139.5h1M118 139.5h1M125 139.5h1M128 139.5h1M132 139.5h1M143 139.5h1M153 139.5h1M162 139.5h1M171 139.5h1M173 139.5h1M175 139.5h1M179 139.5h1M192 139.5h1M205 139.5h1M210 139.5h1M214 139.5h1M216 139.5h1M5 140.5h1M8 140.5h1M9 140.5h1M15 140.5h1M29 140.5h1M32 140.5h1M37 140.5h1M38 140.5h1M64 140.5h1M65 140.5h1M68 140.5h1M71 140.5h1M103 140.5h1M113 140.5h1M122 140.5h1M130 140.5h1M132 140.5h1M133 140.5h1M141 140.5h1M142 140.5h1M143 140.5h1M149 140.5h1M150 140.5h1M164 140.5h1M165 140.5h1M166 140.5h1M181 140.5h1M182 140.5h1M185 140.5h1M189 140.5h1M206 140.5h1M209 140.5h1M216 140.5h1M4 141.5h1M8 141.5h1M26 141.5h1M29 141.5h1M38 141.5h1M54 141.5h1M59 141.5h1M62 141.5h1M79 141.5h1M104 141.5h1M109 141.5h1M112 141.5h1M114 141.5h1M118 141.5h1M119 141.5h1M122 141.5h1M123 141.5h1M130 141.5h1M140 141.5h1M142 141.5h1M144 141.5h1M155 141.5h1M170 141.5h1M171 141.5h1M178 141.5h1M198 141.5h1M207 141.5h1M212 141.5h1M14 142.5h1M21 142.5h1M24 142.5h1M26 142.5h1M28 142.5h1M29 142.5h1M31 142.5h1M38 142.5h1M43 142.5h1M58 142.5h1M69 142.5h1M84 142.5h1M97 142.5h1M100 142.5h1M115 142.5h1M126 142.5h1M131 142.5h1M136 142.5h1M138 142.5h1M140 142.5h1M148 142.5h1M150 142.5h1M161 142.5h1M188 142.5h1M190 142.5h1M208 142.5h1M38 143.5h1M47 143.5h1M54 143.5h1M123 143.5h1M140 143.5h1M150 143.5h1M190 143.5h1M193 143.5h1M207 143.5h1M3 144.5h1M9 144.5h1M25 144.5h1M44 144.5h1M54 144.5h1M82 144.5h1M90 144.5h1M140 144.5h1M164 144.5h1M196 144.5h1M201 144.5h1M206 144.5h1M207 144.5h1M129 145.5h1" stroke="#00a8e6"/><path d="M105 36.5h1M109 37.5h1M100 38.5h1M101 38.5h1M105 38.5h1M114 38.5h1M113 39.5h1M114 39.5h1M114 40.5h1M104 42.5h1M99 43.5h1M100 43.5h1M110 43.5h1M104 44.5h1M101 45.5h1M101 46.5h1M114 46.5h1M115 46.5h1M99 47.5h1M98 49.5h1M115 50.5h1M100 53.5h1M105 57.5h1M109 57.5h1M105 58.5h1M105 59.5h1M104 60.5h1M109 60.5h1M110 61.5h1M105 62.5h1M106 62.5h1M115 63.5h1M99 65.5h1M100 66.5h1M96 67.5h1M96 68.5h1M100 68.5h1M109 68.5h1M100 69.5h1M109 69.5h1M114 69.5h1M118 69.5h1M105 70.5h1M109 70.5h1M120 70.5h1M106 71.5h1M109 71.5h1M105 72.5h1M99 74.5h1M120 74.5h1M110 75.5h1M94 77.5h1M109 77.5h1M120 77.5h1M92 79.5h1M104 79.5h1M119 79.5h1M121 79.5h1M104 80.5h1M82 81.5h1M82 82.5h1M202 86.5h1M215 86.5h1M5 87.5h1M155 87.5h1M159 87.5h1M36 134.5h1M54 135.5h1M68 135.5h1M93 135.5h1M119 135.5h1M142 135.5h1M181 135.5h1M5 136.5h1M7 136.5h1M25 136.5h1M26 136.5h1M29 136.5h1M45 136.5h1M57 136.5h1M68 136.5h1M77 136.5h1M80 136.5h1M89 136.5h1M100 136.5h1M121 136.5h1M169 136.5h1M171 136.5h1M183 136.5h1M185 136.5h1M193 136.5h1M201 136.5h1M4 137.5h1M24 137.5h1M27 137.5h1M29 137.5h1M30 137.5h1M35 137.5h1M42 137.5h1M48 137.5h1M58 137.5h1M71 137.5h1M77 137.5h1M83 137.5h1M100 137.5h1M107 137.5h1M122 137.5h1M124 137.5h1M128 137.5h1M135 137.5h1M139 137.5h1M150 137.5h1M155 137.5h1M160 137.5h1M161 137.5h1M167 137.5h1M172 137.5h1M174 137.5h1M175 137.5h1M178 137.5h1M202 137.5h1M203 137.5h1M4 138.5h1M15 138.5h1M21 138.5h1M26 138.5h1M27 138.5h1M28 138.5h1M34 138.5h1M39 138.5h1M48 138.5h1M51 138.5h1M67 138.5h1M72 138.5h1M78 138.5h1M96 138.5h1M100 138.5h1M101 138.5h1M103 138.5h1M105 138.5h1M111 138.5h1M116 138.5h1M121 138.5h1M123 138.5h1M130 138.5h1M134 138.5h1M141 138.5h1M144 138.5h1M157 138.5h1M159 138.5h1M168 138.5h1M170 138.5h1M176 138.5h1M199 138.5h1M210 138.5h1M213 138.5h1M3 139.5h1M5 139.5h1M12 139.5h1M36 139.5h1M39 139.5h1M47 139.5h1M49 139.5h1M57 139.5h1M86 139.5h1M88 139.5h1M90 139.5h1M110 139.5h1M121 139.5h1M126 139.5h1M129 139.5h1M130 139.5h1M141 139.5h1M145 139.5h1M152 139.5h1M166 139.5h1M181 139.5h1M185 139.5h1M187 139.5h1M195 139.5h1M197 139.5h1M203 139.5h1M206 139.5h1M207 139.5h1M3 140.5h1M13 140.5h1M20 140.5h1M22 140.5h1M31 140.5h1M33 140.5h1M34 140.5h1M35 140.5h1M36 140.5h1M77 140.5h1M83 140.5h1M90 140.5h1M93 140.5h1M100 140.5h1M101 140.5h1M144 140.5h1M153 140.5h1M157 140.5h1M159 140.5h1M178 140.5h1M190 140.5h1M191 140.5h1M192 140.5h1M194 140.5h1M198 140.5h1M203 140.5h1M210 140.5h1M215 140.5h1M5 141.5h1M12 141.5h1M28 141.5h1M30 141.5h1M44 141.5h1M61 141.5h1M66 141.5h1M69 141.5h1M72 141.5h1M75 141.5h1M76 141.5h1M90 141.5h1M93 141.5h1M99 141.5h1M132 141.5h1M136 141.5h1M166 141.5h1M174 141.5h1M180 141.5h1M211 141.5h1M216 141.5h1M6 142.5h1M11 142.5h1M22 142.5h1M27 142.5h1M32 142.5h1M44 142.5h1M55 142.5h1M75 142.5h1M79 142.5h1M82 142.5h1M86 142.5h1M106 142.5h1M114 142.5h1M119 142.5h1M123 142.5h1M133 142.5h1M167 142.5h1M173 142.5h1M179 142.5h1M181 142.5h1M199 142.5h1M2 143.5h1M9 143.5h1M22 143.5h1M27 143.5h1M31 143.5h1M34 143.5h1M39 143.5h1M42 143.5h1M49 143.5h1M53 143.5h1M68 143.5h1M78 143.5h1M80 143.5h1M82 143.5h1M83 143.5h1M90 143.5h1M93 143.5h1M104 143.5h1M107 143.5h1M121 143.5h1M126 143.5h1M134 143.5h1M135 143.5h1M153 143.5h1M159 143.5h1M174 143.5h1M182 143.5h1M191 143.5h1M212 143.5h1M5 144.5h1M24 144.5h1M35 144.5h1M63 144.5h1M65 144.5h1M66 144.5h1M79 144.5h1M110 144.5h1M112 144.5h1M117 144.5h1M121 144.5h1M125 144.5h1M127 144.5h1M134 144.5h1M141 144.5h1M146 144.5h1M148 144.5h1M150 144.5h1M151 144.5h1M156 144.5h1M174 144.5h1M192 144.5h1M195 144.5h1M211 144.5h1M5 145.5h1M22 145.5h1M25 145.5h1M38 145.5h1M39 145.5h1M44 145.5h1M47 145.5h1M48 145.5h1M64 145.5h1M65 145.5h1M67 145.5h1M82 145.5h1M88 145.5h1M91 145.5h1M100 145.5h1M101 145.5h1M102 145.5h1M104 145.5h1M106 145.5h1M125 145.5h1M126 145.5h1M141 145.5h1M148 145.5h1M150 145.5h1M154 145.5h1M161 145.5h1M168 145.5h1M172 145.5h1M192 145.5h1M198 145.5h1M2 146.5h1M21 146.5h1M53 146.5h1M54 146.5h1M59 146.5h1M69 146.5h1M91 146.5h1M96 146.5h1M113 146.5h1M115 146.5h1M152 146.5h1M158 146.5h1M164 146.5h1M166 146.5h1M180 146.5h1M181 146.5h1M186 146.5h1M191 146.5h1M198 146.5h1M47 147.5h1M57 147.5h1M144 147.5h1M146 147.5h1M147 147.5h1M188 147.5h1M211 147.5h1M7 148.5h1M165 148.5h1" stroke="#0089e2"/><path d="M80 82.5h1M134 84.5h1M34 86.5h1M46 86.5h1M70 87.5h1M118 143.5h1M185 144.5h1M194 144.5h1M209 144.5h1M15 145.5h1M17 145.5h1M60 145.5h1M96 145.5h1M107 145.5h1M147 145.5h1M178 145.5h1M186 145.5h1M3 146.5h1M20 146.5h1M25 146.5h1M48 146.5h1M80 146.5h1M86 146.5h1M104 146.5h1M117 146.5h1M127 146.5h1M131 146.5h1M133 146.5h1M137 146.5h1M144 146.5h1M153 146.5h1M168 146.5h1M176 146.5h1M178 146.5h1M184 146.5h1M187 146.5h1M204 146.5h1M11 147.5h1M16 147.5h1M27 147.5h1M38 147.5h1M52 147.5h1M71 147.5h1M103 147.5h1M109 147.5h1M112 147.5h1M119 147.5h1M124 147.5h1M128 147.5h1M133 147.5h1M169 147.5h1M177 147.5h1M186 147.5h1M190 147.5h1M191 147.5h1M195 147.5h1M199 147.5h1M203 147.5h1M205 147.5h1M4 148.5h1M24 148.5h1M25 148.5h1M45 148.5h1M48 148.5h1M62 148.5h1M63 148.5h1M70 148.5h1M72 148.5h1M103 148.5h1M105 148.5h1M109 148.5h1M117 148.5h1M142 148.5h1M146 148.5h1M162 148.5h1M183 148.5h1M184 148.5h1M198 148.5h1M212 148.5h1" stroke="#0037aa"/><path d="M81 82.5h1M23 86.5h1M53 86.5h1M27 87.5h1M71 87.5h1M145 87.5h1M146 87.5h1M177 87.5h1M203 87.5h1M204 87.5h1M107 116.5h1M107 117.5h1M45 137.5h1M69 137.5h1M187 137.5h1M33 138.5h1M36 138.5h1M53 138.5h1M57 138.5h1M63 138.5h1M88 138.5h1M155 138.5h1M0 139.5h1M4 139.5h1M6 139.5h1M8 139.5h1M9 139.5h1M10 139.5h1M16 139.5h1M22 139.5h1M28 139.5h1M45 139.5h1M48 139.5h1M53 139.5h1M56 139.5h1M63 139.5h1M79 139.5h1M92 139.5h1M124 139.5h1M142 139.5h1M155 139.5h1M160 139.5h1M169 139.5h1M194 139.5h1M196 139.5h1M201 139.5h1M208 139.5h1M215 139.5h1M0 140.5h1M2 140.5h1M10 140.5h1M12 140.5h1M23 140.5h1M48 140.5h1M53 140.5h1M57 140.5h1M58 140.5h1M59 140.5h1M62 140.5h1M67 140.5h1M74 140.5h1M80 140.5h1M89 140.5h1M91 140.5h1M97 140.5h1M102 140.5h1M104 140.5h1M116 140.5h1M123 140.5h1M124 140.5h1M125 140.5h1M127 140.5h1M128 140.5h1M146 140.5h1M148 140.5h1M154 140.5h1M163 140.5h1M174 140.5h1M196 140.5h1M211 140.5h1M3 141.5h1M11 141.5h1M13 141.5h1M14 141.5h1M19 141.5h1M23 141.5h1M39 141.5h1M43 141.5h1M45 141.5h1M50 141.5h1M51 141.5h1M58 141.5h1M67 141.5h1M78 141.5h1M92 141.5h1M94 141.5h1M96 141.5h1M98 141.5h1M100 141.5h1M126 141.5h1M128 141.5h1M133 141.5h1M138 141.5h1M145 141.5h1M160 141.5h1M162 141.5h1M165 141.5h1M168 141.5h1M175 141.5h1M185 141.5h1M199 141.5h1M202 141.5h1M206 141.5h1M210 141.5h1M23 142.5h1M50 142.5h1M51 142.5h1M56 142.5h1M68 142.5h1M83 142.5h1M88 142.5h1M89 142.5h1M93 142.5h1M105 142.5h1M151 142.5h1M154 142.5h1M157 142.5h1M159 142.5h1M160 142.5h1M170 142.5h1M177 142.5h1M203 142.5h1M4 143.5h1M8 143.5h1M18 143.5h1M40 143.5h1M45 143.5h1M56 143.5h1M58 143.5h1M59 143.5h1M65 143.5h1M73 143.5h1M74 143.5h1M77 143.5h1M79 143.5h1M84 143.5h1M92 143.5h1M96 143.5h1M101 143.5h1M102 143.5h1M110 143.5h1M112 143.5h1M114 143.5h1M125 143.5h1M130 143.5h1M144 143.5h1M179 143.5h1M184 143.5h1M192 143.5h1M198 143.5h1M201 143.5h1M0 144.5h1M2 144.5h1M17 144.5h1M29 144.5h1M74 144.5h1M81 144.5h1M87 144.5h1M94 144.5h1M96 144.5h1M109 144.5h1M135 144.5h1M138 144.5h1M145 144.5h1M157 144.5h1M159 144.5h1M169 144.5h1M184 144.5h1M203 144.5h1M205 144.5h1M1 145.5h1M26 145.5h1M35 145.5h1M55 145.5h1M89 145.5h1M115 145.5h1M120 145.5h1M123 145.5h1M133 145.5h1M138 145.5h1M142 145.5h1M143 145.5h1M149 145.5h1M153 145.5h1M157 145.5h1M159 145.5h1M169 145.5h1M175 145.5h1M177 145.5h1M188 145.5h1M201 145.5h1M207 145.5h1M0 146.5h1M8 146.5h1M19 146.5h1M37 146.5h1M49 146.5h1M52 146.5h1M55 146.5h1M77 146.5h1M97 146.5h1M101 146.5h1M109 146.5h1M124 146.5h1M141 146.5h1M142 146.5h1M179 146.5h1M193 146.5h1M194 146.5h1M195 146.5h1M209 146.5h1M216 146.5h1M2 147.5h1M3 147.5h1M18 147.5h1M24 147.5h1M29 147.5h1M63 147.5h1M74 147.5h1M79 147.5h1M80 147.5h1M88 147.5h1M101 147.5h1M102 147.5h1M123 147.5h1M150 147.5h1M164 147.5h1M171 147.5h1M194 147.5h1M197 147.5h1M198 147.5h1M204 147.5h1M5 148.5h1M26 148.5h1M36 148.5h1M75 148.5h1M90 148.5h1M132 148.5h1M137 148.5h1M150 148.5h1M177 148.5h1M180 148.5h1M188 148.5h1M192 148.5h1M205 148.5h1" stroke="#0069de"/><path d="M134 82.5h1M116 147.5h1M21 148.5h1M52 148.5h1M116 148.5h1M125 148.5h1M174 148.5h1" stroke="#001f88"/><path d="M133 85.5h1M30 86.5h1M36 86.5h1M63 86.5h1M141 86.5h1M174 86.5h1M19 87.5h1M186 87.5h1M193 87.5h1M88 140.5h1M99 140.5h1M17 141.5h1M63 141.5h1M89 141.5h1M115 141.5h1M154 141.5h1M215 141.5h1M35 142.5h1M36 142.5h1M37 142.5h1M39 142.5h1M61 142.5h1M67 142.5h1M70 142.5h1M71 142.5h1M72 142.5h1M74 142.5h1M78 142.5h1M94 142.5h1M103 142.5h1M109 142.5h1M127 142.5h1M128 142.5h1M132 142.5h1M139 142.5h1M175 142.5h1M198 142.5h1M201 142.5h1M29 143.5h1M37 143.5h1M41 143.5h1M52 143.5h1M60 143.5h1M62 143.5h1M75 143.5h1M88 143.5h1M91 143.5h1M103 143.5h1M115 143.5h1M128 143.5h1M139 143.5h1M142 143.5h1M160 143.5h1M162 143.5h1M176 143.5h1M187 143.5h1M195 143.5h1M196 143.5h1M202 143.5h1M8 144.5h1M15 144.5h1M20 144.5h1M28 144.5h1M31 144.5h1M32 144.5h1M78 144.5h1M92 144.5h1M93 144.5h1M106 144.5h1M111 144.5h1M113 144.5h1M115 144.5h1M118 144.5h1M120 144.5h1M124 144.5h1M131 144.5h1M136 144.5h1M139 144.5h1M161 144.5h1M167 144.5h1M170 144.5h1M171 144.5h1M197 144.5h1M199 144.5h1M213 144.5h1M216 144.5h1M2 145.5h1M12 145.5h1M24 145.5h1M27 145.5h1M53 145.5h1M58 145.5h1M73 145.5h1M80 145.5h1M90 145.5h1M94 145.5h1M118 145.5h1M130 145.5h1M131 145.5h1M155 145.5h1M163 145.5h1M179 145.5h1M180 145.5h1M182 145.5h1M199 145.5h1M210 145.5h1M213 145.5h1M216 145.5h1M6 146.5h1M16 146.5h1M32 146.5h1M35 146.5h1M40 146.5h1M73 146.5h1M74 146.5h1M75 146.5h1M78 146.5h1M82 146.5h1M106 146.5h1M130 146.5h1M132 146.5h1M140 146.5h1M143 146.5h1M148 146.5h1M161 146.5h1M197 146.5h1M202 146.5h1M205 146.5h1M206 146.5h1M4 147.5h1M43 147.5h1M50 147.5h1M54 147.5h1M59 147.5h1M69 147.5h1M143 147.5h1M148 147.5h1M149 147.5h1M154 147.5h1M158 147.5h1M159 147.5h1M166 147.5h1M209 147.5h1M14 148.5h1M30 148.5h1M53 148.5h1M77 148.5h1M102 148.5h1M104 148.5h1M106 148.5h1M111 148.5h1M114 148.5h1M115 148.5h1M129 148.5h1M135 148.5h1M139 148.5h1M149 148.5h1M154 148.5h1M156 148.5h1M163 148.5h1M176 148.5h1M193 148.5h1M195 148.5h1M213 148.5h1" stroke="#004ecb"/><path d="M51 94.5h1M57 94.5h1M76 94.5h1M141 94.5h1M142 94.5h1M178 94.5h1M11 95.5h1M13 95.5h1M19 95.5h1M35 95.5h1M50 95.5h1M78 95.5h1M174 95.5h1M23 96.5h1M28 96.5h1M28 96.5h1M69 96.5h1M156 96.5h1M160 96.5h1M164 96.5h1M182 96.5h1M190 96.5h1M207 96.5h1M36 97.5h1M59 97.5h1M136 97.5h1M160 97.5h1M151 98.5h1M168 98.5h1M51 99.5h1M61 99.5h1M182 99.5h1M17 100.5h1M56 100.5h1M68 100.5h1M216 100.5h1M139 101.5h1M152 101.5h1M156 101.5h1M169 101.5h1M190 101.5h1M196 101.5h1M208 101.5h1M212 101.5h1M9 102.5h1M17 102.5h1M65 102.5h1M133 102.5h1M198 102.5h1M201 102.5h1M31 103.5h1M38 103.5h1M48 103.5h1M53 103.5h1M133 103.5h1M139 103.5h1M192 103.5h1M212 103.5h1M134 104.5h1M216 104.5h1M0 105.5h1M10 105.5h1M15 105.5h1M31 105.5h1M76 105.5h1M197 105.5h1" stroke="#fc7b0a"/><path d="M74 94.5h1M82 94.5h1M82 94.5h1M198 94.5h1M210 94.5h1M1 95.5h1M5 95.5h1M44 95.5h1M194 95.5h1M5 96.5h1M31 96.5h1M141 96.5h1M151 96.5h1M163 96.5h1M163 96.5h1M183 96.5h1M189 96.5h1M201 96.5h1M209 96.5h1M4 97.5h1M42 97.5h1M47 97.5h1M133 97.5h1M158 97.5h1M180 97.5h1M210 97.5h1M168 98.5h1M203 98.5h1M8 99.5h1M47 99.5h1M59 99.5h1M154 99.5h1M173 99.5h1M193 99.5h1M210 99.5h1M212 99.5h1M6 100.5h1M49 100.5h1M67 100.5h1M144 100.5h1M163 100.5h1M165 100.5h1M214 100.5h1M37 101.5h1M37 101.5h1M45 101.5h1M60 101.5h1M67 101.5h1M139 101.5h1M61 102.5h1M171 102.5h1M196 102.5h1M7 103.5h1M28 103.5h1M40 103.5h1M67 103.5h1M179 103.5h1M208 103.5h1M21 104.5h1M44 104.5h1M180 104.5h1M186 104.5h1M195 104.5h1M196 104.5h1M198 104.5h1M61 105.5h1M135 105.5h1M201 105.5h1" stroke="#ff9b0a"/><path d="M157 94.5h1M189 94.5h1M200 94.5h1M9 95.5h1M14 95.5h1M18 95.5h1M27 95.5h1M139 95.5h1M149 95.5h1M151 95.5h1M157 95.5h1M169 95.5h1M201 95.5h1M207 95.5h1M208 95.5h1M211 95.5h1M42 96.5h1M60 96.5h1M65 96.5h1M187 96.5h1M209 96.5h1M212 96.5h1M216 96.5h1M6 97.5h1M18 97.5h1M20 97.5h1M43 97.5h1M52 97.5h1M83 97.5h1M141 97.5h1M185 97.5h1M194 97.5h1M196 97.5h1M19 98.5h1M24 98.5h1M25 98.5h1M58 98.5h1M64 98.5h1M137 98.5h1M161 98.5h1M197 98.5h1M209 98.5h1M211 98.5h1M12 99.5h1M49 99.5h1M60 99.5h1M61 99.5h1M139 99.5h1M146 99.5h1M192 99.5h1M195 99.5h1M197 99.5h1M7 100.5h1M12 100.5h1M22 100.5h1M68 100.5h1M72 100.5h1M144 100.5h1M145 100.5h1M146 100.5h1M157 100.5h1M158 100.5h1M160 100.5h1M178 100.5h1M193 100.5h1M196 100.5h1M41 101.5h1M45 101.5h1M61 101.5h1M74 101.5h1M78 101.5h1M145 101.5h1M166 101.5h1M182 101.5h1M186 101.5h1M189 101.5h1M195 101.5h1M2 102.5h1M4 102.5h1M21 102.5h1M31 102.5h1M44 102.5h1M60 102.5h1M77 102.5h1M78 102.5h1M83 102.5h1M140 102.5h1M141 102.5h1M143 102.5h1M192 102.5h1M202 102.5h1M203 102.5h1M207 102.5h1M208 102.5h1M21 103.5h1M26 103.5h1M40 103.5h1M73 103.5h1M74 103.5h1M78 103.5h1M81 103.5h1M83 103.5h1M133 103.5h1M151 103.5h1M152 103.5h1M156 103.5h1M162 103.5h1M167 103.5h1M190 103.5h1M199 103.5h1M4 104.5h1M25 104.5h1M50 104.5h1M56 104.5h1M78 104.5h1M170 104.5h1M179 104.5h1M196 104.5h1M213 104.5h1M0 105.5h1M22 105.5h1M27 105.5h1M31 105.5h1M38 105.5h1M41 105.5h1M78 105.5h1M146 105.5h1M150 105.5h1M153 105.5h1M163 105.5h1M182 105.5h1M215 105.5h1" stroke="#e4ec00"/><path d="M13 94.5h1M15 94.5h1M142 94.5h1M164 94.5h1M206 94.5h1M1 95.5h1M5 95.5h1M41 95.5h1M164 95.5h1M172 95.5h1M186 95.5h1M207 95.5h1M15 96.5h1M31 96.5h1M201 96.5h1M16 97.5h1M52 97.5h1M155 97.5h1M169 97.5h1M183 97.5h1M205 97.5h1M214 97.5h1M214 97.5h1M32 98.5h1M33 98.5h1M43 98.5h1M62 98.5h1M134 98.5h1M210 98.5h1M14 99.5h1M20 99.5h1M142 99.5h1M174 99.5h1M189 99.5h1M214 99.5h1M34 100.5h1M67 100.5h1M72 100.5h1M135 100.5h1M185 100.5h1M186 100.5h1M188 100.5h1M14 101.5h1M24 101.5h1M32 101.5h1M34 101.5h1M34 101.5h1M60 101.5h1M133 101.5h1M9 102.5h1M23 102.5h1M26 102.5h1M37 102.5h1M55 102.5h1M80 102.5h1M186 102.5h1M146 103.5h1M166 103.5h1M193 103.5h1M4 104.5h1M40 104.5h1M62 104.5h1M60 105.5h1M76 105.5h1M140 105.5h1M149 105.5h1M151 105.5h1M179 105.5h1" stroke="#f1d205"/><path d="M18 117.5h1M31 117.5h1M101 117.5h1M132 117.5h1M145 117.5h1M6 118.5h1M24 118.5h1M65 118.5h1M89 118.5h1M120 118.5h1M133 118.5h1M156 118.5h1M175 118.5h1M203 118.5h1M206 118.5h1M208 118.5h1M209 118.5h1M9 119.5h1M40 119.5h1M45 119.5h1M47 119.5h1M64 119.5h1M66 119.5h1M83 119.5h1M93 119.5h1M100 119.5h1M118 119.5h1M149 119.5h1M188 119.5h1M197 119.5h1M9 120.5h1M14 120.5h1M39 120.5h1M44 120.5h1M69 120.5h1M78 120.5h1M84 120.5h1M100 120.5h1M149 120.5h1M153 120.5h1M173 120.5h1M186 120.5h1M47 121.5h1M47 121.5h1M52 121.5h1M89 121.5h1M95 121.5h1M134 121.5h1M156 121.5h1M161 121.5h1M166 121.5h1M197 121.5h1M20 122.5h1M38 122.5h1M39 122.5h1M58 122.5h1M59 122.5h1M92 122.5h1M95 122.5h1M121 122.5h1M124 122.5h1M126 122.5h1M150 122.5h1M163 122.5h1M173 122.5h1M188 122.5h1M193 122.5h1M200 122.5h1M206 122.5h1M213 122.5h1M1 123.5h1M3 123.5h1M9 123.5h1M17 123.5h1M81 123.5h1M97 123.5h1M134 123.5h1M141 123.5h1M147 123.5h1M208 123.5h1M214 123.5h1M4 124.5h1M6 124.5h1M10 124.5h1M72 124.5h1M74 124.5h1M82 124.5h1M89 124.5h1M114 124.5h1M116 124.5h1M137 124.5h1M138 124.5h1M162 124.5h1M188 124.5h1M192 124.5h1M208 124.5h1M208 124.5h1M209 124.5h1M210 124.5h1M215 124.5h1M0 125.5h1M9 125.5h1M35 125.5h1M60 125.5h1M60 125.5h1M61 125.5h1M76 125.5h1M78 125.5h1M82 125.5h1M85 125.5h1M132 125.5h1M140 125.5h1M165 125.5h1M170 125.5h1M172 125.5h1M172 125.5h1M182 125.5h1M196 125.5h1M202 125.5h1M211 125.5h1M9 126.5h1M13 126.5h1M13 126.5h1M28 126.5h1M34 126.5h1M35 126.5h1M35 126.5h1M43 126.5h1M45 126.5h1M69 126.5h1M96 126.5h1M109 126.5h1M111 126.5h1M151 126.5h1M156 126.5h1M158 126.5h1M168 126.5h1M172 126.5h1M179 126.5h1M193 126.5h1M202 126.5h1M0 127.5h1M20 127.5h1M25 127.5h1M37 127.5h1M70 127.5h1M72 127.5h1M74 127.5h1M82 127.5h1M89 127.5h1M95 127.5h1M110 127.5h1M114 127.5h1M115 127.5h1M144 127.5h1M145 127.5h1M153 127.5h1M155 127.5h1M164 127.5h1M179 127.5h1M182 127.5h1M184 127.5h1M189 127.5h1M198 127.5h1M201 127.5h1M13 128.5h1M89 128.5h1M100 128.5h1M136 128.5h1M212 128.5h1" stroke="#00d69e"/><path d="M43 117.5h1M75 117.5h1M76 117.5h1M81 117.5h1M100 117.5h1M103 117.5h1M115 117.5h1M126 117.5h1M190 117.5h1M193 117.5h1M8 118.5h1M10 118.5h1M35 118.5h1M43 118.5h1M43 118.5h1M46 118.5h1M48 118.5h1M85 118.5h1M98 118.5h1M105 118.5h1M114 118.5h1M121 118.5h1M133 118.5h1M137 118.5h1M138 118.5h1M142 118.5h1M151 118.5h1M151 118.5h1M159 118.5h1M163 118.5h1M165 118.5h1M186 118.5h1M193 118.5h1M196 118.5h1M208 118.5h1M208 118.5h1M212 118.5h1M213 118.5h1M9 119.5h1M11 119.5h1M21 119.5h1M28 119.5h1M31 119.5h1M42 119.5h1M71 119.5h1M109 119.5h1M110 119.5h1M148 119.5h1M148 119.5h1M152 119.5h1M157 119.5h1M165 119.5h1M173 119.5h1M183 119.5h1M192 119.5h1M193 119.5h1M215 119.5h1M2 120.5h1M14 120.5h1M17 120.5h1M18 120.5h1M41 120.5h1M42 120.5h1M53 120.5h1M55 120.5h1M67 120.5h1M75 120.5h1M82 120.5h1M100 120.5h1M114 120.5h1M121 120.5h1M132 120.5h1M154 120.5h1M171 120.5h1M184 120.5h1M194 120.5h1M195 120.5h1M202 120.5h1" stroke="#00c8eb"/><path d="M5 117.5h1M19 117.5h1M20 117.5h1M25 117.5h1M62 117.5h1M80 117.5h1M127 117.5h1M6 118.5h1M9 118.5h1M24 118.5h1M29 118.5h1M34 118.5h1M39 118.5h1M40 118.5h1M52 118.5h1M64 118.5h1M69 118.5h1M85 118.5h1M86 118.5h1M97 118.5h1M111 118.5h1M149 118.5h1M152 118.5h1M162 118.5h1M166 118.5h1M173 118.5h1M178 118.5h1M179 118.5h1M12 119.5h1M24 119.5h1M28 119.5h1M33 119.5h1M40 119.5h1M41 119.5h1M49 119.5h1M71 119.5h1M76 119.5h1M102 119.5h1M112 119.5h1M123 119.5h1M125 119.5h1M126 119.5h1M135 119.5h1M136 119.5h1M142 119.5h1M161 119.5h1M174 119.5h1M178 119.5h1M188 119.5h1M188 119.5h1M189 119.5h1M194 119.5h1M195 119.5h1M204 119.5h1M28 120.5h1M30 120.5h1M35 120.5h1M41 120.5h1M61 120.5h1M96 120.5h1M101 120.5h1M128 120.5h1M138 120.5h1M144 120.5h1M145 120.5h1M145 120.5h1M158 120.5h1M161 120.5h1M191 120.5h1M202 120.5h1M203 120.5h1M207 120.5h1M4 121.5h1M25 121.5h1M46 121.5h1M47 121.5h1M89 121.5h1M104 121.5h1M167 121.5h1M172 121.5h1M178 121.5h1M181 121.5h1M206 121.5h1M2 122.5h1M13 122.5h1M20 122.5h1M25 122.5h1M27 122.5h1M39 122.5h1M41 122.5h1M69 122.5h1M70 122.5h1M83 122.5h1M117 122.5h1M124 122.5h1M133 122.5h1M133 122.5h1M143 122.5h1M154 122.5h1M181 122.5h1M191 122.5h1M0 123.5h1M39 123.5h1M60 123.5h1M77 123.5h1M79 123.5h1M94 123.5h1M110 123.5h1M128 123.5h1M157 123.5h1M169 123.5h1M192 123.5h1M6 124.5h1M27 124.5h1M43 124.5h1M64 124.5h1M69 124.5h1M73 124.5h1M83 124.5h1M86 124.5h1M96 124.5h1M152 124.5h1M157 124.5h1M161 124.5h1M164 124.5h1M166 124.5h1M170 124.5h1M184 124.5h1M201 124.5h1M216 124.5h1M5 125.5h1M27 125.5h1M37 125.5h1M115 125.5h1M116 125.5h1M121 125.5h1M171 125.5h1M175 125.5h1M177 125.5h1M181 125.5h1M201 125.5h1M18 126.5h1M52 126.5h1M59 126.5h1M73 126.5h1M91 126.5h1M112 126.5h1M123 126.5h1M133 126.5h1M133 126.5h1M154 126.5h1M171 126.5h1M172 126.5h1M201 126.5h1M203 126.5h1M5 127.5h1M12 127.5h1M25 127.5h1M53 127.5h1M58 127.5h1M59 127.5h1M66 127.5h1M91 127.5h1M113 127.5h1M122 127.5h1M158 127.5h1M182 127.5h1M197 127.5h1M189 128.5h1" stroke="#00a8e6"/><path d="M9 120.5h1M19 120.5h1M37 120.5h1M45 120.5h1M51 120.5h1M125 120.5h1M190 120.5h1M0 121.5h1M15 121.5h1M25 121.5h1M34 121.5h1M38 121.5h1M48 121.5h1M50 121.5h1M67 121.5h1M75 121.5h1M85 121.5h1M100 121.5h1M110 121.5h1M110 121.5h1M114 121.5h1M136 121.5h1M193 121.5h1M201 121.5h1M11 122.5h1M24 122.5h1M28 122.5h1M38 122.5h1M45 122.5h1M48 122.5h1M55 122.5h1M72 122.5h1M76 122.5h1M87 122.5h1M116 122.5h1M119 122.5h1M121 122.5h1M121 122.5h1M124 122.5h1M153 122.5h1M158 122.5h1M158 122.5h1M163 122.5h1M171 122.5h1M190 122.5h1M0 123.5h1M3 123.5h1M3 123.5h1M9 123.5h1M12 123.5h1M14 123.5h1M32 123.5h1M37 123.5h1M40 123.5h1M45 123.5h1M46 123.5h1M70 123.5h1M85 123.5h1M125 123.5h1M145 123.5h1M148 123.5h1M161 123.5h1M168 123.5h1M175 123.5h1M180 123.5h1M185 123.5h1M185 123.5h1M188 123.5h1M213 123.5h1M9 124.5h1M13 124.5h1M16 124.5h1M25 124.5h1M26 124.5h1M35 124.5h1M41 124.5h1M44 124.5h1M51 124.5h1M60 124.5h1M65 124.5h1M67 124.5h1M68 124.5h1M72 124.5h1M105 124.5h1M110 124.5h1M117 124.5h1M122 124.5h1M188 124.5h1M194 124.5h1M212 124.5h1M214 124.5h1M2 125.5h1M47 125.5h1M55 125.5h1M55 125.5h1M61 125.5h1M62 125.5h1M83 125.5h1M85 125.5h1M92 125.5h1M96 125.5h1M103 125.5h1M110 125.5h1M116 125.5h1M124 125.5h1M126 125.5h1M139 125.5h1M161 125.5h1M162 125.5h1M165 125.5h1M180 125.5h1M207 125.5h1M209 125.5h1M211 125.5h1M3 126.5h1M11 126.5h1M11 126.5h1M15 126.5h1M25 126.5h1M32 126.5h1M39 126.5h1M43 126.5h1M43 126.5h1M46 126.5h1M64 126.5h1M66 126.5h1M71 126.5h1M87 126.5h1M87 126.5h1M100 126.5h1M103 126.5h1M109 126.5h1M118 126.5h1M153 126.5h1M155 126.5h1M156 126.5h1M171 126.5h1M172 126.5h1M174 126.5h1M175 126.5h1M176 126.5h1M186 126.5h1M192 126.5h1M202 126.5h1M2 127.5h1M8 127.5h1M12 127.5h1M18 127.5h1M26 127.5h1M29 127.5h1M32 127.5h1M39 127.5h1M41 127.5h1M44 127.5h1M46 127.5h1M77 127.5h1M92 127.5h1M93 127.5h1M99 127.5h1M102 127.5h1M104 127.5h1M125 127.5h1M130 127.5h1M159 127.5h1M161 127.5h1M166 127.5h1M169 127.5h1M171 127.5h1M181 127.5h1M189 127.5h1M191 127.5h1M199 127.5h1M216 127.5h1M2 128.5h1M42 128.5h1M51 128.5h1M55 128.5h1M96 128.5h1M98 128.5h1M181 128.5h1" stroke="#0069de"/><path d="M62 117.5h1M67 117.5h1M74 117.5h1M85 117.5h1M97 117.5h1M101 117.5h1M135 117.5h1M147 117.5h1M173 117.5h1M194 117.5h1M200 117.5h1M19 118.5h1M20 118.5h1M27 118.5h1M29 118.5h1M42 118.5h1M52 118.5h1M59 118.5h1M64 118.5h1M65 118.5h1M72 118.5h1M78 118.5h1M111 118.5h1M116 118.5h1M119 118.5h1M120 118.5h1M122 118.5h1M129 118.5h1M135 118.5h1M143 118.5h1M145 118.5h1M148 118.5h1M155 118.5h1M156 118.5h1M161 118.5h1M165 118.5h1M179 118.5h1M183 118.5h1M185 118.5h1M195 118.5h1M198 118.5h1M211 118.5h1M28 119.5h1M31 119.5h1M39 119.5h1M39 119.5h1M39 119.5h1M41 119.5h1M46 119.5h1M69 119.5h1M73 119.5h1M76 119.5h1M83 119.5h1M86 119.5h1M91 119.5h1M93 119.5h1M97 119.5h1M111 119.5h1M124 119.5h1M131 119.5h1M132 119.5h1M135 119.5h1M141 119.5h1M152 119.5h1M160 119.5h1M163 119.5h1M166 119.5h1M170 119.5h1M170 119.5h1M172 119.5h1M202 119.5h1M212 119.5h1M8 120.5h1M38 120.5h1M41 120.5h1M42 120.5h1M42 120.5h1M45 120.5h1M49 120.5h1M53 120.5h1M76 120.5h1M99 120.5h1M116 120.5h1M122 120.5h1M129 120.5h1M142 120.5h1M149 120.5h1M151 120.5h1M161 120.5h1M177 120.5h1M187 120.5h1M188 120.5h1M201 120.5h1M203 120.5h1M205 120.5h1M209 120.5h1M212 120.5h1M3 121.5h1M9 121.5h1M22 121.5h1M25 121.5h1M29 121.5h1M32 121.5h1M40 121.5h1M42 121.5h1M45 121.5h1M50 121.5h1M69 121.5h1M70 121.5h1M77 121.5h1M81 121.5h1M84 121.5h1M85 121.5h1M95 121.5h1M100 121.5h1M109 121.5h1M120 121.5h1M121 121.5h1M127 121.5h1M128 121.5h1M128 121.5h1M132 121.5h1M164 121.5h1M172 121.5h1M172 121.5h1M176 121.5h1M181 121.5h1M183 121.5h1M18 122.5h1M33 122.5h1M34 122.5h1M36 122.5h1M42 122.5h1M50 122.5h1M64 122.5h1M66 122.5h1M69 122.5h1M70 122.5h1M76 122.5h1M82 122.5h1M92 122.5h1M116 122.5h1M125 122.5h1M126 122.5h1M131 122.5h1M141 122.5h1M145 122.5h1M152 122.5h1M153 122.5h1M158 122.5h1M160 122.5h1M167 122.5h1M175 122.5h1M176 122.5h1M183 122.5h1M186 122.5h1M195 122.5h1M197 122.5h1M211 122.5h1M5 123.5h1M8 123.5h1M20 123.5h1M24 123.5h1M64 123.5h1M65 123.5h1M78 123.5h1M78 123.5h1M81 123.5h1M81 123.5h1M85 123.5h1M89 123.5h1M91 123.5h1M94 123.5h1M94 123.5h1M97 123.5h1M104 123.5h1M134 123.5h1M145 123.5h1M149 123.5h1M151 123.5h1M152 123.5h1M164 123.5h1M175 123.5h1M191 123.5h1M193 123.5h1M205 123.5h1M205 123.5h1M215 123.5h1M215 123.5h1M38 124.5h1M120 124.5h1M147 124.5h1" stroke="#00de78"/><path d="M5 124.5h1M9 124.5h1M25 124.5h1M28 124.5h1M47 124.5h1M47 124.5h1M48 124.5h1M78 124.5h1M99 124.5h1M160 124.5h1M172 124.5h1M174 124.5h1M197 124.5h1M1 125.5h1M36 125.5h1M42 125.5h1M79 125.5h1M84 125.5h1M93 125.5h1M100 125.5h1M121 125.5h1M133 125.5h1M136 125.5h1M142 125.5h1M146 125.5h1M148 125.5h1M165 125.5h1M179 125.5h1M188 125.5h1M194 125.5h1M194 125.5h1M1 126.5h1M38 126.5h1M38 126.5h1M47 126.5h1M47 126.5h1M57 126.5h1M65 126.5h1M69 126.5h1M69 126.5h1M75 126.5h1M75 126.5h1M87 126.5h1M92 126.5h1M102 126.5h1M128 126.5h1M136 126.5h1M151 126.5h1M166 126.5h1M189 126.5h1M205 126.5h1M213 126.5h1M0 127.5h1M47 127.5h1M50 127.5h1M70 127.5h1M90 127.5h1M123 127.5h1M127 127.5h1M132 127.5h1M137 127.5h1M138 127.5h1M140 127.5h1M155 127.5h1M157 127.5h1M161 127.5h1M171 127.5h1M174 127.5h1M188 127.5h1M208 127.5h1M85 128.5h1M124 128.5h1M130 128.5h1M193 128.5h1M213 128.5h1M214 128.5h1" stroke="#00cfc4"/></svg></div>
<svg style="left:72.2px;top:69.0px" width="216.8" height="148.9"><path d="M0.3 86.1L1.4 85.7L2.5 87.0L3.6 85.5L4.7 86.7L5.8 86.3L6.9 85.5L8.0 86.6L9.1 85.4L10.2 86.4L11.3 85.5L12.4 85.5L13.5 86.4L14.6 87.4L15.7 85.6L16.8 85.9L17.9 86.9L19.0 87.8L20.1 86.8L21.2 86.3L22.3 87.8L23.4 85.4L24.5 87.5L25.6 86.1L26.7 85.7L27.8 85.6L28.9 86.1L30.0 87.4L31.1 85.8L32.2 86.8L33.3 87.0L34.4 86.3L35.5 86.7L36.6 85.5L37.7 85.5L38.8 85.8L39.9 87.1L41.0 86.4L42.1 86.1L43.2 86.8L44.3 86.5L45.4 86.1L46.5 87.4L47.6 87.1L48.7 85.9L49.8 86.8L50.9 86.7L52.0 87.6L53.1 87.2L54.2 86.0L55.3 87.8L56.4 85.6L57.5 86.4L58.6 87.3L59.7 85.7L60.8 86.6L61.9 85.4L63.0 87.0L64.1 87.3L65.2 86.8L66.3 87.6L67.4 86.1L68.5 87.1L69.6 86.8L70.7 86.8L71.8 86.5L72.9 87.5L74.0 87.8L75.1 86.5L76.2 87.0L77.3 85.5L78.4 87.1L79.5 87.0L80.6 87.9M134.5 87.4L135.6 86.0L136.7 86.3L137.8 87.0L138.9 85.4L140.0 86.5L141.1 85.7L142.2 85.6L143.3 85.5L144.4 87.3L145.5 85.6L146.6 85.9L147.7 86.3L148.8 87.6L149.9 85.5L151.0 86.5L152.1 86.7L153.2 87.6L154.3 87.4L155.4 87.5L156.5 86.0L157.6 86.4L158.7 86.2L159.8 87.6L160.9 87.8L162.0 85.7L163.1 85.8L164.2 85.9L165.3 85.9L166.4 86.6L167.5 86.8L168.6 86.0L169.7 85.3L170.8 86.4L171.9 86.3L173.0 86.8L174.1 87.8L175.2 87.1L176.3 86.6L177.4 86.9L178.5 87.1L179.6 85.4L180.7 87.6L181.8 87.3L182.9 87.6L184.0 87.4L185.1 86.3L186.2 86.3L187.3 85.6L188.4 86.9L189.5 85.5L190.6 85.5L191.7 85.8L192.8 85.7L193.9 86.2L195.0 85.4L196.1 85.3L197.2 85.7L198.3 85.6L199.4 86.2L200.5 85.4L201.6 87.6L202.7 86.9L203.8 85.7L204.9 86.0L206.0 86.2L207.1 86.2L208.2 85.6L209.3 87.5L210.4 87.9L211.5 86.5L212.6 86.6L213.7 85.5L214.8 85.6L215.9 86.2" stroke="#ecec50" stroke-width="0.75" fill="none" opacity="0.95"/></svg>
<svg style="left:72.2px;top:69.0px;mix-blend-mode:lighten" width="216.8" height="148.9"><g stroke="#585858" stroke-width="0.85" fill="none"><path d="M20.87 0V148.90"/><path d="M42.74 0V148.90"/><path d="M64.61 0V148.90"/><path d="M86.48 0V148.90"/><path d="M108.35 0V148.90"/><path d="M130.22 0V148.90"/><path d="M152.09 0V148.90"/><path d="M173.96 0V148.90"/><path d="M195.83 0V148.90"/><path d="M0 15.00H216.80"/><path d="M0 29.50H216.80"/><path d="M0 44.00H216.80"/><path d="M0 58.50H216.80"/><path d="M0 73.00H216.80"/><path d="M0 87.50H216.80"/><path d="M0 102.00H216.80"/><path d="M0 116.50H216.80"/><path d="M0 131.00H216.80"/><path d="M0 145.50H216.80"/></g></svg>
<div class="r" style="left:8.80px;top:195.40px;width:39.20px;height:8.60px;background:#fff;border:0.7px solid #b8b8b8;"></div>
<span class="t" style="left:11.20px;top:198px;font-size:5.5px;line-height:5.5px;color:#000;">Spectrum</span>
<div class="r" style="left:41.40px;top:196.60px;width:5.60px;height:6.20px;background:#e8f0fa;border:0.7px solid #5a9bd8;border-radius:1px;"></div>
<svg style="left:42.4px;top:198.8px" width="3.6" height="2.6" viewBox="0 0 3.6 2.6"><path d="M0.3 0.3L1.8 2L3.3 0.3" stroke="#2a5a9a" stroke-width="0.8" fill="none"/></svg>
<div class="btn" style="left:8.4px;top:223.2px;width:33px;height:9.4px;"></div>
<span class="t" style="left:12.80px;top:226px;font-size:5.6px;line-height:5.6px;color:#111;">Autoscale</span>
<div class="r" style="left:73.20px;top:226.60px;width:2.00px;height:2.00px;background:#2f5f45;border-radius:50%;"></div>
<span class="t" style="left:80.00px;top:226px;font-size:5.5px;line-height:5.5px;color:#000;">CF</span>
<span class="t" style="left:90.00px;top:226px;font-size:5.5px;line-height:5.5px;color:#000;">2.445315 GHz</span>
<div class="r" style="left:232.60px;top:226.60px;width:2.00px;height:2.00px;background:#2f5f45;border-radius:50%;"></div>
<span class="t" style="left:239.20px;top:226px;font-size:5.5px;line-height:5.5px;color:#000;">Span</span>
<span class="t" style="left:254.60px;top:226px;font-size:5.5px;line-height:5.5px;color:#000;">10.00 MHz</span>
<div class="r" style="left:300.50px;top:43.40px;width:295.80px;height:192.30px;background:#fff;border:1.5px solid #b0b0b0;"></div>
<div class="r" style="left:300.50px;top:43.40px;width:295.80px;height:10.00px;background:linear-gradient(#bcbcbc,#cacaca 40%,#d2d2d2);"></div>
<div class="r" style="left:303.50px;top:45.00px;width:7.40px;height:7.40px;background:#050505;border-radius:1px;"></div>
<svg style="left:303.5px;top:45.0px" width="7.6" height="8.2" viewBox="0 0 7.6 8.2"><path d="M1.2 6.2L3 3.8M3.6 2.2V3.4M4.8 2.6H6.4" stroke="#e8e8e8" stroke-width="0.9"/><path d="M1.4 6.8L2.6 6" stroke="#d8d820" stroke-width="0.8"/></svg>
<span class="t" style="left:312.30px;top:46px;font-size:6.1px;line-height:6.1px;color:#f2f5fa;font-weight:bold;">Amplitude vs Time</span>
<div class="r" style="left:575.70px;top:45.10px;width:7.80px;height:7.20px;background:#d2d2d2;border:0.6px solid #e8e8e8;"></div>
<div class="r" style="left:577.70px;top:47.20px;width:3.80px;height:2.60px;background:transparent;border:0.6px solid #f4f4f4;"></div>
<div class="r" style="left:585.10px;top:45.10px;width:8.20px;height:7.20px;background:#d2d2d2;border:0.6px solid #e8e8e8;"></div>
<svg style="left:586.9px;top:46.4px" width="4.6" height="4.6" viewBox="0 0 4.6 4.6"><path d="M0.6 0.6L4 4M4 0.6L0.6 4" stroke="#f0f0f0" stroke-width="0.8"/></svg>
<svg style="left:348.8px;top:58.6px" width="3.6" height="2.6" viewBox="0 0 3.6 2.6"><path d="M0.3 0.3L1.8 2L3.3 0.3" stroke="#5a5a8a" stroke-width="0.8" fill="none"/></svg>
<span class="t" style="left:356.20px;top:59px;font-size:5.5px;line-height:5.5px;color:#000;">Trace 1</span>
<div class="r" style="left:397.00px;top:57.40px;width:6.00px;height:6.00px;background:#fff;border:0.8px solid #4a94d8;border-radius:0.8px;"></div>
<svg style="left:397.0px;top:57.4px" width="6.0" height="6.0" viewBox="0 0 6.0 6.0"><path d="M1.4 3.2L2.6 4.4L4.8 1.6" stroke="#2a6db8" stroke-width="1" fill="none"/></svg>
<span class="t" style="left:405.20px;top:59px;font-size:5.5px;line-height:5.5px;color:#000;">Show</span>
<span class="t" style="left:425.00px;top:59px;font-size:5.5px;line-height:5.5px;color:#000;">+Peak Normal</span>
<div class="btn" style="left:571.1px;top:56.2px;width:18.6px;height:9.2px;"></div>
<span class="t" style="left:574.70px;top:59px;font-size:5.6px;line-height:5.6px;color:#111;letter-spacing:-0.12px;">Clear</span>
<div class="r" style="left:305.60px;top:73.60px;width:2.00px;height:2.00px;background:#2f5f45;border-radius:50%;"></div>
<span class="t" style="left:309.60px;top:68px;font-size:5.5px;line-height:5.5px;color:#000;">dB/div:</span>
<span class="t" style="left:311.40px;top:76px;font-size:5.7px;line-height:5.7px;color:#000;">10.0 dB</span>
<div class="r" style="left:305.60px;top:92.00px;width:2.00px;height:2.00px;background:#2f5f45;border-radius:50%;"></div>
<span class="t" style="left:309.60px;top:86px;font-size:5.5px;line-height:5.5px;color:#000;">Span:</span>
<span class="t" style="left:311.60px;top:94px;font-size:5.5px;line-height:5.5px;color:#000;">2.000 MHz</span>
<span class="t" style="left:348.00px;top:68px;font-size:5.5px;line-height:5.5px;color:#000;">0.0</span>
<div class="r" style="left:369.40px;top:69.70px;width:1.40px;height:0.60px;background:#444;"></div>
<span class="t" style="left:348.00px;top:97px;font-size:5.5px;line-height:5.5px;color:#000;">-20.0</span>
<div class="r" style="left:369.40px;top:98.20px;width:1.40px;height:0.60px;background:#444;"></div>
<span class="t" style="left:348.00px;top:125px;font-size:5.5px;line-height:5.5px;color:#000;">-40.0</span>
<div class="r" style="left:369.40px;top:126.70px;width:1.40px;height:0.60px;background:#444;"></div>
<span class="t" style="left:348.00px;top:154px;font-size:5.5px;line-height:5.5px;color:#000;">-60.0</span>
<div class="r" style="left:369.40px;top:155.20px;width:1.40px;height:0.60px;background:#444;"></div>
<span class="t" style="left:348.00px;top:182px;font-size:5.5px;line-height:5.5px;color:#000;">-80.0</span>
<div class="r" style="left:369.40px;top:183.70px;width:1.40px;height:0.60px;background:#444;"></div>
<span class="t" style="left:347.80px;top:210px;font-size:5.5px;line-height:5.5px;color:#000;">-100.0</span>
<div class="r" style="left:369.40px;top:212.20px;width:1.40px;height:0.60px;background:#444;"></div>
<div class="r" style="left:371.80px;top:70.00px;width:217.90px;height:142.50px;background:#000;"></div>
<svg style="left:371.8px;top:70.0px" width="217.9" height="142.5"><g stroke="#585858" stroke-width="0.85" fill="none"><path d="M21.79 0V142.50"/><path d="M43.58 0V142.50"/><path d="M65.37 0V142.50"/><path d="M87.16 0V142.50"/><path d="M108.95 0V142.50"/><path d="M130.74 0V142.50"/><path d="M152.53 0V142.50"/><path d="M174.32 0V142.50"/><path d="M196.11 0V142.50"/><path d="M0 14.25H217.90"/><path d="M0 28.50H217.90"/><path d="M0 42.75H217.90"/><path d="M0 57.00H217.90"/><path d="M0 71.25H217.90"/><path d="M0 85.50H217.90"/><path d="M0 99.75H217.90"/><path d="M0 114.00H217.90"/><path d="M0 128.25H217.90"/></g><path d="M2 28.2H217.9" stroke="#179a9a" stroke-width="0.8"/><path d="M0.5 76.0L0.6 30.0L1.4 28.0L1.5 21.7L2.6 21.3L3.4 21.18L6.5 21.46L9.6 21.13L12.7 21.06L15.8 21.53L18.9 21.31L22.0 21.12L25.1 21.32L28.2 21.06L31.3 21.31L34.4 21.54L37.5 21.48L40.6 21.40L43.7 21.18L46.8 21.23L49.9 21.13L53.0 21.44L56.1 21.32L59.2 21.44L62.3 21.21L65.4 21.16L68.5 21.46L71.6 21.54L74.7 21.48L77.8 21.45L80.9 21.46L84.0 21.42L87.1 21.16L90.2 21.31L93.3 21.23L96.4 21.06L99.5 21.06L102.6 21.19L105.7 21.18L108.8 21.40L111.9 21.53L115.0 21.27L118.1 21.52L121.2 21.54L124.3 21.53L127.4 21.23L130.5 21.16L133.6 21.16L136.7 21.15L139.8 21.15L142.9 21.36L146.0 21.50L149.1 21.47L152.2 21.29L155.3 21.38L158.4 21.45L161.5 21.09L164.6 21.38L167.7 21.50L170.8 21.44L173.9 21.43L177.0 21.29L180.1 21.14L183.2 21.44L186.3 21.22L189.4 21.45L192.5 21.54L195.6 21.25L198.7 21.25L201.8 21.52L204.9 21.41L208.0 21.14L211.1 21.11L213.6 21.3L214.3 24.0L214.7 31.0L215.9 70.0L217.2 87.0" stroke="#ecec24" stroke-width="0.9" fill="none"/><path d="M0.5 68.5V76.0M217.2 80.0V87.5" stroke="#f0f024" stroke-width="1.3" fill="none"/></svg>
<svg style="left:372.0px;top:212.8px" width="2.6" height="2.6" viewBox="0 0 2.6 2.6"><path d="M0 0H2.6L1.3 2.4Z" fill="#d02020"/></svg>
<div class="btn" style="left:304.4px;top:206.4px;width:33px;height:9.4px;"></div>
<span class="t" style="left:308.80px;top:209px;font-size:5.6px;line-height:5.6px;color:#111;">Autoscale</span>
<span class="t" style="left:301.60px;top:219px;font-size:4.9px;line-height:4.9px;color:#000;">RMS:</span>
<span class="t" style="left:318.00px;top:219px;font-size:4.9px;line-height:4.9px;color:#000;">-15.30 dBm</span>
<div class="r" style="left:372.80px;top:219.80px;width:2.00px;height:2.00px;background:#2f5f45;border-radius:50%;"></div>
<span class="t" style="left:379.40px;top:218px;font-size:5.4px;line-height:5.4px;color:#000;">Position:</span>
<span class="t" style="left:406.20px;top:218px;font-size:5.4px;line-height:5.4px;color:#000;font-style:italic;">-4.324 us</span>
<div class="r" style="left:525.40px;top:219.80px;width:2.00px;height:2.00px;background:#2f5f45;border-radius:50%;"></div>
<span class="t" style="left:532.40px;top:218px;font-size:5.4px;line-height:5.4px;color:#000;">Scale:</span>
<span class="t" style="left:553.60px;top:218px;font-size:5.4px;line-height:5.4px;color:#000;font-style:italic;">394.643 us</span>
<span class="t" style="left:301.60px;top:227px;font-size:4.9px;line-height:4.9px;color:#000;">Max:</span>
<span class="t" style="left:320.00px;top:227px;font-size:4.9px;line-height:4.9px;color:#000;">-14.88 dBm</span>
<span class="t" style="left:357.80px;top:227px;font-size:4.6px;line-height:4.6px;color:#000;">@</span>
<span class="t" style="left:366.40px;top:227px;font-size:4.9px;line-height:4.9px;color:#000;">118.5 us</span>
<span class="t" style="left:393.00px;top:227px;font-size:4.9px;line-height:4.9px;color:#000;">Min:</span>
<span class="t" style="left:410.00px;top:227px;font-size:4.9px;line-height:4.9px;color:#000;">-62.25 dBm</span>
<span class="t" style="left:447.80px;top:227px;font-size:4.6px;line-height:4.6px;color:#000;">@</span>
<span class="t" style="left:456.40px;top:227px;font-size:4.9px;line-height:4.9px;color:#000;">389.1 us</span>
<div class="r" style="left:4.10px;top:235.90px;width:296.60px;height:191.10px;background:#fff;border:1.5px solid #b0b0b0;border-left-color:#6e6e6e;"></div>
<div class="r" style="left:4.10px;top:235.90px;width:296.60px;height:10.00px;background:linear-gradient(#bcbcbc,#cacaca 40%,#d2d2d2);"></div>
<div class="r" style="left:4.10px;top:235.90px;width:1.50px;height:10.00px;background:#6e6e6e;"></div>
<div class="r" style="left:7.10px;top:237.50px;width:7.40px;height:7.40px;background:#050505;border-radius:1px;"></div>
<svg style="left:7.1px;top:237.5px" width="7.6" height="8.2" viewBox="0 0 7.6 8.2"><path d="M1.6 5.8V6.4M2.8 2.6Q3.6 1.8 4.2 2.8V5.6" stroke="#d8c820" stroke-width="0.9" fill="none"/><path d="M5.4 6.2H6" stroke="#ddd" stroke-width="0.8"/></svg>
<span class="t" style="left:17.10px;top:239px;font-size:6.1px;line-height:6.1px;color:#f2f5fa;font-weight:bold;">Spectrum</span>
<div class="r" style="left:280.10px;top:237.60px;width:7.80px;height:7.20px;background:#d2d2d2;border:0.6px solid #e8e8e8;"></div>
<div class="r" style="left:282.10px;top:239.70px;width:3.80px;height:2.60px;background:transparent;border:0.6px solid #f4f4f4;"></div>
<div class="r" style="left:289.50px;top:237.60px;width:8.20px;height:7.20px;background:#d2d2d2;border:0.6px solid #e8e8e8;"></div>
<svg style="left:291.3px;top:238.9px" width="4.6" height="4.6" viewBox="0 0 4.6 4.6"><path d="M0.6 0.6L4 4M4 0.6L0.6 4" stroke="#f0f0f0" stroke-width="0.8"/></svg>
<svg style="left:50.6px;top:251.0px" width="3.6" height="2.6" viewBox="0 0 3.6 2.6"><path d="M0.3 0.3L1.8 2L3.3 0.3" stroke="#5a5a8a" stroke-width="0.8" fill="none"/></svg>
<span class="t" style="left:57.00px;top:251px;font-size:5.5px;line-height:5.5px;color:#000;">Trace 1</span>
<div class="r" style="left:98.00px;top:249.60px;width:6.00px;height:6.00px;background:#fff;border:0.8px solid #4a94d8;border-radius:0.8px;"></div>
<svg style="left:98.0px;top:249.6px" width="6.0" height="6.0" viewBox="0 0 6.0 6.0"><path d="M1.4 3.2L2.6 4.4L4.8 1.6" stroke="#2a6db8" stroke-width="1" fill="none"/></svg>
<span class="t" style="left:106.20px;top:251px;font-size:5.5px;line-height:5.5px;color:#000;">Show</span>
<span class="t" style="left:125.40px;top:251px;font-size:5.5px;line-height:5.5px;color:#000;">+Peak Normal</span>
<div class="btn" style="left:277.2px;top:248.0px;width:18.6px;height:9.2px;"></div>
<span class="t" style="left:280.80px;top:251px;font-size:5.6px;line-height:5.6px;color:#111;letter-spacing:-0.12px;">Clear</span>
<svg style="left:8.0px;top:266.0px" width="3.2" height="2.8" viewBox="0 0 3.2 2.8"><path d="M1.6 0L3.2 2.8H0Z" fill="#2f6a3a"/></svg>
<span class="t" style="left:13.70px;top:261px;font-size:5.5px;line-height:5.5px;color:#000;">dB/div:</span>
<span class="t" style="left:15.00px;top:268px;font-size:5.7px;line-height:5.7px;color:#000;">10.0 dB</span>
<svg style="left:8.0px;top:283.20000000000005px" width="3.2" height="2.8" viewBox="0 0 3.2 2.8"><path d="M1.6 0L3.2 2.8H0Z" fill="#2f6a3a"/></svg>
<span class="t" style="left:13.70px;top:277px;font-size:5.5px;line-height:5.5px;color:#000;">RBW:</span>
<span class="t" style="left:15.50px;top:286px;font-size:5.5px;line-height:5.5px;color:#000;font-style:italic;">100 kHz</span>
<div class="r" style="left:8.80px;top:294.40px;width:5.80px;height:5.80px;background:#fff;border:0.8px solid #4a94d8;border-radius:0.8px;"></div>
<span class="t" style="left:17.00px;top:295px;font-size:5.5px;line-height:5.5px;color:#000;">VBW:</span>
<span class="t" style="left:48.00px;top:261px;font-size:5.5px;line-height:5.5px;color:#000;">0.0</span>
<div class="r" style="left:66.80px;top:258.70px;width:1.40px;height:0.60px;background:#444;"></div>
<span class="t" style="left:48.00px;top:288px;font-size:5.5px;line-height:5.5px;color:#000;">-20.0</span>
<div class="r" style="left:66.80px;top:289.12px;width:1.40px;height:0.60px;background:#444;"></div>
<span class="t" style="left:48.00px;top:318px;font-size:5.5px;line-height:5.5px;color:#000;">-40.0</span>
<div class="r" style="left:66.80px;top:319.54px;width:1.40px;height:0.60px;background:#444;"></div>
<span class="t" style="left:48.00px;top:348px;font-size:5.5px;line-height:5.5px;color:#000;">-60.0</span>
<div class="r" style="left:66.80px;top:349.96px;width:1.40px;height:0.60px;background:#444;"></div>
<span class="t" style="left:48.00px;top:379px;font-size:5.5px;line-height:5.5px;color:#000;">-80.0</span>
<div class="r" style="left:66.80px;top:380.38px;width:1.40px;height:0.60px;background:#444;"></div>
<span class="t" style="left:47.40px;top:409px;font-size:5.5px;line-height:5.5px;color:#000;">-100.0</span>
<div class="r" style="left:66.80px;top:410.80px;width:1.40px;height:0.60px;background:#444;"></div>
<div class="r" style="left:69.60px;top:259.00px;width:217.30px;height:152.10px;background:#000;"></div>
<svg style="left:69.6px;top:259.0px" width="217.3" height="152.1"><g stroke="#585858" stroke-width="0.85" fill="none"><path d="M21.73 0V152.10"/><path d="M43.46 0V152.10"/><path d="M65.19 0V152.10"/><path d="M86.92 0V152.10"/><path d="M108.65 0V152.10"/><path d="M130.38 0V152.10"/><path d="M152.11 0V152.10"/><path d="M173.84 0V152.10"/><path d="M195.57 0V152.10"/><path d="M0 15.21H217.30"/><path d="M0 30.42H217.30"/><path d="M0 45.63H217.30"/><path d="M0 60.84H217.30"/><path d="M0 76.05H217.30"/><path d="M0 91.26H217.30"/><path d="M0 106.47H217.30"/><path d="M0 121.68H217.30"/><path d="M0 136.89H217.30"/></g><path d="M0.3 97.2L1.6 99.4L2.9 95.9L4.2 93.0L5.5 95.9L6.8 89.2L8.1 94.5L9.4 94.2L10.7 93.6L12.0 93.1L13.3 99.0L14.6 95.6L15.9 94.5L17.2 93.2L18.5 95.7L19.8 92.5L21.1 97.1L22.4 93.1L23.7 95.9L25.0 95.7L26.3 92.9L27.6 95.4L28.9 94.1L30.2 95.0L31.5 93.8L32.8 94.0L34.1 95.1L35.4 93.9L36.7 93.3L38.0 96.0L39.3 95.6L40.6 92.1L41.9 96.4L43.2 94.5L44.5 93.3L45.8 93.9L47.1 95.5L48.4 94.1L49.7 95.4L51.0 96.0L52.3 95.3L53.6 92.4L54.9 90.3L56.2 95.3L57.5 94.2L58.8 94.8L60.4 93.3L64.6 94.3L69.8 96.4L72.9 89.8L77.1 93.3L81.2 96.0L83.3 91.2L85.4 77.7L86.9 72.5L88.5 78.7L90.6 78.0L91.7 82.9L93.7 71.4L95.8 56.8L97.5 44.3L98.9 43.3L101.0 33.9L103.1 27.3L104.8 27.7L106.2 31.2L108.3 24.5L109.8 31.8L111.4 31.8L113.5 30.8L115.6 36.0L117.7 45.4L118.7 48.5L120.4 45.4L121.9 58.9L123.9 73.5L126.0 77.3L128.1 79.8L129.8 73.5L131.2 81.8L133.3 88.1L136.4 90.8L138.5 89.8L141.7 94.3L144.8 99.5L147.9 96.4L152.1 94.3L155.2 93.3L158.3 96.4L159.4 100.6L160.8 92.7L162.1 96.1L163.4 96.3L164.7 93.8L166.0 92.5L167.3 94.1L168.6 95.5L169.9 99.8L171.2 92.7L172.5 93.9L173.8 94.5L175.1 91.2L176.4 88.9L177.7 91.8L179.0 87.0L180.3 88.9L181.6 94.3L182.9 94.3L184.2 94.0L185.5 94.4L186.8 96.8L188.1 93.4L189.4 99.4L190.7 93.1L192.0 95.3L193.3 96.7L194.6 97.7L195.9 94.1L197.2 97.1L198.5 96.7L199.8 93.8L201.1 94.2L202.4 94.9L203.7 97.0L205.0 94.6L206.3 92.0L207.6 94.9L208.9 93.7L210.2 95.2L211.5 93.6L212.8 98.2L214.1 97.5L215.4 95.4L216.7 95.0" stroke="#e2dc28" stroke-width="0.9" fill="none" stroke-linejoin="round"/></svg>
<div class="btn" style="left:8.5px;top:415.6px;width:33.2px;height:9.0px;"></div>
<span class="t" style="left:12.90px;top:419px;font-size:5.6px;line-height:5.6px;color:#111;">Autoscale</span>
<div class="r" style="left:71.60px;top:418.40px;width:2.00px;height:2.00px;background:#2f5f45;border-radius:50%;"></div>
<span class="t" style="left:78.00px;top:417px;font-size:5.5px;line-height:5.5px;color:#000;">Start</span>
<span class="t" style="left:97.00px;top:417px;font-size:5.5px;line-height:5.5px;color:#000;">2.440315 GHz</span>
<div class="r" style="left:219.00px;top:418.40px;width:2.00px;height:2.00px;background:#2f5f45;border-radius:50%;"></div>
<span class="t" style="left:225.60px;top:417px;font-size:5.5px;line-height:5.5px;color:#000;">Stop</span>
<span class="t" style="left:241.20px;top:417px;font-size:5.5px;line-height:5.5px;color:#000;">2.450315 GHz</span>
<div class="r" style="left:300.70px;top:235.90px;width:295.60px;height:191.10px;background:#fff;border:1.5px solid #b0b0b0;"></div>
<div class="r" style="left:300.70px;top:235.90px;width:295.60px;height:10.00px;background:linear-gradient(#bcbcbc,#cacaca 40%,#d2d2d2);"></div>
<div class="r" style="left:303.70px;top:237.50px;width:7.40px;height:7.40px;background:#050505;border-radius:1px;"></div>
<svg style="left:303.7px;top:237.5px" width="7.6" height="8.2" viewBox="0 0 7.6 8.2"><path d="M2.2 2.4V3.4M5 2.4V3.4" stroke="#e8e8e8" stroke-width="1"/><path d="M1.6 5.8H6" stroke="#d8d020" stroke-width="0.9"/></svg>
<span class="t" style="left:312.50px;top:239px;font-size:6.1px;line-height:6.1px;color:#f2f5fa;font-weight:bold;">Frequency vs Time</span>
<div class="r" style="left:575.70px;top:237.60px;width:7.80px;height:7.20px;background:#d2d2d2;border:0.6px solid #e8e8e8;"></div>
<div class="r" style="left:577.70px;top:239.70px;width:3.80px;height:2.60px;background:transparent;border:0.6px solid #f4f4f4;"></div>
<div class="r" style="left:585.10px;top:237.60px;width:8.20px;height:7.20px;background:#d2d2d2;border:0.6px solid #e8e8e8;"></div>
<svg style="left:586.9px;top:238.9px" width="4.6" height="4.6" viewBox="0 0 4.6 4.6"><path d="M0.6 0.6L4 4M4 0.6L0.6 4" stroke="#f0f0f0" stroke-width="0.8"/></svg>
<span class="t" style="left:417.60px;top:251px;font-size:5.5px;line-height:5.5px;color:#000;">+Peak Normal</span>
<div class="btn" style="left:571.1px;top:248.0px;width:18.6px;height:9.2px;"></div>
<span class="t" style="left:574.70px;top:251px;font-size:5.6px;line-height:5.6px;color:#111;letter-spacing:-0.12px;">Clear</span>
<svg style="left:303.4px;top:260.8px" width="3.2" height="2.8" viewBox="0 0 3.2 2.8"><path d="M1.6 0L3.2 2.8H0Z" fill="#2f6a3a"/></svg>
<span class="t" style="left:312.40px;top:261px;font-size:5.6px;line-height:5.6px;color:#000;">500 kHz</span>
<svg style="left:303.59999999999997px;top:329.20000000000005px" width="3.2" height="2.8" viewBox="0 0 3.2 2.8"><path d="M1.6 0L3.2 2.8H0Z" fill="#2f6a3a"/></svg>
<span class="t" style="left:308.60px;top:326px;font-size:5.5px;line-height:5.5px;color:#000;">Position:</span>
<span class="t" style="left:310.00px;top:334px;font-size:5.6px;line-height:5.6px;color:#000;">0.000 Hz</span>
<span class="t" style="left:303.60px;top:397px;font-size:5.6px;line-height:5.6px;color:#000;">-500 kHz</span>
<div class="r" style="left:346.40px;top:258.75px;width:243.40px;height:145.85px;background:#000;"></div>
<svg style="left:346.4px;top:258.75px" width="243.4" height="145.9"><g stroke="#585858" stroke-width="0.85" fill="none"><path d="M25.00 0V145.85"/><path d="M49.25 0V145.85"/><path d="M73.50 0V145.85"/><path d="M97.75 0V145.85"/><path d="M122.00 0V145.85"/><path d="M146.25 0V145.85"/><path d="M170.50 0V145.85"/><path d="M194.75 0V145.85"/><path d="M219.00 0V145.85"/><path d="M0 14.58H243.40"/><path d="M0 29.17H243.40"/><path d="M0 43.75H243.40"/><path d="M0 58.34H243.40"/><path d="M0 72.93H243.40"/><path d="M0 87.51H243.40"/><path d="M0 102.10H243.40"/><path d="M0 116.68H243.40"/><path d="M0 131.26H243.40"/></g><path d="M20.50 40.9h1.6V112.1h-1.6ZM23.70 40.9h1.1V112.1h-1.1ZM25.90 40.9h1.8V112.1h-1.8ZM29.50 40.9h1.2V112.1h-1.2ZM31.90 40.9h2.3V112.1h-2.3ZM36.50 40.9h1.3V112.1h-1.3ZM39.10 40.9h1.5V112.1h-1.5ZM42.00 39.9h2.7V112.1h-2.7ZM47.00 39.9h2.7V112.1h-2.7ZM52.00 39.9h2.7V112.1h-2.7ZM57.00 39.9h2.7V112.1h-2.7ZM62.00 39.9h2.7V112.1h-2.7ZM67.00 39.9h2.7V112.1h-2.7ZM72.00 39.9h2.7V112.1h-2.7ZM77.00 39.9h2.7V112.1h-2.7ZM82.00 39.9h2.7V112.1h-2.7ZM87.00 39.9h2.7V112.1h-2.7ZM92.00 39.9h2.7V112.1h-2.7ZM97.00 39.9h2.7V112.1h-2.7ZM102.00 39.9h2.7V112.1h-2.7ZM107.00 39.9h2.7V112.1h-2.7ZM112.00 39.9h2.7V112.1h-2.7ZM117.00 39.9h2.7V112.1h-2.7ZM122.00 39.9h2.7V112.1h-2.7ZM127.00 39.9h2.7V112.1h-2.7ZM132.00 39.9h2.7V112.1h-2.7ZM137.00 39.9h2.7V112.1h-2.7ZM142.00 39.9h2.7V112.1h-2.7ZM147.00 39.9h2.7V112.1h-2.7ZM152.00 39.9h2.7V112.1h-2.7ZM157.00 39.9h2.7V112.1h-2.7ZM162.00 39.9h2.7V112.1h-2.7ZM167.00 39.9h2.7V112.1h-2.7ZM172.00 39.9h2.7V112.1h-2.7ZM177.00 39.9h2.7V112.1h-2.7ZM182.00 39.9h2.7V112.1h-2.7ZM187.00 39.9h2.7V112.1h-2.7ZM192.00 39.9h2.7V112.1h-2.7ZM197.00 39.9h2.7V112.1h-2.7ZM202.00 39.9h2.7V112.1h-2.7ZM207.00 39.9h2.7V112.1h-2.7ZM212.00 39.9h2.7V112.1h-2.7ZM217.00 39.9h2.7V112.1h-2.7Z" fill="#38360a"/><path d="M2.0 73.2L5.4 74.2L6.0 51.8L6.9 107.0L8.1 52.1L9.0 112.2L9.9 46.6L10.8 108.4L11.9 44.2L12.8 106.1L14.2 42.4L15.1 108.9L16.2 42.4L17.1 106.2L18.4 47.4L19.3 103.0" stroke="#c4bc22" stroke-width="0.9" fill="none"/><path d="M20.9 114.1L20.5 115.0L20.8 39.8L21.9 41.3L22.1 115.0L23.7 113.6L24.0 38.1L24.7 39.6L24.8 113.6L25.9 114.6L26.2 37.9L27.5 39.4L27.7 114.6L29.5 113.3L29.8 38.5L30.6 40.0L30.7 113.3L31.9 114.9L32.2 38.9L34.0 40.4L34.2 114.9L36.5 113.6L36.8 39.9L37.7 41.4L37.8 113.6L39.1 114.9L39.4 38.2L40.5 39.7L40.6 114.9" stroke="#e6e020" stroke-width="0.9" fill="none" stroke-linejoin="round"/><path d="M43.85 38.8L44.10 41.6L44.35 51.6L44.60 76.0L44.85 100.3L45.10 110.2L45.35 113.0L45.60 113.7L45.85 113.9M48.85 39.0L49.10 41.8L49.35 51.7L49.60 75.9L49.85 100.6L50.10 110.7L50.35 113.5L50.60 114.2L50.85 114.4M53.85 38.0L54.10 40.9L54.35 51.1L54.60 75.9L54.85 101.1L55.10 111.4L55.35 114.3L55.60 115.1L55.85 115.2M58.85 38.0L59.10 40.8L59.35 51.0L59.60 75.9L59.85 100.2L60.10 110.1L60.35 112.8L60.60 113.6L60.85 113.7M63.85 39.0L64.10 41.8L64.35 51.7L64.60 75.9L64.85 101.0L65.10 111.2L65.35 114.1L65.60 114.9L65.85 115.0M68.85 38.6L69.10 41.4L69.35 51.4L69.60 75.9L69.85 100.5L70.10 110.6L70.35 113.4L70.60 114.2L70.85 114.3M73.85 38.0L74.10 40.9L74.35 51.0L74.60 76.0L74.85 100.6L75.10 110.7L75.35 113.5L75.60 114.3L75.85 114.4M78.85 39.4L79.10 42.1L79.35 51.9L79.60 75.9L79.85 101.0L80.10 111.2L80.35 114.1L80.60 114.9L80.85 115.1M83.85 38.9L84.10 41.7L84.35 51.6L84.60 76.0L84.85 100.5L85.10 110.5L85.35 113.3L85.60 114.1L85.85 114.3M88.85 39.2L89.10 41.9L89.35 51.8L89.60 75.9L89.85 100.6L90.10 110.7L90.35 113.5L90.60 114.3L90.85 114.5M93.85 38.0L94.10 40.9L94.35 51.1L94.60 76.0L94.85 100.8L95.10 111.0L95.35 113.8L95.60 114.6L95.85 114.8M98.85 39.2L99.10 42.0L99.35 51.8L99.60 75.9L99.85 101.2L100.10 111.5L100.35 114.4L100.60 115.1L100.85 115.3M103.85 38.0L104.10 40.9L104.35 51.0L104.60 76.0L104.85 100.4L105.10 110.4L105.35 113.2L105.60 114.0L105.85 114.2M108.85 39.2L109.10 42.0L109.35 51.9L109.60 75.9L109.85 101.0L110.10 111.2L110.35 114.1L110.60 114.9L110.85 115.0M113.85 38.6L114.10 41.4L114.35 51.4L114.60 76.0L114.85 100.9L115.10 111.0L115.35 113.9L115.60 114.7L115.85 114.8M118.85 38.4L119.10 41.2L119.35 51.3L119.60 75.9L119.85 100.8L120.10 110.9L120.35 113.7L120.60 114.5L120.85 114.7M123.85 38.8L124.10 41.6L124.35 51.5L124.60 75.9L124.85 100.5L125.10 110.5L125.35 113.3L125.60 114.1L125.85 114.3M128.85 39.3L129.10 42.1L129.35 51.9L129.60 75.9L129.85 100.4L130.10 110.4L130.35 113.2L130.60 114.0L130.85 114.2M133.85 38.3L134.10 41.1L134.35 51.2L134.60 75.9L134.85 100.1L135.10 110.0L135.35 112.7L135.60 113.5L135.85 113.6M138.85 38.1L139.10 40.9L139.35 51.1L139.60 75.9L139.85 100.2L140.10 110.1L140.35 112.9L140.60 113.6L140.85 113.8M143.85 38.7L144.10 41.5L144.35 51.5L144.60 75.9L144.85 100.1L145.10 110.0L145.35 112.8L145.60 113.5L145.85 113.7M148.85 38.3L149.10 41.1L149.35 51.2L149.60 75.9L149.85 100.9L150.10 111.1L150.35 113.9L150.60 114.7L150.85 114.9M153.85 38.1L154.10 40.9L154.35 51.1L154.60 75.9L154.85 100.3L155.10 110.3L155.35 113.1L155.60 113.8L155.85 114.0M158.85 38.2L159.10 41.0L159.35 51.1L159.60 76.0L159.85 100.2L160.10 110.1L160.35 112.9L160.60 113.7L160.85 113.8M163.85 38.0L164.10 40.8L164.35 51.0L164.60 75.9L164.85 100.1L165.10 110.0L165.35 112.8L165.60 113.5L165.85 113.7M168.85 38.2L169.10 41.0L169.35 51.2L169.60 75.9L169.85 101.0L170.10 111.2L170.35 114.1L170.60 114.9L170.85 115.1M173.85 38.4L174.10 41.2L174.35 51.3L174.60 75.9L174.85 101.0L175.10 111.3L175.35 114.2L175.60 114.9L175.85 115.1M178.85 38.4L179.10 41.2L179.35 51.3L179.60 76.0L179.85 100.8L180.10 111.0L180.35 113.8L180.60 114.6L180.85 114.8M183.85 39.1L184.10 41.9L184.35 51.7L184.60 75.9L184.85 100.4L185.10 110.3L185.35 113.1L185.60 113.9L185.85 114.1M188.85 38.4L189.10 41.2L189.35 51.3L189.60 75.9L189.85 100.3L190.10 110.3L190.35 113.1L190.60 113.8L190.85 114.0M193.85 38.7L194.10 41.5L194.35 51.5L194.60 75.9L194.85 100.4L195.10 110.4L195.35 113.1L195.60 113.9L195.85 114.1M198.85 38.2L199.10 41.0L199.35 51.1L199.60 76.0L199.85 100.6L200.10 110.6L200.35 113.4L200.60 114.2L200.85 114.4M203.85 38.4L204.10 41.3L204.35 51.3L204.60 75.9L204.85 100.2L205.10 110.1L205.35 112.9L205.60 113.7L205.85 113.8M208.85 37.9L209.10 40.8L209.35 51.0L209.60 75.9L209.85 100.6L210.10 110.6L210.35 113.4L210.60 114.2L210.85 114.4M213.85 38.3L214.10 41.1L214.35 51.2L214.60 75.9L214.85 100.3L215.10 110.3L215.35 113.1L215.60 113.9L215.85 114.0M218.85 37.9L219.10 40.8L219.35 51.0L219.60 76.0L219.85 101.1L220.10 111.4L220.35 114.3L220.60 115.1L220.85 115.3" stroke="#7e781a" stroke-width="0.75" fill="none"/><path d="M42.10 76.0L42.35 51.6L42.60 41.6L42.85 38.8L43.10 38.0L43.35 37.9L43.60 38.0L43.85 38.8M45.85 113.9L46.10 113.7L46.35 113.0L46.60 110.2L46.85 100.3L47.10 76.0L47.35 51.7L47.60 41.8L47.85 39.0L48.10 38.2L48.35 38.1L48.60 38.2L48.85 39.0M50.85 114.4L51.10 114.2L51.35 113.5L51.60 110.7L51.85 100.6L52.10 76.0L52.35 51.1L52.60 40.9L52.85 38.0L53.10 37.3L53.35 37.1L53.60 37.3L53.85 38.0M55.85 115.2L56.10 115.1L56.35 114.3L56.60 111.4L56.85 101.1L57.10 76.0L57.35 51.0L57.60 40.8L57.85 38.0L58.10 37.2L58.35 37.0L58.60 37.2L58.85 38.0M60.85 113.7L61.10 113.6L61.35 112.8L61.60 110.1L61.85 100.2L62.10 76.0L62.35 51.7L62.60 41.8L62.85 39.0L63.10 38.2L63.35 38.1L63.60 38.2L63.85 39.0M65.85 115.0L66.10 114.9L66.35 114.1L66.60 111.2L66.85 101.0L67.10 76.0L67.35 51.4L67.60 41.4L67.85 38.6L68.10 37.8L68.35 37.6L68.60 37.8L68.85 38.6M70.85 114.3L71.10 114.2L71.35 113.4L71.60 110.6L71.85 100.5L72.10 76.0L72.35 51.0L72.60 40.9L72.85 38.0L73.10 37.2L73.35 37.1L73.60 37.2L73.85 38.0M75.85 114.4L76.10 114.3L76.35 113.5L76.60 110.7L76.85 100.6L77.10 76.0L77.35 51.9L77.60 42.1L77.85 39.4L78.10 38.6L78.35 38.5L78.60 38.6L78.85 39.4M80.85 115.1L81.10 114.9L81.35 114.1L81.60 111.2L81.85 101.0L82.10 76.0L82.35 51.6L82.60 41.7L82.85 38.9L83.10 38.1L83.35 38.0L83.60 38.1L83.85 38.9M85.85 114.3L86.10 114.1L86.35 113.3L86.60 110.5L86.85 100.5L87.10 76.0L87.35 51.8L87.60 41.9L87.85 39.2L88.10 38.4L88.35 38.2L88.60 38.4L88.85 39.2M90.85 114.5L91.10 114.3L91.35 113.5L91.60 110.7L91.85 100.6L92.10 76.0L92.35 51.1L92.60 40.9L92.85 38.0L93.10 37.3L93.35 37.1L93.60 37.3L93.85 38.0M95.85 114.8L96.10 114.6L96.35 113.8L96.60 111.0L96.85 100.8L97.10 76.0L97.35 51.8L97.60 42.0L97.85 39.2L98.10 38.5L98.35 38.3L98.60 38.5L98.85 39.2M100.85 115.3L101.10 115.1L101.35 114.4L101.60 111.5L101.85 101.2L102.10 76.0L102.35 51.0L102.60 40.9L102.85 38.0L103.10 37.2L103.35 37.1L103.60 37.2L103.85 38.0M105.85 114.2L106.10 114.0L106.35 113.2L106.60 110.4L106.85 100.4L107.10 75.9L107.35 51.9L107.60 42.0L107.85 39.2L108.10 38.5L108.35 38.3L108.60 38.5L108.85 39.2M110.85 115.0L111.10 114.9L111.35 114.1L111.60 111.2L111.85 101.0L112.10 76.0L112.35 51.4L112.60 41.4L112.85 38.6L113.10 37.8L113.35 37.7L113.60 37.8L113.85 38.6M115.85 114.8L116.10 114.7L116.35 113.9L116.60 111.0L116.85 100.9L117.10 76.0L117.35 51.3L117.60 41.2L117.85 38.4L118.10 37.7L118.35 37.5L118.60 37.7L118.85 38.4M120.85 114.7L121.10 114.5L121.35 113.7L121.60 110.9L121.85 100.8L122.10 76.0L122.35 51.5L122.60 41.6L122.85 38.8L123.10 38.0L123.35 37.8L123.60 38.0L123.85 38.8M125.85 114.3L126.10 114.1L126.35 113.3L126.60 110.5L126.85 100.5L127.10 75.9L127.35 51.9L127.60 42.1L127.85 39.3L128.10 38.6L128.35 38.4L128.60 38.6L128.85 39.3M130.85 114.2L131.10 114.0L131.35 113.2L131.60 110.4L131.85 100.4L132.10 76.0L132.35 51.2L132.60 41.1L132.85 38.3L133.10 37.5L133.35 37.4L133.60 37.5L133.85 38.3M135.85 113.6L136.10 113.5L136.35 112.7L136.60 110.0L136.85 100.1L137.10 76.0L137.35 51.1L137.60 40.9L137.85 38.1L138.10 37.3L138.35 37.2L138.60 37.3L138.85 38.1M140.85 113.8L141.10 113.6L141.35 112.9L141.60 110.1L141.85 100.2L142.10 76.0L142.35 51.5L142.60 41.5L142.85 38.7L143.10 38.0L143.35 37.8L143.60 38.0L143.85 38.7M145.85 113.7L146.10 113.5L146.35 112.8L146.60 110.0L146.85 100.1L147.10 75.9L147.35 51.2L147.60 41.1L147.85 38.3L148.10 37.5L148.35 37.3L148.60 37.5L148.85 38.3M150.85 114.9L151.10 114.7L151.35 113.9L151.60 111.1L151.85 100.9L152.10 76.0L152.35 51.1L152.60 40.9L152.85 38.1L153.10 37.3L153.35 37.1L153.60 37.3L153.85 38.1M155.85 114.0L156.10 113.8L156.35 113.1L156.60 110.3L156.85 100.3L157.10 76.0L157.35 51.1L157.60 41.0L157.85 38.2L158.10 37.4L158.35 37.2L158.60 37.4L158.85 38.2M160.85 113.8L161.10 113.7L161.35 112.9L161.60 110.1L161.85 100.2L162.10 76.0L162.35 51.0L162.60 40.8L162.85 38.0L163.10 37.2L163.35 37.0L163.60 37.2L163.85 38.0M165.85 113.7L166.10 113.5L166.35 112.8L166.60 110.0L166.85 100.1L167.10 75.9L167.35 51.2L167.60 41.0L167.85 38.2L168.10 37.4L168.35 37.3L168.60 37.4L168.85 38.2M170.85 115.1L171.10 114.9L171.35 114.1L171.60 111.2L171.85 101.0L172.10 75.9L172.35 51.3L172.60 41.2L172.85 38.4L173.10 37.6L173.35 37.4L173.60 37.6L173.85 38.4M175.85 115.1L176.10 114.9L176.35 114.2L176.60 111.3L176.85 101.0L177.10 76.0L177.35 51.3L177.60 41.2L177.85 38.4L178.10 37.6L178.35 37.4L178.60 37.6L178.85 38.4M180.85 114.8L181.10 114.6L181.35 113.8L181.60 111.0L181.85 100.8L182.10 76.0L182.35 51.7L182.60 41.9L182.85 39.1L183.10 38.3L183.35 38.2L183.60 38.3L183.85 39.1M185.85 114.1L186.10 113.9L186.35 113.1L186.60 110.3L186.85 100.4L187.10 76.0L187.35 51.3L187.60 41.2L187.85 38.4L188.10 37.6L188.35 37.4L188.60 37.6L188.85 38.4M190.85 114.0L191.10 113.8L191.35 113.1L191.60 110.3L191.85 100.3L192.10 76.0L192.35 51.5L192.60 41.5L192.85 38.7L193.10 37.9L193.35 37.8L193.60 37.9L193.85 38.7M195.85 114.1L196.10 113.9L196.35 113.1L196.60 110.4L196.85 100.4L197.10 76.0L197.35 51.1L197.60 41.0L197.85 38.2L198.10 37.4L198.35 37.2L198.60 37.4L198.85 38.2M200.85 114.4L201.10 114.2L201.35 113.4L201.60 110.6L201.85 100.6L202.10 76.0L202.35 51.3L202.60 41.3L202.85 38.4L203.10 37.7L203.35 37.5L203.60 37.7L203.85 38.4M205.85 113.8L206.10 113.7L206.35 112.9L206.60 110.1L206.85 100.2L207.10 76.0L207.35 51.0L207.60 40.8L207.85 37.9L208.10 37.1L208.35 37.0L208.60 37.1L208.85 37.9M210.85 114.4L211.10 114.2L211.35 113.4L211.60 110.6L211.85 100.6L212.10 75.9L212.35 51.2L212.60 41.1L212.85 38.3L213.10 37.5L213.35 37.4L213.60 37.5L213.85 38.3M215.85 114.0L216.10 113.9L216.35 113.1L216.60 110.3L216.85 100.3L217.10 76.0L217.35 51.0L217.60 40.8L217.85 37.9L218.10 37.1L218.35 37.0L218.60 37.1L218.85 37.9M220.85 115.3L221.10 115.1L221.35 114.3L221.60 111.4L221.85 101.1L222.10 76.0" stroke="#f4f02c" stroke-width="0.85" fill="none" stroke-linejoin="round"/><path d="M222.1 76.0L222.1 44.4L222.9 109.9L223.7 41.3L224.5 106.5L225.4 43.9L226.2 100.7L227.0 42.4L227.8 98.3L228.4 45.2L229.2 99.9L230.1 51.0L230.9 100.1L232.0 46.3L232.8 98.1L233.5 50.7L234.3 89.6L235.4 52.8L236.2 92.3L237.3 43.1L238.1 87.2L239.2 51.7L240.0 86.3" stroke="#e4de20" stroke-width="0.9" fill="none"/><g opacity="0.4"><g stroke="#9a9a9a" stroke-width="0.7" fill="none"><path d="M25.00 0V145.85"/><path d="M49.25 0V145.85"/><path d="M73.50 0V145.85"/><path d="M97.75 0V145.85"/><path d="M122.00 0V145.85"/><path d="M146.25 0V145.85"/><path d="M170.50 0V145.85"/><path d="M194.75 0V145.85"/><path d="M219.00 0V145.85"/><path d="M0 14.58H243.40"/><path d="M0 29.17H243.40"/><path d="M0 43.75H243.40"/><path d="M0 58.34H243.40"/><path d="M0 72.93H243.40"/><path d="M0 87.51H243.40"/><path d="M0 102.10H243.40"/><path d="M0 116.68H243.40"/><path d="M0 131.26H243.40"/></g></g><path d="M0.4 0V12" stroke="#e8e220" stroke-width="0.8"/><path d="M0.9 11V145.9" stroke="#ece622" stroke-width="1.8"/><path d="M241.9 0V145.9" stroke="#f8f424" stroke-width="3"/></svg>
<svg style="left:347.4px;top:404.8px" width="2.6" height="2.6" viewBox="0 0 2.6 2.6"><path d="M0 0H2.6L1.3 2.4Z" fill="#d02020"/></svg>
<div class="btn" style="left:303.8px;top:407.0px;width:32.6px;height:9.2px;"></div>
<span class="t" style="left:308.20px;top:410px;font-size:5.6px;line-height:5.6px;color:#111;">Autoscale</span>
<div class="r" style="left:352.00px;top:412.20px;width:2.00px;height:2.00px;background:#2f5f45;border-radius:50%;"></div>
<span class="t" style="left:358.80px;top:411px;font-size:5.5px;line-height:5.5px;color:#000;">Position:</span>
<span class="t" style="left:385.00px;top:411px;font-size:5.5px;line-height:5.5px;color:#000;font-style:italic;">-4.324 us</span>
<div class="r" style="left:525.40px;top:412.20px;width:2.00px;height:2.00px;background:#2f5f45;border-radius:50%;"></div>
<span class="t" style="left:532.40px;top:411px;font-size:5.5px;line-height:5.5px;color:#000;">Scale:</span>
<span class="t" style="left:553.60px;top:411px;font-size:5.5px;line-height:5.5px;color:#000;font-style:italic;">394.643 us</span>
<span class="t" style="left:301.40px;top:419px;font-size:4.9px;line-height:4.9px;color:#000;">Max:</span>
<span class="t" style="left:320.00px;top:419px;font-size:4.9px;line-height:4.9px;color:#000;">1.672 MHz</span>
<span class="t" style="left:357.80px;top:419px;font-size:4.6px;line-height:4.6px;color:#000;">@</span>
<span class="t" style="left:366.40px;top:419px;font-size:4.9px;line-height:4.9px;color:#000;">388.8 us</span>
<span class="t" style="left:393.00px;top:419px;font-size:4.9px;line-height:4.9px;color:#000;">Min:</span>
<span class="t" style="left:410.00px;top:419px;font-size:4.9px;line-height:4.9px;color:#000;">-1.445 MHz</span>
<span class="t" style="left:447.80px;top:419px;font-size:4.6px;line-height:4.6px;color:#000;">@</span>
<span class="t" style="left:456.40px;top:419px;font-size:4.9px;line-height:4.9px;color:#000;">385.9 us</span>
<div class="r" style="left:4.40px;top:427.40px;width:591.20px;height:17.20px;background:#fff;border-bottom:0.8px solid #d8d8d8;"></div>
<span class="t" style="left:5.50px;top:434px;font-size:6.5px;line-height:6.5px;color:#111;">Markers</span>
<div class="r" style="left:57.00px;top:430.80px;width:10.60px;height:11.60px;background:#fff;border:0.7px solid #a8a8a8;"></div>
<svg style="left:59.8px;top:435.0px" width="5" height="3.6" viewBox="0 0 5 3.6"><path d="M0.5 0.5L2.5 2.8L4.5 0.5" stroke="#2a3a8a" stroke-width="1.1" fill="none"/></svg>
<span class="t" style="left:72.00px;top:434px;font-size:6.5px;line-height:6.5px;color:#111;">All Off</span>
<div class="btn" style="left:194.7px;top:431.4px;width:37.3px;height:10.8px;border-color:#b9d2e8;"></div>
<span class="t" style="left:199.20px;top:434px;font-size:6.6px;line-height:6.6px;color:#9fb8cc;">To Center</span>
<div class="btn" style="left:237.3px;top:431.4px;width:21.4px;height:10.8px;border-color:#3f7fc4;"></div>
<span class="t" style="left:240.80px;top:434px;font-size:6.3px;line-height:6.3px;color:#000;">Peak</span>
<div class="btn" style="left:261.3px;top:431.4px;width:13.4px;height:10.8px;border-color:#9fc4e6;"></div>
<svg style="left:263.6px;top:432.40000000000003px" width="8.8" height="8.8" viewBox="0 0 8.8 8.8"><path transform="rotate(0 4.4 4.4)" d="M0.8 4.4L4.2 1.2V3H8V5.8H4.2V7.6Z" fill="#fff" stroke="#333" stroke-width="0.7" stroke-linejoin="round"/></svg>
<div class="btn" style="left:278.7px;top:431.4px;width:12.8px;height:10.8px;border-color:#9fc4e6;"></div>
<svg style="left:280.70000000000005px;top:432.40000000000003px" width="8.8" height="8.8" viewBox="0 0 8.8 8.8"><path transform="rotate(180 4.4 4.4)" d="M0.8 4.4L4.2 1.2V3H8V5.8H4.2V7.6Z" fill="#fff" stroke="#333" stroke-width="0.7" stroke-linejoin="round"/></svg>
<div class="btn" style="left:296.0px;top:431.4px;width:12.2px;height:10.8px;border-color:#9fc4e6;"></div>
<svg style="left:297.70000000000005px;top:432.40000000000003px" width="8.8" height="8.8" viewBox="0 0 8.8 8.8"><path transform="rotate(270 4.4 4.4)" d="M0.8 4.4L4.2 1.2V3H8V5.8H4.2V7.6Z" fill="#fff" stroke="#333" stroke-width="0.7" stroke-linejoin="round"/></svg>
<div class="btn" style="left:312.0px;top:431.4px;width:12.6px;height:10.8px;border-color:#9fc4e6;"></div>
<svg style="left:313.90000000000003px;top:432.40000000000003px" width="8.8" height="8.8" viewBox="0 0 8.8 8.8"><path transform="rotate(90 4.4 4.4)" d="M0.8 4.4L4.2 1.2V3H8V5.8H4.2V7.6Z" fill="#fff" stroke="#333" stroke-width="0.7" stroke-linejoin="round"/></svg>
<div class="r" style="left:372.00px;top:432.00px;width:49.40px;height:10.20px;background:#efefef;border:0.7px solid #c2c8d0;"></div>
<span class="t" style="left:373.80px;top:434px;font-size:6.3px;line-height:6.3px;color:#9ab4cc;">Time</span>
<div class="r" style="left:414.80px;top:433.00px;width:5.80px;height:8.20px;background:#f4f8fc;border:0.6px solid #9fc4e6;"></div>
<svg style="left:415.9px;top:436.0px" width="3.6" height="2.6" viewBox="0 0 3.6 2.6"><path d="M0.3 0.3L1.8 2L3.3 0.3" stroke="#6a8ab0" stroke-width="0.8" fill="none"/></svg>
<div class="r" style="left:425.00px;top:432.00px;width:63.80px;height:10.20px;background:#e4e4e4;border:0.7px solid #cdcdcd;"></div>
<div class="btn" style="left:526.2px;top:431.4px;width:23.4px;height:10.8px;border-color:#5a9bd8;"></div>
<span class="t" style="left:530.00px;top:434px;font-size:6.3px;line-height:6.3px;color:#000;">Table</span>
<div class="btn" style="left:553.0px;top:431.4px;width:24.6px;height:10.8px;border-color:#5a9bd8;"></div>
<span class="t" style="left:556.20px;top:434px;font-size:6.3px;line-height:6.3px;color:#000;">Define</span>
<div class="btn" style="left:580.5px;top:431.4px;width:12.1px;height:10.8px;border-color:#5a9bd8;"></div>
<svg style="left:583.4px;top:433.6px" width="6.4" height="6.4" viewBox="0 0 6.4 6.4"><path d="M0.8 0.8L5.6 5.6M5.6 0.8L0.8 5.6" stroke="#000" stroke-width="1.3"/></svg>
<div class="r" style="left:4.40px;top:445.20px;width:591.20px;height:15.20px;background:#fff;"></div>
<span class="t" style="left:5.00px;top:450px;font-size:6.5px;line-height:6.5px;color:#111;">DPX Spectrum</span>
<span class="t" style="left:57.50px;top:450px;font-size:6.7px;line-height:6.7px;color:#111;">Frequency</span>
<div class="r" style="left:91.20px;top:447.30px;width:43.80px;height:10.20px;background:#fff;border:0.7px solid #b8b8b8;"></div>
<span class="t" style="left:93.80px;top:450px;font-size:6.5px;line-height:6.5px;color:#111;">.445315 GHz</span>
<span class="t" style="left:192.00px;top:450px;font-size:6.5px;line-height:6.5px;color:#111;">Ref Lev</span>
<div class="r" style="left:218.00px;top:447.30px;width:43.40px;height:10.20px;background:#fff;border:0.7px solid #b8b8b8;"></div>
<span class="t" style="left:220.20px;top:450px;font-size:6.5px;line-height:6.5px;color:#111;">0.00 dBm</span>
<span class="t" style="left:327.50px;top:450px;font-size:6.5px;line-height:6.5px;color:#111;">Span</span>
<div class="r" style="left:345.00px;top:447.30px;width:43.20px;height:10.20px;background:#fff;border:0.7px solid #b8b8b8;"></div>
<span class="t" style="left:348.00px;top:450px;font-size:6.5px;line-height:6.5px;color:#111;">10.00 MHz</span>
<span class="t" style="left:445.00px;top:450px;font-size:6.5px;line-height:6.5px;color:#111;">Res BW</span>
<div class="r" style="left:472.00px;top:447.30px;width:43.60px;height:10.20px;background:#fff;border:0.7px solid #b8b8b8;"></div>
<span class="t" style="left:475.00px;top:450px;font-size:6.5px;line-height:6.5px;color:#111;font-style:italic;">100 kHz</span>
<div class="btn" style="left:524.3px;top:447.4px;width:27.3px;height:10.2px;border-color:#5a9bd8;"></div>
<span class="t" style="left:526.80px;top:450px;font-size:6.3px;line-height:6.3px;color:#000;">Markers</span>
<div class="btn" style="left:554.5px;top:447.4px;width:23.7px;height:10.2px;border-color:#5a9bd8;"></div>
<span class="t" style="left:557.00px;top:450px;font-size:6.3px;line-height:6.3px;color:#000;">Traces</span>
<div class="btn" style="left:580.5px;top:447.0px;width:12.1px;height:11.0px;border-color:#5a9bd8;"></div>
<svg style="left:581.6px;top:447.4px" width="10" height="10" viewBox="0 0 10 10"><g transform="translate(5 5)"><rect x="-1.1" y="-4.8" width="2.2" height="2.6" transform="rotate(0)" fill="#000"/><rect x="-1.1" y="-4.8" width="2.2" height="2.6" transform="rotate(45)" fill="#000"/><rect x="-1.1" y="-4.8" width="2.2" height="2.6" transform="rotate(90)" fill="#000"/><rect x="-1.1" y="-4.8" width="2.2" height="2.6" transform="rotate(135)" fill="#000"/><rect x="-1.1" y="-4.8" width="2.2" height="2.6" transform="rotate(180)" fill="#000"/><rect x="-1.1" y="-4.8" width="2.2" height="2.6" transform="rotate(225)" fill="#000"/><rect x="-1.1" y="-4.8" width="2.2" height="2.6" transform="rotate(270)" fill="#000"/><rect x="-1.1" y="-4.8" width="2.2" height="2.6" transform="rotate(315)" fill="#000"/><circle r="2.9" fill="none" stroke="#000" stroke-width="1.8"/></g></svg>
<div class="r" style="left:4.00px;top:460.60px;width:592.00px;height:14.00px;background:linear-gradient(#fdfdfd,#f2f2f2 50%,#dcdcdc);border:1.1px solid #5a9de2;border-radius:0 0 1.5px 1.5px;"></div>
<span class="t" style="left:7.50px;top:464px;font-size:6.0px;line-height:6.0px;color:#111;">Stopped</span>
<span class="t" style="left:60.00px;top:464px;font-size:6.0px;line-height:6.0px;color:#111;">Acq BW: 10.00 MHz, Acq Length: 462.426 us</span>
<span class="t" style="left:195.00px;top:464px;font-size:6.0px;line-height:6.0px;color:#111;">Real Time</span>
<span class="t" style="left:232.50px;top:464px;font-size:6.0px;line-height:6.0px;color:#111;">Power</span>
<span class="t" style="left:282.50px;top:464px;font-size:6.0px;line-height:6.0px;color:#111;">Ref: Int</span>
<span class="t" style="left:313.80px;top:464px;font-size:6.0px;line-height:6.0px;color:#111;">Atten: 20 d</span>
<span class="t" style="left:350.00px;top:464px;font-size:6.0px;line-height:6.0px;color:#111;">Preamp: Of</span>
<span class="t" style="left:386.20px;top:464px;font-size:6.0px;line-height:6.0px;color:#111;">TG: Off</span>
<div class="r" style="left:57.00px;top:462.60px;width:0.70px;height:10.40px;background:#b8b8b8;"></div>
<div class="r" style="left:191.00px;top:462.60px;width:0.70px;height:10.40px;background:#b8b8b8;"></div>
<div class="r" style="left:229.50px;top:462.60px;width:0.70px;height:10.40px;background:#b8b8b8;"></div>
<div class="r" style="left:279.50px;top:462.60px;width:0.70px;height:10.40px;background:#b8b8b8;"></div>
<div class="r" style="left:310.50px;top:462.60px;width:0.70px;height:10.40px;background:#b8b8b8;"></div>
<div class="r" style="left:347.50px;top:462.60px;width:0.70px;height:10.40px;background:#b8b8b8;"></div>
<div class="r" style="left:383.20px;top:462.60px;width:0.70px;height:10.40px;background:#b8b8b8;"></div>
<div class="r" style="left:408.00px;top:462.60px;width:0.70px;height:10.40px;background:#b8b8b8;"></div>
<svg style="left:585.0px;top:464.8px" width="7.2" height="6.8" viewBox="0 0 7.2 6.8"><path d="M0.6 6.2Q0.8 1.2 6.6 0.6Q6.6 5.6 0.6 6.2Z" fill="#2a9a2a" stroke="#0a5a1a" stroke-width="0.6"/><path d="M1.4 5.4L5.6 1.6" stroke="#8ad88a" stroke-width="0.5"/></svg>
<div class="r" style="left:596.80px;top:27.60px;width:3.20px;height:401.00px;background:#dde6f1;"></div>
<div class="r" style="left:597.60px;top:3.40px;width:2.40px;height:24.20px;background:#d4d8de;"></div>
<div class="r" style="left:597.20px;top:338.50px;width:2.80px;height:19.50px;background:#7a8eb0;"></div>
</body></html>
